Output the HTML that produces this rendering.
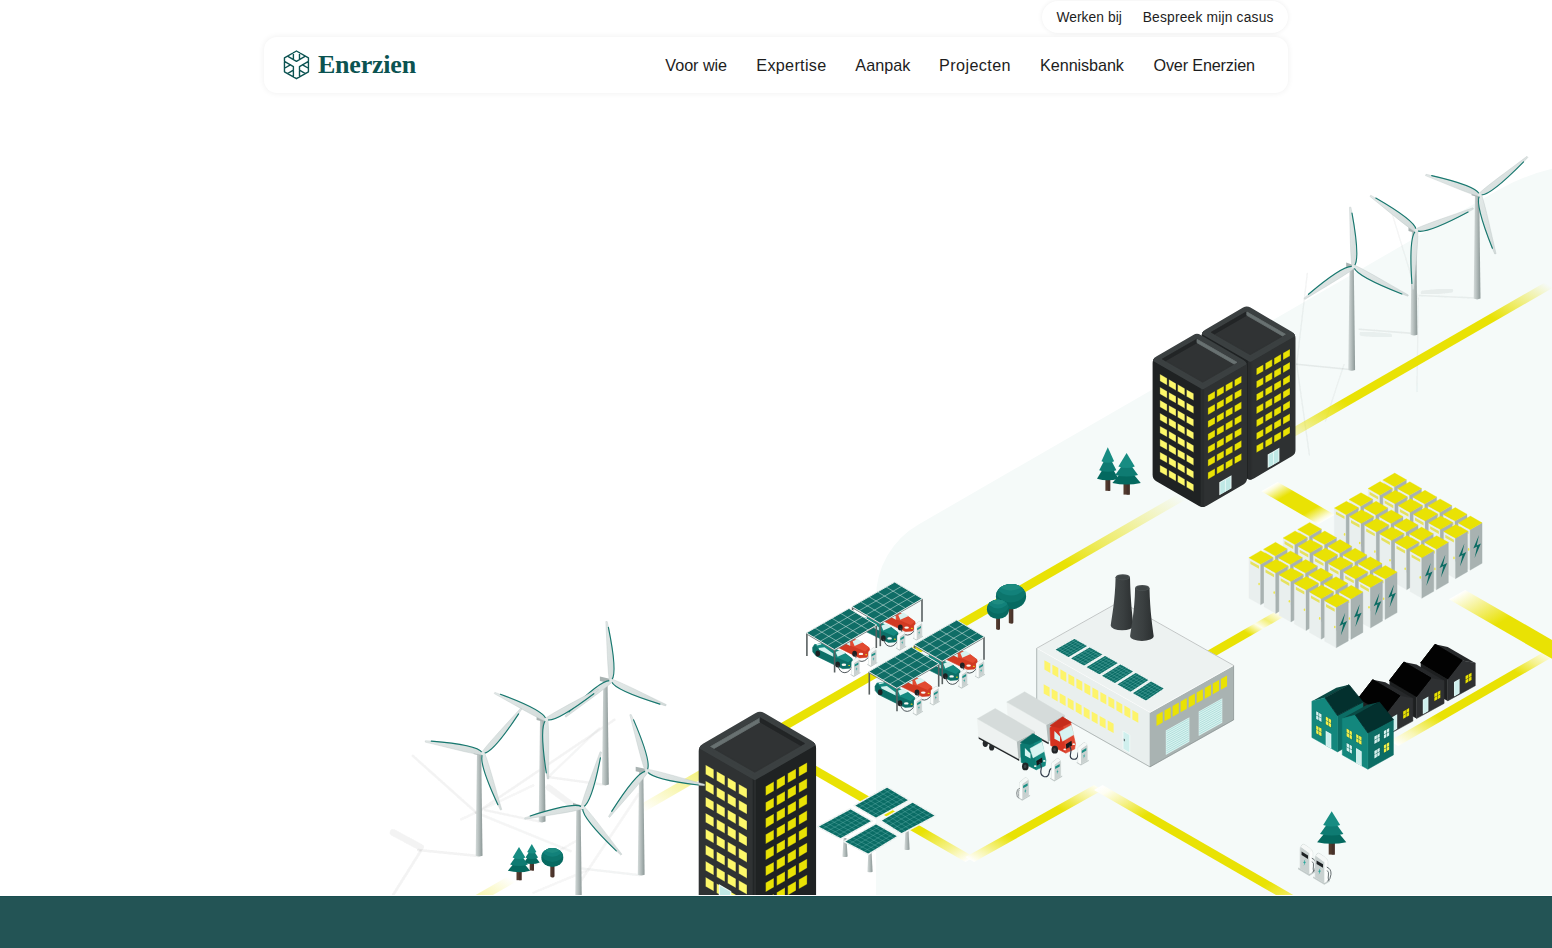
<!DOCTYPE html>
<html lang="nl"><head><meta charset="utf-8"><title>Enerzien</title>
<style>
html,body{margin:0;padding:0;background:#fff;overflow:hidden}
body{width:1552px;height:948px;position:relative;overflow:hidden;font-family:"Liberation Sans",sans-serif;}
#ill{position:absolute;left:0;top:0;width:1552px;height:894.7px;display:block}
#foot{position:absolute;left:0;top:895.6px;width:1552px;height:52.4px;background:#235455;border-top:1px solid #1a4e50;box-sizing:border-box}
#pill{position:absolute;left:1041.5px;top:0.5px;width:246.5px;height:32.5px;border-radius:16.25px;background:#fff;box-shadow:0 0 5px rgba(0,0,0,.07)}
#nav{position:absolute;left:264px;top:37.2px;width:1024px;height:55.6px;border-radius:13px;background:#fff;box-shadow:0 0 6px rgba(0,0,0,.07)}
.nv,.tp{position:absolute;white-space:nowrap;color:#1d1d1d;text-decoration:none}
.nv{top:55px;font-size:16.2px;line-height:20px}
.tp{top:9.1px;font-size:13.8px;line-height:18px}
#brand{text-decoration:none;position:absolute;left:318px;top:48.5px;font-family:"Liberation Serif",serif;font-weight:700;font-size:26px;line-height:32px;color:#0b5351;white-space:nowrap;letter-spacing:-0.22px}
#logo{position:absolute;left:281px;top:48px;width:32px;height:34px}
</style></head><body>
<svg id="ill" viewBox="0 0 1552 894.7">
<defs>
<linearGradient id="g1" gradientUnits="userSpaceOnUse" x1="466" y1="905.6" x2="489" y2="865.7"><stop offset="0.000" stop-color="#e9e204" stop-opacity="0.42"/><stop offset="0.350" stop-color="#e9e204" stop-opacity="0.3"/><stop offset="1.000" stop-color="#e9e204" stop-opacity="0"/></linearGradient>
<linearGradient id="g2" gradientUnits="userSpaceOnUse" x1="640" y1="809.5" x2="910.8" y2="340.2"><stop offset="0.000" stop-color="#e9e204" stop-opacity="0"/><stop offset="0.111" stop-color="#e9e204" stop-opacity="0.5"/><stop offset="0.194" stop-color="#e9e204" stop-opacity="1"/><stop offset="0.786" stop-color="#e9e204" stop-opacity="1"/><stop offset="0.849" stop-color="#e9e204" stop-opacity="0.62"/><stop offset="0.923" stop-color="#e9e204" stop-opacity="0.3"/><stop offset="1.000" stop-color="#e9e204" stop-opacity="0"/></linearGradient>
<linearGradient id="g3" gradientUnits="userSpaceOnUse" x1="1288" y1="435.6" x2="1418.4" y2="209.6"><stop offset="0.000" stop-color="#e9e204" stop-opacity="0.2"/><stop offset="0.115" stop-color="#e9e204" stop-opacity="0.65"/><stop offset="0.222" stop-color="#e9e204" stop-opacity="1"/><stop offset="0.782" stop-color="#e9e204" stop-opacity="1"/><stop offset="0.889" stop-color="#e9e204" stop-opacity="0.5"/><stop offset="1.000" stop-color="#e9e204" stop-opacity="0"/></linearGradient>
<linearGradient id="g4" gradientUnits="userSpaceOnUse" x1="805" y1="764.5" x2="887.3" y2="907.2"><stop offset="0.000" stop-color="#e9e204"/><stop offset="0.710" stop-color="#e9e204"/><stop offset="0.880" stop-color="#f5f28e"/><stop offset="1.000" stop-color="#ffffff"/></linearGradient>
<linearGradient id="g5" gradientUnits="userSpaceOnUse" x1="969.8" y1="859.6" x2="1033.1" y2="749.9"><stop offset="0.000" stop-color="#ffffff"/><stop offset="0.120" stop-color="#f7f5a7"/><stop offset="0.320" stop-color="#e9e204"/><stop offset="0.700" stop-color="#e9e204"/><stop offset="0.880" stop-color="#f6f39b"/><stop offset="1.000" stop-color="#fefef2"/></linearGradient>
<linearGradient id="g6" gradientUnits="userSpaceOnUse" x1="1098.3" y1="787.5" x2="1198.1" y2="960.4"><stop offset="0.000" stop-color="#ffffff"/><stop offset="0.040" stop-color="#fefef2"/><stop offset="0.120" stop-color="#f6f39b"/><stop offset="0.240" stop-color="#e9e204"/><stop offset="0.840" stop-color="#e9e204"/><stop offset="0.930" stop-color="#f0eb4f"/><stop offset="1.000" stop-color="#faf8c0"/></linearGradient>
<linearGradient id="g7" gradientUnits="userSpaceOnUse" x1="1200" y1="660.1" x2="1240.5" y2="590"><stop offset="0.000" stop-color="#e9e204"/><stop offset="0.580" stop-color="#e9e204"/><stop offset="0.728" stop-color="#fdfdeb"/><stop offset="0.840" stop-color="#f3ef75"/><stop offset="1.000" stop-color="#ffffff"/></linearGradient>
<linearGradient id="g8" gradientUnits="userSpaceOnUse" x1="1269.5" y1="486.6" x2="1298" y2="535.9"><stop offset="0.000" stop-color="#ffffff"/><stop offset="0.060" stop-color="#fcfbd9"/><stop offset="0.280" stop-color="#e9e204"/><stop offset="0.720" stop-color="#e9e204"/><stop offset="0.940" stop-color="#fcfbd9"/><stop offset="1.000" stop-color="#ffffff"/></linearGradient>
<linearGradient id="g9" gradientUnits="userSpaceOnUse" x1="1394" y1="743.5" x2="1472.9" y2="606.7"><stop offset="0.000" stop-color="#ffffff"/><stop offset="0.114" stop-color="#f8f6b4"/><stop offset="0.291" stop-color="#e9e204"/><stop offset="0.778" stop-color="#e9e204"/><stop offset="0.886" stop-color="#f5f28e"/><stop offset="1.000" stop-color="#ffffff"/></linearGradient>
<linearGradient id="g10" gradientUnits="userSpaceOnUse" x1="1457" y1="594.6" x2="1509.5" y2="685.5"><stop offset="0.000" stop-color="#ffffff"/><stop offset="0.050" stop-color="#fcfce1"/><stop offset="0.219" stop-color="#f4f082"/><stop offset="0.438" stop-color="#e9e204"/><stop offset="1.000" stop-color="#e9e204"/></linearGradient>
<filter id="blur1" x="-20%" y="-20%" width="140%" height="140%"><feGaussianBlur stdDeviation="0.7"/></filter>
<linearGradient id="bld" x1="0" x2="1" y1="0" y2="1"><stop offset="0" stop-color="#e3e9e8"/><stop offset="1" stop-color="#d3dbda"/></linearGradient>
<linearGradient id="chim" x1="0" x2="1" y1="0" y2="0"><stop offset="0" stop-color="#454b4c"/><stop offset="0.55" stop-color="#3a3f40"/><stop offset="1" stop-color="#2b2f30"/></linearGradient>
<linearGradient id="twr" x1="0" x2="1" y1="0" y2="0"><stop offset="0" stop-color="#d3dad9"/><stop offset="0.45" stop-color="#b5bebd"/><stop offset="1" stop-color="#8b9796"/></linearGradient>
<filter id="blur2" x="-20%" y="-20%" width="140%" height="140%"><feGaussianBlur stdDeviation="1.6"/></filter>
</defs>
<path d="M876,896 L876,598.1 A85,85 0 0 1 918.5,524.5 L1500,189 Q1530,172.7 1560,167 L1560,896 Z" fill="#f5faf9"/>
<g>
<line x1="1296.7" y1="364.2" x2="1352.4" y2="369.7" stroke="#4a5655" stroke-width="1.6" stroke-opacity="0.1" stroke-linecap="round" filter="url(#blur1)"/>
<line x1="1307.3" y1="273.5" x2="1296.7" y2="364.2" stroke="#4a5655" stroke-width="1.3" stroke-opacity="0.07" stroke-linecap="round" filter="url(#blur1)"/>
<line x1="1296.7" y1="364.2" x2="1309.4" y2="454.9" stroke="#4a5655" stroke-width="1.3" stroke-opacity="0.07" stroke-linecap="round" filter="url(#blur1)"/>
<line x1="1325.4" y1="421.1" x2="1344" y2="364.6" stroke="#4a5655" stroke-width="1.3" stroke-opacity="0.06" stroke-linecap="round" filter="url(#blur1)"/>
<line x1="1391.7" y1="212.3" x2="1418.2" y2="298.8" stroke="#4a5655" stroke-width="1.3" stroke-opacity="0.06" stroke-linecap="round" filter="url(#blur1)"/>
<line x1="1418.2" y1="298.8" x2="1417" y2="391.6" stroke="#4a5655" stroke-width="1.3" stroke-opacity="0.06" stroke-linecap="round" filter="url(#blur1)"/>
<line x1="1359.2" y1="329.2" x2="1412.8" y2="333.4" stroke="#4a5655" stroke-width="1.6" stroke-opacity="0.09" stroke-linecap="round" filter="url(#blur1)"/>
<line x1="1362.1" y1="333.4" x2="1389.6" y2="335.9" stroke="#4a5655" stroke-width="5.0" stroke-opacity="0.07" stroke-linecap="round" filter="url(#blur1)"/>
<line x1="1423.3" y1="292.9" x2="1450.7" y2="290.3" stroke="#4a5655" stroke-width="5.0" stroke-opacity="0.08" stroke-linecap="round" filter="url(#blur1)"/>
<line x1="1419.1" y1="295.4" x2="1476.1" y2="297.9" stroke="#4a5655" stroke-width="1.5" stroke-opacity="0.08" stroke-linecap="round" filter="url(#blur1)"/>
<line x1="412.9" y1="755.9" x2="476.4" y2="812.8" stroke="#4a5655" stroke-width="2.52" stroke-opacity="0.0625" stroke-linecap="round" filter="url(#blur1)"/>
<line x1="476.4" y1="812.8" x2="614.4" y2="719.7" stroke="#4a5655" stroke-width="2.52" stroke-opacity="0.0625" stroke-linecap="round" filter="url(#blur1)"/>
<line x1="476.4" y1="812.8" x2="570.6" y2="851.2" stroke="#4a5655" stroke-width="2.52" stroke-opacity="0.056249999999999994" stroke-linecap="round" filter="url(#blur1)"/>
<line x1="461.1" y1="819.4" x2="533.3" y2="785.4" stroke="#4a5655" stroke-width="2.3100000000000005" stroke-opacity="0.05" stroke-linecap="round" filter="url(#blur1)"/>
<line x1="393.1" y1="832.5" x2="420.5" y2="847.2" stroke="#4a5655" stroke-width="6.825" stroke-opacity="0.0625" stroke-linecap="round" filter="url(#blur1)"/>
<line x1="418.3" y1="850.1" x2="478.6" y2="856" stroke="#4a5655" stroke-width="2.52" stroke-opacity="0.075" stroke-linecap="round" filter="url(#blur1)"/>
<line x1="420.5" y1="851.2" x2="393.1" y2="895" stroke="#4a5655" stroke-width="2.7300000000000004" stroke-opacity="0.0625" stroke-linecap="round" filter="url(#blur1)"/>
<line x1="548.7" y1="777.1" x2="603.4" y2="784.6" stroke="#4a5655" stroke-width="2.3100000000000005" stroke-opacity="0.075" stroke-linecap="round" filter="url(#blur1)"/>
<line x1="485.1" y1="810.2" x2="541" y2="821.8" stroke="#4a5655" stroke-width="2.3100000000000005" stroke-opacity="0.0625" stroke-linecap="round" filter="url(#blur1)"/>
<line x1="582.6" y1="868.7" x2="639.6" y2="875.2" stroke="#4a5655" stroke-width="2.3100000000000005" stroke-opacity="0.06875" stroke-linecap="round" filter="url(#blur1)"/>
<line x1="599.1" y1="728.5" x2="548.7" y2="776.7" stroke="#4a5655" stroke-width="2.3100000000000005" stroke-opacity="0.056249999999999994" stroke-linecap="round" filter="url(#blur1)"/>
<line x1="548.7" y1="787.6" x2="573.9" y2="806.2" stroke="#4a5655" stroke-width="6.300000000000001" stroke-opacity="0.0625" stroke-linecap="round" filter="url(#blur1)"/>
<line x1="638.5" y1="794.2" x2="577.2" y2="886.2" stroke="#4a5655" stroke-width="2.52" stroke-opacity="0.056249999999999994" stroke-linecap="round" filter="url(#blur1)"/>
<line x1="520.2" y1="873.1" x2="577.2" y2="840.2" stroke="#4a5655" stroke-width="2.3100000000000005" stroke-opacity="0.05" stroke-linecap="round" filter="url(#blur1)"/>
<line x1="533.3" y1="892.8" x2="585.9" y2="870.9" stroke="#4a5655" stroke-width="2.3100000000000005" stroke-opacity="0.05" stroke-linecap="round" filter="url(#blur1)"/>
</g>
<polygon points="461.7,903.1 470.3,908.1 516.3,881.5 507.7,876.5" fill="url(#g1)"/>
<polygon points="635.7,807 644.3,812 1186.3,499.2 1177.7,494.2" fill="url(#g2)"/>
<polygon points="1283.7,433.1 1292.3,438.1 1553.3,287.5 1544.7,282.5" fill="url(#g3)"/>
<polygon points="800.7,767 809.3,762 974.1,857.1 965.5,862.1" fill="url(#g4)"/>
<polygon points="965.5,857.1 974.1,862.1 1102.6,790 1094,785" fill="url(#g5)"/>
<polygon points="1094,790 1102.6,785 1302.3,900.2 1293.7,905.2" fill="url(#g6)"/>
<polygon points="1195.7,657.6 1204.3,662.6 1285.3,615.8 1276.7,610.8" fill="url(#g7)"/>
<polygon points="1261.3,491.3 1277.7,481.9 1334.7,514.8 1318.3,524.2" fill="url(#g8)"/>
<polygon points="1389.7,741 1398.3,746 1556.3,654.8 1547.7,649.8" fill="url(#g9)"/>
<polygon points="1448.8,599.3 1465.2,589.9 1570.2,650.4 1553.8,659.9" fill="url(#g10)"/>
<path d="M1349.6,265.7 L1353.8,265.7 L1355.1,369.9 Q1351.7,371.5 1348.3,369.9 Z" fill="url(#twr)"/>
<polygon points="1346.2,262.5 1353.1,264.9 1353.1,269.3 1346.2,267.1" fill="#a9b3b2"/>
<path d="M1354.4,265.8 C1358.7,260.5 1356.2,233.7 1350.9,207.2 L1349.5,207.2 C1350.3,231.1 1350.2,252 1351.8,265.9 Z" fill="url(#bld)" stroke="#bcc6c5" stroke-width="0.4"/>
<path d="M1354.4,265.8 C1358.7,260.5 1356.3,236.7 1352,213.1" fill="none" stroke="#17786f" stroke-width="1.15" stroke-linecap="round"/>
<path d="M1352.4,266.5 C1345.7,265.4 1324.1,280.6 1304,298.2 L1304.8,299.4 C1324.8,287 1342.7,276.9 1353.8,268.7 Z" fill="url(#bld)" stroke="#bcc6c5" stroke-width="0.4"/>
<path d="M1352.4,266.5 C1345.7,265.4 1326.6,279 1308.5,294.3" fill="none" stroke="#17786f" stroke-width="1.15" stroke-linecap="round"/>
<path d="M1354,267.8 C1356.5,274.4 1381.4,286.6 1407.8,296.2 L1408.4,295 C1386.9,282.9 1368.4,271.7 1355.3,265.5 Z" fill="url(#bld)" stroke="#bcc6c5" stroke-width="0.4"/>
<path d="M1354,267.8 C1356.5,274.4 1378.8,285 1401.9,294" fill="none" stroke="#17786f" stroke-width="1.15" stroke-linecap="round"/>
<circle cx="1353.6" cy="266.7" r="1.9" fill="#e3e9e8" />
<path d="M1411.9,229.5 L1416.1,229.5 L1417.4,334.8 Q1414,336.4 1410.6,334.8 Z" fill="url(#twr)"/>
<polygon points="1408.5,226.3 1415.7,228.7 1415.7,233.1 1408.5,230.9" fill="#a9b3b2"/>
<path d="M1416,229.3 C1414.9,222.7 1393.7,207.9 1370.7,195.3 L1369.9,196.4 C1387.9,210.7 1403.2,223.9 1414.4,231.4 Z" fill="url(#bld)" stroke="#bcc6c5" stroke-width="0.4"/>
<path d="M1416,229.3 C1414.9,222.7 1395.9,209.7 1375.8,198.1" fill="none" stroke="#17786f" stroke-width="1.15" stroke-linecap="round"/>
<path d="M1417.3,230.9 C1423.8,233.4 1449.2,222.6 1473.5,209.1 L1473,207.8 C1450,216.1 1429.5,222.6 1416.4,228.5 Z" fill="url(#bld)" stroke="#bcc6c5" stroke-width="0.4"/>
<path d="M1417.3,230.9 C1423.8,233.4 1446.3,223.6 1468.1,212" fill="none" stroke="#17786f" stroke-width="1.15" stroke-linecap="round"/>
<path d="M1415.4,231.3 C1410.5,236.1 1410,262.7 1412.4,289.5 L1413.8,289.6 C1415.6,266 1418,245.4 1417.9,231.5 Z" fill="url(#bld)" stroke="#bcc6c5" stroke-width="0.4"/>
<path d="M1415.4,231.3 C1410.5,236.1 1410.3,259.8 1411.9,283.5" fill="none" stroke="#17786f" stroke-width="1.15" stroke-linecap="round"/>
<circle cx="1416.2" cy="230.5" r="1.9" fill="#e3e9e8" />
<path d="M1475,193.9 L1479.2,193.9 L1480.5,298.6 Q1477.1,300.2 1473.7,298.6 Z" fill="url(#twr)"/>
<polygon points="1471.6,190.7 1479.3,193.1 1479.3,197.5 1471.6,195.3" fill="#a9b3b2"/>
<path d="M1479.3,193.8 C1476.3,187.8 1451.6,179.7 1426,174.3 L1425.5,175.6 C1446.9,184.2 1465.4,192.3 1478.4,196.3 Z" fill="url(#bld)" stroke="#bcc6c5" stroke-width="0.4"/>
<path d="M1479.3,193.8 C1476.3,187.8 1454.3,180.8 1431.7,175.6" fill="none" stroke="#17786f" stroke-width="1.15" stroke-linecap="round"/>
<path d="M1481,195 C1487.9,195.3 1508.8,177.5 1527.9,157.4 L1527,156.3 C1507.6,171.1 1490.1,183.4 1479.4,192.9 Z" fill="url(#bld)" stroke="#bcc6c5" stroke-width="0.4"/>
<path d="M1481,195 C1487.9,195.3 1506.4,179.3 1523.6,161.8" fill="none" stroke="#17786f" stroke-width="1.15" stroke-linecap="round"/>
<path d="M1479.3,196 C1476.1,202.2 1484,228.5 1494.7,254 L1496.1,253.7 C1490.4,229.9 1486.2,209 1481.8,195.3 Z" fill="url(#bld)" stroke="#bcc6c5" stroke-width="0.4"/>
<path d="M1479.3,196 C1476.1,202.2 1483.3,225.5 1492.4,248.3" fill="none" stroke="#17786f" stroke-width="1.15" stroke-linecap="round"/>
<circle cx="1479.8" cy="194.9" r="1.9" fill="#e3e9e8" />
<clipPath id="c1"><path d="M1201.5,336.2 Q1201.5,332 1205.2,329.8 L1243.1,307.6 Q1246.8,305.5 1250.5,307.6 L1291.8,331.8 Q1295.5,333.9 1295.5,338.2 L1295.5,450 Q1295.5,454.2 1291.8,456.3 L1253.9,478.4 Q1250.2,480.5 1246.5,478.4 L1205.2,454.4 Q1201.5,452.3 1201.5,448 Z"/></clipPath><g clip-path="url(#c1)">
<polygon points="1202.6,451.7 1250.2,479.2 1250.2,359.7 1202.6,332.2" fill="#1f2223" stroke="#1f2223" stroke-width="4" stroke-linejoin="round"/>
<polygon points="1250.2,479.2 1294.4,453.7 1294.4,334.2 1250.2,359.7" fill="#2e3132" stroke="#2e3132" stroke-width="4" stroke-linejoin="round"/>
<polygon points="1249,482.2 1251.4,482.2 1251.4,359.7 1249,359.7" fill="#292c2d"/>
<polygon points="1202.6,332.2 1250.2,359.7 1294.4,334.2 1246.8,306.7" fill="#3b4041" stroke="#3b4041" stroke-width="4" stroke-linejoin="round"/>
</g>
<polygon points="1211.5,332.2 1246.8,311.8 1285.5,334.2 1250.2,354.5" fill="#303334" stroke="#303334" stroke-width="1.2" stroke-linejoin="round"/>
<polygon points="1211.5,332.2 1246.8,311.8 1246.8,315.3 1214.5,333.9" fill="#222526" stroke="#222526" stroke-width="0.8" stroke-linejoin="round"/>
<polygon points="1246.8,311.8 1285.5,334.2 1282.5,335.9 1246.8,315.3" fill="#687171" stroke="#687171" stroke-width="0.8" stroke-linejoin="round"/>
<polygon points="1256.4,368.4 1263.4,364.4 1263.4,371.3 1256.4,375.3" fill="#e9e204" stroke="#0d1130" stroke-width="0.35" stroke-opacity="0.8"/>
<polygon points="1256.4,381.3 1263.4,377.3 1263.4,384.2 1256.4,388.2" fill="#e9e204" stroke="#0d1130" stroke-width="0.35" stroke-opacity="0.8"/>
<polygon points="1256.4,394.2 1263.4,390.2 1263.4,397.1 1256.4,401.1" fill="#e9e204" stroke="#0d1130" stroke-width="0.35" stroke-opacity="0.8"/>
<polygon points="1256.4,407.1 1263.4,403.1 1263.4,410 1256.4,414" fill="#e9e204" stroke="#0d1130" stroke-width="0.35" stroke-opacity="0.8"/>
<polygon points="1256.4,420 1263.4,416 1263.4,422.9 1256.4,426.9" fill="#e9e204" stroke="#0d1130" stroke-width="0.35" stroke-opacity="0.8"/>
<polygon points="1256.4,432.9 1263.4,428.9 1263.4,435.8 1256.4,439.8" fill="#e9e204" stroke="#0d1130" stroke-width="0.35" stroke-opacity="0.8"/>
<polygon points="1256.4,445.8 1263.4,441.8 1263.4,448.7 1256.4,452.7" fill="#e9e204" stroke="#0d1130" stroke-width="0.35" stroke-opacity="0.8"/>
<polygon points="1265.3,363.3 1272.3,359.2 1272.3,366.1 1265.3,370.2" fill="#e9e204" stroke="#0d1130" stroke-width="0.35" stroke-opacity="0.8"/>
<polygon points="1265.3,376.2 1272.3,372.1 1272.3,379 1265.3,383.1" fill="#e9e204" stroke="#0d1130" stroke-width="0.35" stroke-opacity="0.8"/>
<polygon points="1265.3,389.1 1272.3,385 1272.3,391.9 1265.3,396" fill="#e9e204" stroke="#0d1130" stroke-width="0.35" stroke-opacity="0.8"/>
<polygon points="1265.3,402 1272.3,397.9 1272.3,404.8 1265.3,408.9" fill="#e9e204" stroke="#0d1130" stroke-width="0.35" stroke-opacity="0.8"/>
<polygon points="1265.3,414.9 1272.3,410.8 1272.3,417.7 1265.3,421.8" fill="#e9e204" stroke="#0d1130" stroke-width="0.35" stroke-opacity="0.8"/>
<polygon points="1265.3,427.8 1272.3,423.7 1272.3,430.6 1265.3,434.7" fill="#e9e204" stroke="#0d1130" stroke-width="0.35" stroke-opacity="0.8"/>
<polygon points="1265.3,440.7 1272.3,436.6 1272.3,443.5 1265.3,447.6" fill="#e9e204" stroke="#0d1130" stroke-width="0.35" stroke-opacity="0.8"/>
<polygon points="1274.1,358.2 1281.1,354.1 1281.1,361 1274.1,365.1" fill="#e9e204" stroke="#0d1130" stroke-width="0.35" stroke-opacity="0.8"/>
<polygon points="1274.1,371.1 1281.1,367 1281.1,373.9 1274.1,378" fill="#e9e204" stroke="#0d1130" stroke-width="0.35" stroke-opacity="0.8"/>
<polygon points="1274.1,384 1281.1,379.9 1281.1,386.8 1274.1,390.9" fill="#e9e204" stroke="#0d1130" stroke-width="0.35" stroke-opacity="0.8"/>
<polygon points="1274.1,396.9 1281.1,392.8 1281.1,399.7 1274.1,403.8" fill="#e9e204" stroke="#0d1130" stroke-width="0.35" stroke-opacity="0.8"/>
<polygon points="1274.1,409.8 1281.1,405.7 1281.1,412.6 1274.1,416.7" fill="#e9e204" stroke="#0d1130" stroke-width="0.35" stroke-opacity="0.8"/>
<polygon points="1274.1,422.7 1281.1,418.6 1281.1,425.5 1274.1,429.6" fill="#e9e204" stroke="#0d1130" stroke-width="0.35" stroke-opacity="0.8"/>
<polygon points="1274.1,435.6 1281.1,431.5 1281.1,438.4 1274.1,442.5" fill="#e9e204" stroke="#0d1130" stroke-width="0.35" stroke-opacity="0.8"/>
<polygon points="1283,353.1 1290,349 1290,355.9 1283,360" fill="#e9e204" stroke="#0d1130" stroke-width="0.35" stroke-opacity="0.8"/>
<polygon points="1283,366 1290,361.9 1290,368.8 1283,372.9" fill="#e9e204" stroke="#0d1130" stroke-width="0.35" stroke-opacity="0.8"/>
<polygon points="1283,378.9 1290,374.8 1290,381.7 1283,385.8" fill="#e9e204" stroke="#0d1130" stroke-width="0.35" stroke-opacity="0.8"/>
<polygon points="1283,391.8 1290,387.7 1290,394.6 1283,398.7" fill="#e9e204" stroke="#0d1130" stroke-width="0.35" stroke-opacity="0.8"/>
<polygon points="1283,404.7 1290,400.6 1290,407.5 1283,411.6" fill="#e9e204" stroke="#0d1130" stroke-width="0.35" stroke-opacity="0.8"/>
<polygon points="1283,417.6 1290,413.5 1290,420.4 1283,424.5" fill="#e9e204" stroke="#0d1130" stroke-width="0.35" stroke-opacity="0.8"/>
<polygon points="1283,430.5 1290,426.4 1290,433.3 1283,437.4" fill="#e9e204" stroke="#0d1130" stroke-width="0.35" stroke-opacity="0.8"/>
<polygon points="1267.7,454.5 1279.4,447.7 1279.4,461.2 1267.7,468" fill="#e9f7f5"/>
<polygon points="1268.7,454.9 1278.4,449.3 1278.4,461.6 1268.7,467.2" fill="#bfe8e5"/>
<line x1="1273.5" y1="452.1" x2="1273.5" y2="464.1" stroke="#eefaf8" stroke-width="0.8" />
<clipPath id="c2"><path d="M1152.6,363 Q1152.6,358.8 1156.3,356.6 L1193.3,334.9 Q1197,332.8 1200.7,334.9 L1243.4,359.9 Q1247.1,362.1 1247.1,366.3 L1247.1,478.1 Q1247.1,482.3 1243.4,484.5 L1206.4,506 Q1202.7,508.1 1199,506 L1156.3,481.2 Q1152.6,479.1 1152.6,474.8 Z"/></clipPath><g clip-path="url(#c2)">
<polygon points="1153.7,478.5 1202.7,506.8 1202.7,387.3 1153.7,359" fill="#1f2223" stroke="#1f2223" stroke-width="4" stroke-linejoin="round"/>
<polygon points="1202.7,506.8 1246,481.8 1246,362.3 1202.7,387.3" fill="#2e3132" stroke="#2e3132" stroke-width="4" stroke-linejoin="round"/>
<polygon points="1201.5,509.8 1203.9,509.8 1203.9,387.3 1201.5,387.3" fill="#292c2d"/>
<polygon points="1153.7,359 1202.7,387.3 1246,362.3 1197,334" fill="#3b4041" stroke="#3b4041" stroke-width="4" stroke-linejoin="round"/>
</g>
<polygon points="1162.6,359 1197,339.2 1237.1,362.3 1202.7,382.1" fill="#303334" stroke="#303334" stroke-width="1.2" stroke-linejoin="round"/>
<polygon points="1162.6,359 1197,339.2 1197,342.7 1165.6,360.7" fill="#222526" stroke="#222526" stroke-width="0.8" stroke-linejoin="round"/>
<polygon points="1197,339.2 1237.1,362.3 1234.1,364 1197,342.7" fill="#687171" stroke="#687171" stroke-width="0.8" stroke-linejoin="round"/>
<polygon points="1159.9,374.1 1167.1,378.3 1167.1,385.3 1159.9,381.1" fill="#fdf86a" stroke="#0d1130" stroke-width="0.35" stroke-opacity="0.8"/>
<polygon points="1159.9,387.1 1167.1,391.2 1167.1,398.2 1159.9,394.1" fill="#fdf86a" stroke="#0d1130" stroke-width="0.35" stroke-opacity="0.8"/>
<polygon points="1159.9,400 1167.1,404.2 1167.1,411.2 1159.9,407" fill="#fdf86a" stroke="#0d1130" stroke-width="0.35" stroke-opacity="0.8"/>
<polygon points="1159.9,413 1167.1,417.2 1167.1,424.2 1159.9,420" fill="#fdf86a" stroke="#0d1130" stroke-width="0.35" stroke-opacity="0.8"/>
<polygon points="1159.9,426 1167.1,430.1 1167.1,437.1 1159.9,433" fill="#fdf86a" stroke="#0d1130" stroke-width="0.35" stroke-opacity="0.8"/>
<polygon points="1159.9,439 1167.1,443.1 1167.1,450.1 1159.9,446" fill="#fdf86a" stroke="#0d1130" stroke-width="0.35" stroke-opacity="0.8"/>
<polygon points="1159.9,451.9 1167.1,456.1 1167.1,463.1 1159.9,458.9" fill="#fdf86a" stroke="#0d1130" stroke-width="0.35" stroke-opacity="0.8"/>
<polygon points="1159.9,464.9 1167.1,469 1167.1,476 1159.9,471.9" fill="#fdf86a" stroke="#0d1130" stroke-width="0.35" stroke-opacity="0.8"/>
<polygon points="1168.8,379.2 1176,383.4 1176,390.4 1168.8,386.2" fill="#fdf86a" stroke="#0d1130" stroke-width="0.35" stroke-opacity="0.8"/>
<polygon points="1168.8,392.2 1176,396.3 1176,403.3 1168.8,399.2" fill="#fdf86a" stroke="#0d1130" stroke-width="0.35" stroke-opacity="0.8"/>
<polygon points="1168.8,405.2 1176,409.3 1176,416.3 1168.8,412.2" fill="#fdf86a" stroke="#0d1130" stroke-width="0.35" stroke-opacity="0.8"/>
<polygon points="1168.8,418.1 1176,422.3 1176,429.3 1168.8,425.1" fill="#fdf86a" stroke="#0d1130" stroke-width="0.35" stroke-opacity="0.8"/>
<polygon points="1168.8,431.1 1176,435.2 1176,442.2 1168.8,438.1" fill="#fdf86a" stroke="#0d1130" stroke-width="0.35" stroke-opacity="0.8"/>
<polygon points="1168.8,444.1 1176,448.2 1176,455.2 1168.8,451.1" fill="#fdf86a" stroke="#0d1130" stroke-width="0.35" stroke-opacity="0.8"/>
<polygon points="1168.8,457 1176,461.2 1176,468.2 1168.8,464" fill="#fdf86a" stroke="#0d1130" stroke-width="0.35" stroke-opacity="0.8"/>
<polygon points="1168.8,470 1176,474.2 1176,481.2 1168.8,477" fill="#fdf86a" stroke="#0d1130" stroke-width="0.35" stroke-opacity="0.8"/>
<polygon points="1177.6,384.3 1184.8,388.5 1184.8,395.5 1177.6,391.3" fill="#fdf86a" stroke="#0d1130" stroke-width="0.35" stroke-opacity="0.8"/>
<polygon points="1177.6,397.3 1184.8,401.4 1184.8,408.4 1177.6,404.3" fill="#fdf86a" stroke="#0d1130" stroke-width="0.35" stroke-opacity="0.8"/>
<polygon points="1177.6,410.3 1184.8,414.4 1184.8,421.4 1177.6,417.3" fill="#fdf86a" stroke="#0d1130" stroke-width="0.35" stroke-opacity="0.8"/>
<polygon points="1177.6,423.2 1184.8,427.4 1184.8,434.4 1177.6,430.2" fill="#fdf86a" stroke="#0d1130" stroke-width="0.35" stroke-opacity="0.8"/>
<polygon points="1177.6,436.2 1184.8,440.4 1184.8,447.4 1177.6,443.2" fill="#fdf86a" stroke="#0d1130" stroke-width="0.35" stroke-opacity="0.8"/>
<polygon points="1177.6,449.2 1184.8,453.3 1184.8,460.3 1177.6,456.2" fill="#fdf86a" stroke="#0d1130" stroke-width="0.35" stroke-opacity="0.8"/>
<polygon points="1177.6,462.1 1184.8,466.3 1184.8,473.3 1177.6,469.1" fill="#fdf86a" stroke="#0d1130" stroke-width="0.35" stroke-opacity="0.8"/>
<polygon points="1177.6,475.1 1184.8,479.3 1184.8,486.3 1177.6,482.1" fill="#fdf86a" stroke="#0d1130" stroke-width="0.35" stroke-opacity="0.8"/>
<polygon points="1186.5,389.4 1193.7,393.6 1193.7,400.6 1186.5,396.4" fill="#fdf86a" stroke="#0d1130" stroke-width="0.35" stroke-opacity="0.8"/>
<polygon points="1186.5,402.4 1193.7,406.6 1193.7,413.6 1186.5,409.4" fill="#fdf86a" stroke="#0d1130" stroke-width="0.35" stroke-opacity="0.8"/>
<polygon points="1186.5,415.4 1193.7,419.5 1193.7,426.5 1186.5,422.4" fill="#fdf86a" stroke="#0d1130" stroke-width="0.35" stroke-opacity="0.8"/>
<polygon points="1186.5,428.3 1193.7,432.5 1193.7,439.5 1186.5,435.3" fill="#fdf86a" stroke="#0d1130" stroke-width="0.35" stroke-opacity="0.8"/>
<polygon points="1186.5,441.3 1193.7,445.5 1193.7,452.5 1186.5,448.3" fill="#fdf86a" stroke="#0d1130" stroke-width="0.35" stroke-opacity="0.8"/>
<polygon points="1186.5,454.3 1193.7,458.4 1193.7,465.4 1186.5,461.3" fill="#fdf86a" stroke="#0d1130" stroke-width="0.35" stroke-opacity="0.8"/>
<polygon points="1186.5,467.3 1193.7,471.4 1193.7,478.4 1186.5,474.3" fill="#fdf86a" stroke="#0d1130" stroke-width="0.35" stroke-opacity="0.8"/>
<polygon points="1186.5,480.2 1193.7,484.4 1193.7,491.4 1186.5,487.2" fill="#fdf86a" stroke="#0d1130" stroke-width="0.35" stroke-opacity="0.8"/>
<polygon points="1207.9,395.2 1215,391.1 1215,397.9 1207.9,402" fill="#e9e204" stroke="#0d1130" stroke-width="0.35" stroke-opacity="0.8"/>
<polygon points="1207.9,408.1 1215,404 1215,410.8 1207.9,414.9" fill="#e9e204" stroke="#0d1130" stroke-width="0.35" stroke-opacity="0.8"/>
<polygon points="1207.9,421 1215,416.9 1215,423.7 1207.9,427.8" fill="#e9e204" stroke="#0d1130" stroke-width="0.35" stroke-opacity="0.8"/>
<polygon points="1207.9,433.9 1215,429.8 1215,436.6 1207.9,440.7" fill="#e9e204" stroke="#0d1130" stroke-width="0.35" stroke-opacity="0.8"/>
<polygon points="1207.9,446.8 1215,442.7 1215,449.5 1207.9,453.6" fill="#e9e204" stroke="#0d1130" stroke-width="0.35" stroke-opacity="0.8"/>
<polygon points="1207.9,459.7 1215,455.6 1215,462.4 1207.9,466.5" fill="#e9e204" stroke="#0d1130" stroke-width="0.35" stroke-opacity="0.8"/>
<polygon points="1207.9,472.6 1215,468.5 1215,475.3 1207.9,479.4" fill="#e9e204" stroke="#0d1130" stroke-width="0.35" stroke-opacity="0.8"/>
<polygon points="1216.8,390.1 1223.9,386 1223.9,392.8 1216.8,396.9" fill="#e9e204" stroke="#0d1130" stroke-width="0.35" stroke-opacity="0.8"/>
<polygon points="1216.8,403 1223.9,398.9 1223.9,405.7 1216.8,409.8" fill="#e9e204" stroke="#0d1130" stroke-width="0.35" stroke-opacity="0.8"/>
<polygon points="1216.8,415.9 1223.9,411.8 1223.9,418.6 1216.8,422.7" fill="#e9e204" stroke="#0d1130" stroke-width="0.35" stroke-opacity="0.8"/>
<polygon points="1216.8,428.8 1223.9,424.7 1223.9,431.5 1216.8,435.6" fill="#e9e204" stroke="#0d1130" stroke-width="0.35" stroke-opacity="0.8"/>
<polygon points="1216.8,441.7 1223.9,437.6 1223.9,444.4 1216.8,448.5" fill="#e9e204" stroke="#0d1130" stroke-width="0.35" stroke-opacity="0.8"/>
<polygon points="1216.8,454.6 1223.9,450.5 1223.9,457.3 1216.8,461.4" fill="#e9e204" stroke="#0d1130" stroke-width="0.35" stroke-opacity="0.8"/>
<polygon points="1216.8,467.5 1223.9,463.4 1223.9,470.2 1216.8,474.3" fill="#e9e204" stroke="#0d1130" stroke-width="0.35" stroke-opacity="0.8"/>
<polygon points="1225.6,385 1232.7,380.9 1232.7,387.7 1225.6,391.8" fill="#e9e204" stroke="#0d1130" stroke-width="0.35" stroke-opacity="0.8"/>
<polygon points="1225.6,397.9 1232.7,393.8 1232.7,400.6 1225.6,404.7" fill="#e9e204" stroke="#0d1130" stroke-width="0.35" stroke-opacity="0.8"/>
<polygon points="1225.6,410.8 1232.7,406.7 1232.7,413.5 1225.6,417.6" fill="#e9e204" stroke="#0d1130" stroke-width="0.35" stroke-opacity="0.8"/>
<polygon points="1225.6,423.7 1232.7,419.6 1232.7,426.4 1225.6,430.5" fill="#e9e204" stroke="#0d1130" stroke-width="0.35" stroke-opacity="0.8"/>
<polygon points="1225.6,436.6 1232.7,432.5 1232.7,439.3 1225.6,443.4" fill="#e9e204" stroke="#0d1130" stroke-width="0.35" stroke-opacity="0.8"/>
<polygon points="1225.6,449.5 1232.7,445.4 1232.7,452.2 1225.6,456.3" fill="#e9e204" stroke="#0d1130" stroke-width="0.35" stroke-opacity="0.8"/>
<polygon points="1225.6,462.4 1232.7,458.3 1232.7,465.1 1225.6,469.2" fill="#e9e204" stroke="#0d1130" stroke-width="0.35" stroke-opacity="0.8"/>
<polygon points="1234.5,379.9 1241.6,375.8 1241.6,382.6 1234.5,386.7" fill="#e9e204" stroke="#0d1130" stroke-width="0.35" stroke-opacity="0.8"/>
<polygon points="1234.5,392.8 1241.6,388.7 1241.6,395.5 1234.5,399.6" fill="#e9e204" stroke="#0d1130" stroke-width="0.35" stroke-opacity="0.8"/>
<polygon points="1234.5,405.7 1241.6,401.6 1241.6,408.4 1234.5,412.5" fill="#e9e204" stroke="#0d1130" stroke-width="0.35" stroke-opacity="0.8"/>
<polygon points="1234.5,418.6 1241.6,414.5 1241.6,421.3 1234.5,425.4" fill="#e9e204" stroke="#0d1130" stroke-width="0.35" stroke-opacity="0.8"/>
<polygon points="1234.5,431.5 1241.6,427.4 1241.6,434.2 1234.5,438.3" fill="#e9e204" stroke="#0d1130" stroke-width="0.35" stroke-opacity="0.8"/>
<polygon points="1234.5,444.4 1241.6,440.3 1241.6,447.1 1234.5,451.2" fill="#e9e204" stroke="#0d1130" stroke-width="0.35" stroke-opacity="0.8"/>
<polygon points="1234.5,457.3 1241.6,453.2 1241.6,460 1234.5,464.1" fill="#e9e204" stroke="#0d1130" stroke-width="0.35" stroke-opacity="0.8"/>
<polygon points="1219.3,482.3 1231.5,475.3 1231.5,488.3 1219.3,495.3" fill="#e9f7f5"/>
<polygon points="1220.3,482.7 1230.5,476.8 1230.5,488.6 1220.3,494.5" fill="#bfe8e5"/>
<line x1="1225.4" y1="479.8" x2="1225.4" y2="491.3" stroke="#eefaf8" stroke-width="0.8" />
<polygon points="1105.4,477.5 1110.2,477.5 1110.2,490.8 1105.4,490.8" fill="#523a2e"/>
<polygon points="1107.8,477.5 1110.2,477.5 1110.2,490.8 1107.8,490.8" fill="#46312a"/>
<path d="M1107.8,460.8 L1118.6,478.7 Q1107.8,481.7 1097,478.7 Z" fill="#04695f"/>
<path d="M1107.8,453.7 L1116.4,470.3 Q1107.8,473.3 1099.2,470.3 Z" fill="#0e7b72"/>
<path d="M1107.8,447.3 L1114.1,461.3 Q1107.8,464.3 1101.5,461.3 Z" fill="#178c82"/>
<polygon points="1123.5,481.8 1129.7,481.8 1129.7,494.6 1123.5,494.6" fill="#523a2e"/>
<polygon points="1126.6,481.8 1129.7,481.8 1129.7,494.6 1126.6,494.6" fill="#46312a"/>
<path d="M1126.6,465.9 L1140.8,483 Q1126.6,486 1112.4,483 Z" fill="#04695f"/>
<path d="M1126.6,459.2 L1138,475 Q1126.6,478 1115.2,475 Z" fill="#0e7b72"/>
<path d="M1126.6,453 L1134.8,466.4 Q1126.6,469.4 1118.4,466.4 Z" fill="#178c82"/>
<polygon points="1382.7,480.1 1394.4,486.7 1394.4,527.2 1382.7,520.6" fill="#e9efee" stroke="#e9efee" stroke-width="0.3" stroke-linejoin="round"/>
<polygon points="1394.4,486.7 1406.4,479.8 1406.4,520.3 1394.4,527.2" fill="#a8b2b1" stroke="#a8b2b1" stroke-width="0.3" stroke-linejoin="round"/>
<polygon points="1382.7,480.1 1394.4,486.7 1406.4,479.8 1394.7,473.1" fill="#e9e204" stroke="#e9e204" stroke-width="0.3" stroke-linejoin="round"/>
<polygon points="1384.2,483.3 1392.8,488.2 1392.8,491.1 1384.2,486.2" fill="#e6e25e"/>
<ellipse cx="1392.9" cy="506.4" rx="0.8" ry="1.3" fill="#ece64a" />
<polygon points="1397.8,488.7 1409.5,495.3 1409.5,535.8 1397.8,529.2" fill="#e9efee" stroke="#e9efee" stroke-width="0.3" stroke-linejoin="round"/>
<polygon points="1409.5,495.3 1421.5,488.4 1421.5,528.9 1409.5,535.8" fill="#a8b2b1" stroke="#a8b2b1" stroke-width="0.3" stroke-linejoin="round"/>
<polygon points="1397.8,488.7 1409.5,495.3 1421.5,488.4 1409.8,481.7" fill="#e9e204" stroke="#e9e204" stroke-width="0.3" stroke-linejoin="round"/>
<polygon points="1399.3,491.9 1407.9,496.8 1407.9,499.7 1399.3,494.8" fill="#e6e25e"/>
<ellipse cx="1408" cy="515" rx="0.8" ry="1.3" fill="#ece64a" />
<polygon points="1413,497.3 1424.7,503.9 1424.7,544.4 1413,537.8" fill="#e9efee" stroke="#e9efee" stroke-width="0.3" stroke-linejoin="round"/>
<polygon points="1424.7,503.9 1436.7,497 1436.7,537.5 1424.7,544.4" fill="#a8b2b1" stroke="#a8b2b1" stroke-width="0.3" stroke-linejoin="round"/>
<polygon points="1413,497.3 1424.7,503.9 1436.7,497 1425,490.3" fill="#e9e204" stroke="#e9e204" stroke-width="0.3" stroke-linejoin="round"/>
<polygon points="1414.5,500.5 1423.1,505.4 1423.1,508.3 1414.5,503.4" fill="#e6e25e"/>
<ellipse cx="1423.2" cy="523.6" rx="0.8" ry="1.3" fill="#ece64a" />
<polygon points="1428.1,505.9 1439.8,512.5 1439.8,553 1428.1,546.4" fill="#e9efee" stroke="#e9efee" stroke-width="0.3" stroke-linejoin="round"/>
<polygon points="1439.8,512.5 1451.8,505.6 1451.8,546.1 1439.8,553" fill="#a8b2b1" stroke="#a8b2b1" stroke-width="0.3" stroke-linejoin="round"/>
<polygon points="1428.1,505.9 1439.8,512.5 1451.8,505.6 1440.1,498.9" fill="#e9e204" stroke="#e9e204" stroke-width="0.3" stroke-linejoin="round"/>
<polygon points="1429.6,509.1 1438.2,514 1438.2,516.9 1429.6,512" fill="#e6e25e"/>
<ellipse cx="1438.3" cy="532.2" rx="0.8" ry="1.3" fill="#ece64a" />
<polygon points="1443.3,514.5 1455,521.1 1455,561.6 1443.3,555" fill="#e9efee" stroke="#e9efee" stroke-width="0.3" stroke-linejoin="round"/>
<polygon points="1455,521.1 1467,514.2 1467,554.7 1455,561.6" fill="#a8b2b1" stroke="#a8b2b1" stroke-width="0.3" stroke-linejoin="round"/>
<polygon points="1443.3,514.5 1455,521.1 1467,514.2 1455.3,507.5" fill="#e9e204" stroke="#e9e204" stroke-width="0.3" stroke-linejoin="round"/>
<polygon points="1444.8,517.7 1453.4,522.6 1453.4,525.5 1444.8,520.6" fill="#e6e25e"/>
<ellipse cx="1453.5" cy="540.8" rx="0.8" ry="1.3" fill="#ece64a" />
<polygon points="1458.4,523.1 1470.1,529.7 1470.1,570.2 1458.4,563.6" fill="#e9efee" stroke="#e9efee" stroke-width="0.3" stroke-linejoin="round"/>
<polygon points="1470.1,529.7 1482.1,522.8 1482.1,563.3 1470.1,570.2" fill="#a8b2b1" stroke="#a8b2b1" stroke-width="0.3" stroke-linejoin="round"/>
<polygon points="1458.4,523.1 1470.1,529.7 1482.1,522.8 1470.4,516.1" fill="#e9e204" stroke="#e9e204" stroke-width="0.3" stroke-linejoin="round"/>
<polygon points="1459.9,526.3 1468.5,531.2 1468.5,534.1 1459.9,529.2" fill="#e6e25e"/>
<ellipse cx="1468.6" cy="549.4" rx="0.8" ry="1.3" fill="#ece64a" />
<polygon points="1479,535.1 1473.3,548.4 1477.1,546.5 1474.6,557.9 1480.9,543.5 1476.7,545.4" fill="#0b6b63"/>
<polygon points="1368.1,488.6 1379.8,495.2 1379.8,535.7 1368.1,529.1" fill="#e9efee" stroke="#e9efee" stroke-width="0.3" stroke-linejoin="round"/>
<polygon points="1379.8,495.2 1391.8,488.2 1391.8,528.7 1379.8,535.7" fill="#a8b2b1" stroke="#a8b2b1" stroke-width="0.3" stroke-linejoin="round"/>
<polygon points="1368.1,488.6 1379.8,495.2 1391.8,488.2 1380.1,481.6" fill="#e9e204" stroke="#e9e204" stroke-width="0.3" stroke-linejoin="round"/>
<polygon points="1369.6,491.8 1378.2,496.7 1378.2,499.6 1369.6,494.7" fill="#e6e25e"/>
<ellipse cx="1378.3" cy="514.9" rx="0.8" ry="1.3" fill="#ece64a" />
<polygon points="1383.2,497.2 1394.9,503.8 1394.9,544.3 1383.2,537.7" fill="#e9efee" stroke="#e9efee" stroke-width="0.3" stroke-linejoin="round"/>
<polygon points="1394.9,503.8 1406.9,496.8 1406.9,537.3 1394.9,544.3" fill="#a8b2b1" stroke="#a8b2b1" stroke-width="0.3" stroke-linejoin="round"/>
<polygon points="1383.2,497.2 1394.9,503.8 1406.9,496.8 1395.2,490.2" fill="#e9e204" stroke="#e9e204" stroke-width="0.3" stroke-linejoin="round"/>
<polygon points="1384.7,500.4 1393.3,505.3 1393.3,508.2 1384.7,503.3" fill="#e6e25e"/>
<ellipse cx="1393.4" cy="523.5" rx="0.8" ry="1.3" fill="#ece64a" />
<polygon points="1398.4,505.8 1410.1,512.4 1410.1,552.9 1398.4,546.3" fill="#e9efee" stroke="#e9efee" stroke-width="0.3" stroke-linejoin="round"/>
<polygon points="1410.1,512.4 1422.1,505.4 1422.1,545.9 1410.1,552.9" fill="#a8b2b1" stroke="#a8b2b1" stroke-width="0.3" stroke-linejoin="round"/>
<polygon points="1398.4,505.8 1410.1,512.4 1422.1,505.4 1410.4,498.8" fill="#e9e204" stroke="#e9e204" stroke-width="0.3" stroke-linejoin="round"/>
<polygon points="1399.9,509 1408.5,513.9 1408.5,516.8 1399.9,511.9" fill="#e6e25e"/>
<ellipse cx="1408.6" cy="532.1" rx="0.8" ry="1.3" fill="#ece64a" />
<polygon points="1413.5,514.4 1425.2,521 1425.2,561.5 1413.5,554.9" fill="#e9efee" stroke="#e9efee" stroke-width="0.3" stroke-linejoin="round"/>
<polygon points="1425.2,521 1437.2,514 1437.2,554.5 1425.2,561.5" fill="#a8b2b1" stroke="#a8b2b1" stroke-width="0.3" stroke-linejoin="round"/>
<polygon points="1413.5,514.4 1425.2,521 1437.2,514 1425.5,507.4" fill="#e9e204" stroke="#e9e204" stroke-width="0.3" stroke-linejoin="round"/>
<polygon points="1415,517.6 1423.6,522.5 1423.6,525.4 1415,520.5" fill="#e6e25e"/>
<ellipse cx="1423.7" cy="540.7" rx="0.8" ry="1.3" fill="#ece64a" />
<polygon points="1428.7,523 1440.4,529.6 1440.4,570.1 1428.7,563.5" fill="#e9efee" stroke="#e9efee" stroke-width="0.3" stroke-linejoin="round"/>
<polygon points="1440.4,529.6 1452.4,522.6 1452.4,563.1 1440.4,570.1" fill="#a8b2b1" stroke="#a8b2b1" stroke-width="0.3" stroke-linejoin="round"/>
<polygon points="1428.7,523 1440.4,529.6 1452.4,522.6 1440.7,516" fill="#e9e204" stroke="#e9e204" stroke-width="0.3" stroke-linejoin="round"/>
<polygon points="1430.2,526.2 1438.8,531.1 1438.8,534 1430.2,529.1" fill="#e6e25e"/>
<ellipse cx="1438.9" cy="549.3" rx="0.8" ry="1.3" fill="#ece64a" />
<polygon points="1443.8,531.6 1455.5,538.2 1455.5,578.7 1443.8,572.1" fill="#e9efee" stroke="#e9efee" stroke-width="0.3" stroke-linejoin="round"/>
<polygon points="1455.5,538.2 1467.5,531.2 1467.5,571.7 1455.5,578.7" fill="#a8b2b1" stroke="#a8b2b1" stroke-width="0.3" stroke-linejoin="round"/>
<polygon points="1443.8,531.6 1455.5,538.2 1467.5,531.2 1455.8,524.6" fill="#e9e204" stroke="#e9e204" stroke-width="0.3" stroke-linejoin="round"/>
<polygon points="1445.3,534.8 1453.9,539.7 1453.9,542.6 1445.3,537.7" fill="#e6e25e"/>
<ellipse cx="1454" cy="557.9" rx="0.8" ry="1.3" fill="#ece64a" />
<polygon points="1464.4,543.6 1458.7,556.9 1462.5,555 1460,566.4 1466.3,552 1462.1,553.9" fill="#0b6b63"/>
<polygon points="1349,499.6 1360.7,506.3 1360.7,546.8 1349,540.1" fill="#e9efee" stroke="#e9efee" stroke-width="0.3" stroke-linejoin="round"/>
<polygon points="1360.7,506.3 1372.7,499.3 1372.7,539.8 1360.7,546.8" fill="#a8b2b1" stroke="#a8b2b1" stroke-width="0.3" stroke-linejoin="round"/>
<polygon points="1349,499.6 1360.7,506.3 1372.7,499.3 1361,492.7" fill="#e9e204" stroke="#e9e204" stroke-width="0.3" stroke-linejoin="round"/>
<polygon points="1350.5,502.9 1359.1,507.8 1359.1,510.7 1350.5,505.8" fill="#e6e25e"/>
<ellipse cx="1359.2" cy="525.9" rx="0.8" ry="1.3" fill="#ece64a" />
<polygon points="1364.1,508.2 1375.8,514.9 1375.8,555.4 1364.1,548.7" fill="#e9efee" stroke="#e9efee" stroke-width="0.3" stroke-linejoin="round"/>
<polygon points="1375.8,514.9 1387.8,507.9 1387.8,548.4 1375.8,555.4" fill="#a8b2b1" stroke="#a8b2b1" stroke-width="0.3" stroke-linejoin="round"/>
<polygon points="1364.1,508.2 1375.8,514.9 1387.8,507.9 1376.1,501.3" fill="#e9e204" stroke="#e9e204" stroke-width="0.3" stroke-linejoin="round"/>
<polygon points="1365.6,511.5 1374.2,516.4 1374.2,519.3 1365.6,514.4" fill="#e6e25e"/>
<ellipse cx="1374.3" cy="534.5" rx="0.8" ry="1.3" fill="#ece64a" />
<polygon points="1379.3,516.8 1391,523.5 1391,564 1379.3,557.3" fill="#e9efee" stroke="#e9efee" stroke-width="0.3" stroke-linejoin="round"/>
<polygon points="1391,523.5 1403,516.5 1403,557 1391,564" fill="#a8b2b1" stroke="#a8b2b1" stroke-width="0.3" stroke-linejoin="round"/>
<polygon points="1379.3,516.8 1391,523.5 1403,516.5 1391.3,509.9" fill="#e9e204" stroke="#e9e204" stroke-width="0.3" stroke-linejoin="round"/>
<polygon points="1380.8,520.1 1389.4,525 1389.4,527.9 1380.8,523" fill="#e6e25e"/>
<ellipse cx="1389.5" cy="543.1" rx="0.8" ry="1.3" fill="#ece64a" />
<polygon points="1394.4,525.4 1406.1,532.1 1406.1,572.6 1394.4,565.9" fill="#e9efee" stroke="#e9efee" stroke-width="0.3" stroke-linejoin="round"/>
<polygon points="1406.1,532.1 1418.1,525.1 1418.1,565.6 1406.1,572.6" fill="#a8b2b1" stroke="#a8b2b1" stroke-width="0.3" stroke-linejoin="round"/>
<polygon points="1394.4,525.4 1406.1,532.1 1418.1,525.1 1406.4,518.5" fill="#e9e204" stroke="#e9e204" stroke-width="0.3" stroke-linejoin="round"/>
<polygon points="1395.9,528.7 1404.5,533.6 1404.5,536.5 1395.9,531.6" fill="#e6e25e"/>
<ellipse cx="1404.6" cy="551.7" rx="0.8" ry="1.3" fill="#ece64a" />
<polygon points="1409.6,534 1421.3,540.7 1421.3,581.2 1409.6,574.5" fill="#e9efee" stroke="#e9efee" stroke-width="0.3" stroke-linejoin="round"/>
<polygon points="1421.3,540.7 1433.3,533.7 1433.3,574.2 1421.3,581.2" fill="#a8b2b1" stroke="#a8b2b1" stroke-width="0.3" stroke-linejoin="round"/>
<polygon points="1409.6,534 1421.3,540.7 1433.3,533.7 1421.6,527.1" fill="#e9e204" stroke="#e9e204" stroke-width="0.3" stroke-linejoin="round"/>
<polygon points="1411.1,537.3 1419.7,542.2 1419.7,545.1 1411.1,540.2" fill="#e6e25e"/>
<ellipse cx="1419.8" cy="560.3" rx="0.8" ry="1.3" fill="#ece64a" />
<polygon points="1424.7,542.6 1436.4,549.3 1436.4,589.8 1424.7,583.1" fill="#e9efee" stroke="#e9efee" stroke-width="0.3" stroke-linejoin="round"/>
<polygon points="1436.4,549.3 1448.4,542.3 1448.4,582.8 1436.4,589.8" fill="#a8b2b1" stroke="#a8b2b1" stroke-width="0.3" stroke-linejoin="round"/>
<polygon points="1424.7,542.6 1436.4,549.3 1448.4,542.3 1436.7,535.7" fill="#e9e204" stroke="#e9e204" stroke-width="0.3" stroke-linejoin="round"/>
<polygon points="1426.2,545.9 1434.8,550.8 1434.8,553.7 1426.2,548.8" fill="#e6e25e"/>
<ellipse cx="1434.9" cy="568.9" rx="0.8" ry="1.3" fill="#ece64a" />
<polygon points="1445.3,554.7 1439.6,568 1443.4,566.1 1440.9,577.5 1447.2,563.1 1443,565" fill="#0b6b63"/>
<polygon points="1334.4,508.1 1346.1,514.8 1346.1,555.3 1334.4,548.6" fill="#e9efee" stroke="#e9efee" stroke-width="0.3" stroke-linejoin="round"/>
<polygon points="1346.1,514.8 1358.1,507.8 1358.1,548.3 1346.1,555.3" fill="#a8b2b1" stroke="#a8b2b1" stroke-width="0.3" stroke-linejoin="round"/>
<polygon points="1334.4,508.1 1346.1,514.8 1358.1,507.8 1346.4,501.2" fill="#e9e204" stroke="#e9e204" stroke-width="0.3" stroke-linejoin="round"/>
<polygon points="1335.9,511.4 1344.5,516.2 1344.5,519.1 1335.9,514.3" fill="#e6e25e"/>
<ellipse cx="1344.6" cy="534.4" rx="0.8" ry="1.3" fill="#ece64a" />
<polygon points="1349.5,516.7 1361.2,523.4 1361.2,563.9 1349.5,557.2" fill="#e9efee" stroke="#e9efee" stroke-width="0.3" stroke-linejoin="round"/>
<polygon points="1361.2,523.4 1373.2,516.4 1373.2,556.9 1361.2,563.9" fill="#a8b2b1" stroke="#a8b2b1" stroke-width="0.3" stroke-linejoin="round"/>
<polygon points="1349.5,516.7 1361.2,523.4 1373.2,516.4 1361.5,509.8" fill="#e9e204" stroke="#e9e204" stroke-width="0.3" stroke-linejoin="round"/>
<polygon points="1351,520 1359.6,524.8 1359.6,527.7 1351,522.9" fill="#e6e25e"/>
<ellipse cx="1359.7" cy="543" rx="0.8" ry="1.3" fill="#ece64a" />
<polygon points="1364.7,525.3 1376.4,532 1376.4,572.5 1364.7,565.8" fill="#e9efee" stroke="#e9efee" stroke-width="0.3" stroke-linejoin="round"/>
<polygon points="1376.4,532 1388.4,525 1388.4,565.5 1376.4,572.5" fill="#a8b2b1" stroke="#a8b2b1" stroke-width="0.3" stroke-linejoin="round"/>
<polygon points="1364.7,525.3 1376.4,532 1388.4,525 1376.7,518.4" fill="#e9e204" stroke="#e9e204" stroke-width="0.3" stroke-linejoin="round"/>
<polygon points="1366.2,528.6 1374.8,533.4 1374.8,536.3 1366.2,531.5" fill="#e6e25e"/>
<ellipse cx="1374.9" cy="551.6" rx="0.8" ry="1.3" fill="#ece64a" />
<polygon points="1379.8,533.9 1391.5,540.6 1391.5,581.1 1379.8,574.4" fill="#e9efee" stroke="#e9efee" stroke-width="0.3" stroke-linejoin="round"/>
<polygon points="1391.5,540.6 1403.5,533.6 1403.5,574.1 1391.5,581.1" fill="#a8b2b1" stroke="#a8b2b1" stroke-width="0.3" stroke-linejoin="round"/>
<polygon points="1379.8,533.9 1391.5,540.6 1403.5,533.6 1391.8,526.9" fill="#e9e204" stroke="#e9e204" stroke-width="0.3" stroke-linejoin="round"/>
<polygon points="1381.3,537.2 1389.9,542 1389.9,544.9 1381.3,540.1" fill="#e6e25e"/>
<ellipse cx="1390" cy="560.2" rx="0.8" ry="1.3" fill="#ece64a" />
<polygon points="1395,542.5 1406.7,549.2 1406.7,589.7 1395,583" fill="#e9efee" stroke="#e9efee" stroke-width="0.3" stroke-linejoin="round"/>
<polygon points="1406.7,549.2 1418.7,542.2 1418.7,582.7 1406.7,589.7" fill="#a8b2b1" stroke="#a8b2b1" stroke-width="0.3" stroke-linejoin="round"/>
<polygon points="1395,542.5 1406.7,549.2 1418.7,542.2 1407,535.5" fill="#e9e204" stroke="#e9e204" stroke-width="0.3" stroke-linejoin="round"/>
<polygon points="1396.5,545.8 1405.1,550.6 1405.1,553.5 1396.5,548.7" fill="#e6e25e"/>
<ellipse cx="1405.2" cy="568.8" rx="0.8" ry="1.3" fill="#ece64a" />
<polygon points="1410.1,551.1 1421.8,557.8 1421.8,598.3 1410.1,591.6" fill="#e9efee" stroke="#e9efee" stroke-width="0.3" stroke-linejoin="round"/>
<polygon points="1421.8,557.8 1433.8,550.8 1433.8,591.3 1421.8,598.3" fill="#a8b2b1" stroke="#a8b2b1" stroke-width="0.3" stroke-linejoin="round"/>
<polygon points="1410.1,551.1 1421.8,557.8 1433.8,550.8 1422.1,544.1" fill="#e9e204" stroke="#e9e204" stroke-width="0.3" stroke-linejoin="round"/>
<polygon points="1411.6,554.4 1420.2,559.2 1420.2,562.1 1411.6,557.3" fill="#e6e25e"/>
<ellipse cx="1420.3" cy="577.4" rx="0.8" ry="1.3" fill="#ece64a" />
<polygon points="1430.7,563.1 1425,576.4 1428.8,574.5 1426.3,585.9 1432.6,571.5 1428.4,573.4" fill="#0b6b63"/>
<polygon points="1297.7,529.4 1309.4,536 1309.4,576.5 1297.7,569.9" fill="#e9efee" stroke="#e9efee" stroke-width="0.3" stroke-linejoin="round"/>
<polygon points="1309.4,536 1321.4,529.1 1321.4,569.6 1309.4,576.5" fill="#a8b2b1" stroke="#a8b2b1" stroke-width="0.3" stroke-linejoin="round"/>
<polygon points="1297.7,529.4 1309.4,536 1321.4,529.1 1309.7,522.4" fill="#e9e204" stroke="#e9e204" stroke-width="0.3" stroke-linejoin="round"/>
<polygon points="1299.2,532.6 1307.8,537.5 1307.8,540.4 1299.2,535.5" fill="#e6e25e"/>
<ellipse cx="1307.9" cy="555.7" rx="0.8" ry="1.3" fill="#ece64a" />
<polygon points="1312.8,538 1324.5,544.6 1324.5,585.1 1312.8,578.5" fill="#e9efee" stroke="#e9efee" stroke-width="0.3" stroke-linejoin="round"/>
<polygon points="1324.5,544.6 1336.5,537.7 1336.5,578.2 1324.5,585.1" fill="#a8b2b1" stroke="#a8b2b1" stroke-width="0.3" stroke-linejoin="round"/>
<polygon points="1312.8,538 1324.5,544.6 1336.5,537.7 1324.8,531" fill="#e9e204" stroke="#e9e204" stroke-width="0.3" stroke-linejoin="round"/>
<polygon points="1314.3,541.2 1322.9,546.1 1322.9,549 1314.3,544.1" fill="#e6e25e"/>
<ellipse cx="1323" cy="564.3" rx="0.8" ry="1.3" fill="#ece64a" />
<polygon points="1328,546.6 1339.7,553.2 1339.7,593.7 1328,587.1" fill="#e9efee" stroke="#e9efee" stroke-width="0.3" stroke-linejoin="round"/>
<polygon points="1339.7,553.2 1351.7,546.3 1351.7,586.8 1339.7,593.7" fill="#a8b2b1" stroke="#a8b2b1" stroke-width="0.3" stroke-linejoin="round"/>
<polygon points="1328,546.6 1339.7,553.2 1351.7,546.3 1340,539.6" fill="#e9e204" stroke="#e9e204" stroke-width="0.3" stroke-linejoin="round"/>
<polygon points="1329.5,549.8 1338.1,554.7 1338.1,557.6 1329.5,552.7" fill="#e6e25e"/>
<ellipse cx="1338.2" cy="572.9" rx="0.8" ry="1.3" fill="#ece64a" />
<polygon points="1343.1,555.2 1354.8,561.8 1354.8,602.3 1343.1,595.7" fill="#e9efee" stroke="#e9efee" stroke-width="0.3" stroke-linejoin="round"/>
<polygon points="1354.8,561.8 1366.8,554.9 1366.8,595.4 1354.8,602.3" fill="#a8b2b1" stroke="#a8b2b1" stroke-width="0.3" stroke-linejoin="round"/>
<polygon points="1343.1,555.2 1354.8,561.8 1366.8,554.9 1355.1,548.2" fill="#e9e204" stroke="#e9e204" stroke-width="0.3" stroke-linejoin="round"/>
<polygon points="1344.6,558.4 1353.2,563.3 1353.2,566.2 1344.6,561.3" fill="#e6e25e"/>
<ellipse cx="1353.3" cy="581.5" rx="0.8" ry="1.3" fill="#ece64a" />
<polygon points="1358.3,563.8 1370,570.4 1370,610.9 1358.3,604.3" fill="#e9efee" stroke="#e9efee" stroke-width="0.3" stroke-linejoin="round"/>
<polygon points="1370,570.4 1382,563.5 1382,604 1370,610.9" fill="#a8b2b1" stroke="#a8b2b1" stroke-width="0.3" stroke-linejoin="round"/>
<polygon points="1358.3,563.8 1370,570.4 1382,563.5 1370.3,556.8" fill="#e9e204" stroke="#e9e204" stroke-width="0.3" stroke-linejoin="round"/>
<polygon points="1359.8,567 1368.4,571.9 1368.4,574.8 1359.8,569.9" fill="#e6e25e"/>
<ellipse cx="1368.5" cy="590.1" rx="0.8" ry="1.3" fill="#ece64a" />
<polygon points="1373.4,572.4 1385.1,579 1385.1,619.5 1373.4,612.9" fill="#e9efee" stroke="#e9efee" stroke-width="0.3" stroke-linejoin="round"/>
<polygon points="1385.1,579 1397.1,572.1 1397.1,612.6 1385.1,619.5" fill="#a8b2b1" stroke="#a8b2b1" stroke-width="0.3" stroke-linejoin="round"/>
<polygon points="1373.4,572.4 1385.1,579 1397.1,572.1 1385.4,565.4" fill="#e9e204" stroke="#e9e204" stroke-width="0.3" stroke-linejoin="round"/>
<polygon points="1374.9,575.6 1383.5,580.5 1383.5,583.4 1374.9,578.5" fill="#e6e25e"/>
<ellipse cx="1383.6" cy="598.7" rx="0.8" ry="1.3" fill="#ece64a" />
<polygon points="1394,584.4 1388.3,597.7 1392.1,595.8 1389.6,607.2 1395.9,592.8 1391.7,594.7" fill="#0b6b63"/>
<polygon points="1283.1,537.9 1294.8,544.5 1294.8,585 1283.1,578.4" fill="#e9efee" stroke="#e9efee" stroke-width="0.3" stroke-linejoin="round"/>
<polygon points="1294.8,544.5 1306.8,537.5 1306.8,578 1294.8,585" fill="#a8b2b1" stroke="#a8b2b1" stroke-width="0.3" stroke-linejoin="round"/>
<polygon points="1283.1,537.9 1294.8,544.5 1306.8,537.5 1295.1,530.9" fill="#e9e204" stroke="#e9e204" stroke-width="0.3" stroke-linejoin="round"/>
<polygon points="1284.6,541.1 1293.2,546 1293.2,548.9 1284.6,544" fill="#e6e25e"/>
<ellipse cx="1293.3" cy="564.2" rx="0.8" ry="1.3" fill="#ece64a" />
<polygon points="1298.2,546.5 1309.9,553.1 1309.9,593.6 1298.2,587" fill="#e9efee" stroke="#e9efee" stroke-width="0.3" stroke-linejoin="round"/>
<polygon points="1309.9,553.1 1321.9,546.1 1321.9,586.6 1309.9,593.6" fill="#a8b2b1" stroke="#a8b2b1" stroke-width="0.3" stroke-linejoin="round"/>
<polygon points="1298.2,546.5 1309.9,553.1 1321.9,546.1 1310.2,539.5" fill="#e9e204" stroke="#e9e204" stroke-width="0.3" stroke-linejoin="round"/>
<polygon points="1299.7,549.7 1308.3,554.6 1308.3,557.5 1299.7,552.6" fill="#e6e25e"/>
<ellipse cx="1308.4" cy="572.8" rx="0.8" ry="1.3" fill="#ece64a" />
<polygon points="1313.4,555.1 1325.1,561.7 1325.1,602.2 1313.4,595.6" fill="#e9efee" stroke="#e9efee" stroke-width="0.3" stroke-linejoin="round"/>
<polygon points="1325.1,561.7 1337.1,554.7 1337.1,595.2 1325.1,602.2" fill="#a8b2b1" stroke="#a8b2b1" stroke-width="0.3" stroke-linejoin="round"/>
<polygon points="1313.4,555.1 1325.1,561.7 1337.1,554.7 1325.4,548.1" fill="#e9e204" stroke="#e9e204" stroke-width="0.3" stroke-linejoin="round"/>
<polygon points="1314.9,558.3 1323.5,563.2 1323.5,566.1 1314.9,561.2" fill="#e6e25e"/>
<ellipse cx="1323.6" cy="581.4" rx="0.8" ry="1.3" fill="#ece64a" />
<polygon points="1328.5,563.7 1340.2,570.3 1340.2,610.8 1328.5,604.2" fill="#e9efee" stroke="#e9efee" stroke-width="0.3" stroke-linejoin="round"/>
<polygon points="1340.2,570.3 1352.2,563.3 1352.2,603.8 1340.2,610.8" fill="#a8b2b1" stroke="#a8b2b1" stroke-width="0.3" stroke-linejoin="round"/>
<polygon points="1328.5,563.7 1340.2,570.3 1352.2,563.3 1340.5,556.7" fill="#e9e204" stroke="#e9e204" stroke-width="0.3" stroke-linejoin="round"/>
<polygon points="1330,566.9 1338.6,571.8 1338.6,574.7 1330,569.8" fill="#e6e25e"/>
<ellipse cx="1338.7" cy="590" rx="0.8" ry="1.3" fill="#ece64a" />
<polygon points="1343.7,572.3 1355.4,578.9 1355.4,619.4 1343.7,612.8" fill="#e9efee" stroke="#e9efee" stroke-width="0.3" stroke-linejoin="round"/>
<polygon points="1355.4,578.9 1367.4,571.9 1367.4,612.4 1355.4,619.4" fill="#a8b2b1" stroke="#a8b2b1" stroke-width="0.3" stroke-linejoin="round"/>
<polygon points="1343.7,572.3 1355.4,578.9 1367.4,571.9 1355.7,565.3" fill="#e9e204" stroke="#e9e204" stroke-width="0.3" stroke-linejoin="round"/>
<polygon points="1345.2,575.5 1353.8,580.4 1353.8,583.3 1345.2,578.4" fill="#e6e25e"/>
<ellipse cx="1353.9" cy="598.6" rx="0.8" ry="1.3" fill="#ece64a" />
<polygon points="1358.8,580.9 1370.5,587.5 1370.5,628 1358.8,621.4" fill="#e9efee" stroke="#e9efee" stroke-width="0.3" stroke-linejoin="round"/>
<polygon points="1370.5,587.5 1382.5,580.5 1382.5,621 1370.5,628" fill="#a8b2b1" stroke="#a8b2b1" stroke-width="0.3" stroke-linejoin="round"/>
<polygon points="1358.8,580.9 1370.5,587.5 1382.5,580.5 1370.8,573.9" fill="#e9e204" stroke="#e9e204" stroke-width="0.3" stroke-linejoin="round"/>
<polygon points="1360.3,584.1 1368.9,589 1368.9,591.9 1360.3,587" fill="#e6e25e"/>
<ellipse cx="1369" cy="607.2" rx="0.8" ry="1.3" fill="#ece64a" />
<polygon points="1379.4,592.9 1373.7,606.2 1377.5,604.3 1375,615.7 1381.3,601.3 1377.1,603.2" fill="#0b6b63"/>
<polygon points="1263.5,549.3 1275.2,555.9 1275.2,596.4 1263.5,589.8" fill="#e9efee" stroke="#e9efee" stroke-width="0.3" stroke-linejoin="round"/>
<polygon points="1275.2,555.9 1287.2,548.9 1287.2,589.4 1275.2,596.4" fill="#a8b2b1" stroke="#a8b2b1" stroke-width="0.3" stroke-linejoin="round"/>
<polygon points="1263.5,549.3 1275.2,555.9 1287.2,548.9 1275.5,542.3" fill="#e9e204" stroke="#e9e204" stroke-width="0.3" stroke-linejoin="round"/>
<polygon points="1265,552.5 1273.6,557.4 1273.6,560.3 1265,555.4" fill="#e6e25e"/>
<ellipse cx="1273.7" cy="575.5" rx="0.8" ry="1.3" fill="#ece64a" />
<polygon points="1278.6,557.9 1290.3,564.5 1290.3,605 1278.6,598.4" fill="#e9efee" stroke="#e9efee" stroke-width="0.3" stroke-linejoin="round"/>
<polygon points="1290.3,564.5 1302.3,557.5 1302.3,598 1290.3,605" fill="#a8b2b1" stroke="#a8b2b1" stroke-width="0.3" stroke-linejoin="round"/>
<polygon points="1278.6,557.9 1290.3,564.5 1302.3,557.5 1290.6,550.9" fill="#e9e204" stroke="#e9e204" stroke-width="0.3" stroke-linejoin="round"/>
<polygon points="1280.1,561.1 1288.7,566 1288.7,568.9 1280.1,564" fill="#e6e25e"/>
<ellipse cx="1288.8" cy="584.1" rx="0.8" ry="1.3" fill="#ece64a" />
<polygon points="1293.7,566.5 1305.4,573.1 1305.4,613.6 1293.7,607" fill="#e9efee" stroke="#e9efee" stroke-width="0.3" stroke-linejoin="round"/>
<polygon points="1305.4,573.1 1317.4,566.1 1317.4,606.6 1305.4,613.6" fill="#a8b2b1" stroke="#a8b2b1" stroke-width="0.3" stroke-linejoin="round"/>
<polygon points="1293.7,566.5 1305.4,573.1 1317.4,566.1 1305.7,559.5" fill="#e9e204" stroke="#e9e204" stroke-width="0.3" stroke-linejoin="round"/>
<polygon points="1295.2,569.7 1303.8,574.6 1303.8,577.5 1295.2,572.6" fill="#e6e25e"/>
<ellipse cx="1303.9" cy="592.7" rx="0.8" ry="1.3" fill="#ece64a" />
<polygon points="1308.9,575.1 1320.6,581.7 1320.6,622.2 1308.9,615.6" fill="#e9efee" stroke="#e9efee" stroke-width="0.3" stroke-linejoin="round"/>
<polygon points="1320.6,581.7 1332.6,574.7 1332.6,615.2 1320.6,622.2" fill="#a8b2b1" stroke="#a8b2b1" stroke-width="0.3" stroke-linejoin="round"/>
<polygon points="1308.9,575.1 1320.6,581.7 1332.6,574.7 1320.9,568.1" fill="#e9e204" stroke="#e9e204" stroke-width="0.3" stroke-linejoin="round"/>
<polygon points="1310.4,578.3 1319,583.2 1319,586.1 1310.4,581.2" fill="#e6e25e"/>
<ellipse cx="1319.1" cy="601.3" rx="0.8" ry="1.3" fill="#ece64a" />
<polygon points="1324,583.7 1335.7,590.3 1335.7,630.8 1324,624.2" fill="#e9efee" stroke="#e9efee" stroke-width="0.3" stroke-linejoin="round"/>
<polygon points="1335.7,590.3 1347.7,583.3 1347.7,623.8 1335.7,630.8" fill="#a8b2b1" stroke="#a8b2b1" stroke-width="0.3" stroke-linejoin="round"/>
<polygon points="1324,583.7 1335.7,590.3 1347.7,583.3 1336,576.7" fill="#e9e204" stroke="#e9e204" stroke-width="0.3" stroke-linejoin="round"/>
<polygon points="1325.5,586.9 1334.1,591.8 1334.1,594.7 1325.5,589.8" fill="#e6e25e"/>
<ellipse cx="1334.2" cy="609.9" rx="0.8" ry="1.3" fill="#ece64a" />
<polygon points="1339.2,592.3 1350.9,598.9 1350.9,639.4 1339.2,632.8" fill="#e9efee" stroke="#e9efee" stroke-width="0.3" stroke-linejoin="round"/>
<polygon points="1350.9,598.9 1362.9,591.9 1362.9,632.4 1350.9,639.4" fill="#a8b2b1" stroke="#a8b2b1" stroke-width="0.3" stroke-linejoin="round"/>
<polygon points="1339.2,592.3 1350.9,598.9 1362.9,591.9 1351.2,585.3" fill="#e9e204" stroke="#e9e204" stroke-width="0.3" stroke-linejoin="round"/>
<polygon points="1340.7,595.5 1349.3,600.4 1349.3,603.3 1340.7,598.4" fill="#e6e25e"/>
<ellipse cx="1349.4" cy="618.5" rx="0.8" ry="1.3" fill="#ece64a" />
<polygon points="1359.7,604.3 1354,617.6 1357.8,615.7 1355.3,627.1 1361.6,612.7 1357.4,614.6" fill="#0b6b63"/>
<polygon points="1248.9,557.7 1260.6,564.3 1260.6,604.8 1248.9,598.2" fill="#e9efee" stroke="#e9efee" stroke-width="0.3" stroke-linejoin="round"/>
<polygon points="1260.6,564.3 1272.6,557.4 1272.6,597.9 1260.6,604.8" fill="#a8b2b1" stroke="#a8b2b1" stroke-width="0.3" stroke-linejoin="round"/>
<polygon points="1248.9,557.7 1260.6,564.3 1272.6,557.4 1260.9,550.7" fill="#e9e204" stroke="#e9e204" stroke-width="0.3" stroke-linejoin="round"/>
<polygon points="1250.4,561 1259,565.8 1259,568.7 1250.4,563.9" fill="#e6e25e"/>
<ellipse cx="1259.1" cy="584" rx="0.8" ry="1.3" fill="#ece64a" />
<polygon points="1264,566.3 1275.7,572.9 1275.7,613.4 1264,606.8" fill="#e9efee" stroke="#e9efee" stroke-width="0.3" stroke-linejoin="round"/>
<polygon points="1275.7,572.9 1287.7,566 1287.7,606.5 1275.7,613.4" fill="#a8b2b1" stroke="#a8b2b1" stroke-width="0.3" stroke-linejoin="round"/>
<polygon points="1264,566.3 1275.7,572.9 1287.7,566 1276,559.3" fill="#e9e204" stroke="#e9e204" stroke-width="0.3" stroke-linejoin="round"/>
<polygon points="1265.5,569.6 1274.1,574.4 1274.1,577.3 1265.5,572.5" fill="#e6e25e"/>
<ellipse cx="1274.2" cy="592.6" rx="0.8" ry="1.3" fill="#ece64a" />
<polygon points="1279.2,574.9 1290.9,581.5 1290.9,622 1279.2,615.4" fill="#e9efee" stroke="#e9efee" stroke-width="0.3" stroke-linejoin="round"/>
<polygon points="1290.9,581.5 1302.9,574.6 1302.9,615.1 1290.9,622" fill="#a8b2b1" stroke="#a8b2b1" stroke-width="0.3" stroke-linejoin="round"/>
<polygon points="1279.2,574.9 1290.9,581.5 1302.9,574.6 1291.2,567.9" fill="#e9e204" stroke="#e9e204" stroke-width="0.3" stroke-linejoin="round"/>
<polygon points="1280.7,578.2 1289.3,583 1289.3,585.9 1280.7,581.1" fill="#e6e25e"/>
<ellipse cx="1289.4" cy="601.2" rx="0.8" ry="1.3" fill="#ece64a" />
<polygon points="1294.3,583.5 1306,590.1 1306,630.6 1294.3,624" fill="#e9efee" stroke="#e9efee" stroke-width="0.3" stroke-linejoin="round"/>
<polygon points="1306,590.1 1318,583.2 1318,623.7 1306,630.6" fill="#a8b2b1" stroke="#a8b2b1" stroke-width="0.3" stroke-linejoin="round"/>
<polygon points="1294.3,583.5 1306,590.1 1318,583.2 1306.3,576.5" fill="#e9e204" stroke="#e9e204" stroke-width="0.3" stroke-linejoin="round"/>
<polygon points="1295.8,586.8 1304.4,591.6 1304.4,594.5 1295.8,589.7" fill="#e6e25e"/>
<ellipse cx="1304.5" cy="609.8" rx="0.8" ry="1.3" fill="#ece64a" />
<polygon points="1309.5,592.1 1321.2,598.7 1321.2,639.2 1309.5,632.6" fill="#e9efee" stroke="#e9efee" stroke-width="0.3" stroke-linejoin="round"/>
<polygon points="1321.2,598.7 1333.2,591.8 1333.2,632.3 1321.2,639.2" fill="#a8b2b1" stroke="#a8b2b1" stroke-width="0.3" stroke-linejoin="round"/>
<polygon points="1309.5,592.1 1321.2,598.7 1333.2,591.8 1321.5,585.1" fill="#e9e204" stroke="#e9e204" stroke-width="0.3" stroke-linejoin="round"/>
<polygon points="1311,595.4 1319.6,600.2 1319.6,603.1 1311,598.3" fill="#e6e25e"/>
<ellipse cx="1319.7" cy="618.4" rx="0.8" ry="1.3" fill="#ece64a" />
<polygon points="1324.6,600.7 1336.3,607.3 1336.3,647.8 1324.6,641.2" fill="#e9efee" stroke="#e9efee" stroke-width="0.3" stroke-linejoin="round"/>
<polygon points="1336.3,607.3 1348.3,600.4 1348.3,640.9 1336.3,647.8" fill="#a8b2b1" stroke="#a8b2b1" stroke-width="0.3" stroke-linejoin="round"/>
<polygon points="1324.6,600.7 1336.3,607.3 1348.3,600.4 1336.6,593.7" fill="#e9e204" stroke="#e9e204" stroke-width="0.3" stroke-linejoin="round"/>
<polygon points="1326.1,604 1334.7,608.8 1334.7,611.7 1326.1,606.9" fill="#e6e25e"/>
<ellipse cx="1334.8" cy="627" rx="0.8" ry="1.3" fill="#ece64a" />
<polygon points="1345.2,612.7 1339.5,626 1343.3,624.1 1340.8,635.5 1347.1,621.1 1342.9,623" fill="#0b6b63"/>
<polygon points="1435.1,644.3 1462.1,660.4 1475.3,662.9 1447.7,646.9" fill="#26282a"/>
<polygon points="1447.7,678.9 1462.1,660.4 1475.3,662.9 1475.3,685.7 1447.7,700.9" fill="#2e3032" stroke="#2e3032" stroke-width="0.5" stroke-linejoin="round"/>
<polygon points="1435.1,644.3 1462.1,660.4 1447.7,678.9 1420.7,662.9" fill="#020202" stroke="#020202" stroke-width="0.8" stroke-linejoin="round"/>
<polygon points="1420.7,662.9 1447.7,678.9 1447.7,700.9 1420.7,685.7" fill="#1d1f20"/>
<polygon points="1435.1,644.3 1462.1,660.4 1447.7,678.9 1420.7,662.9" fill="#020202" stroke="#020202" stroke-width="0.8" stroke-linejoin="round"/>
<polygon points="1454,682 1459.6,678.8 1459.6,693.3 1454,696.5" fill="#dff6f4"/>
<polygon points="1454.7,682.4 1458.9,680 1458.9,693.6 1454.7,696" fill="#cfefed"/>
<polygon points="1465.1,675.9 1471.9,672 1471.9,680.2 1465.1,684.1" fill="#3a3a20"/>
<polygon points="1465.6,676.1 1468.3,674.5 1468.3,678 1465.6,679.5" fill="#e9e204"/>
<polygon points="1465.6,680 1468.3,678.4 1468.3,681.8 1465.6,683.4" fill="#e9e204"/>
<polygon points="1468.8,674.3 1471.5,672.7 1471.5,676.1 1468.8,677.7" fill="#e9e204"/>
<polygon points="1468.8,678.1 1471.5,676.6 1471.5,680 1468.8,681.6" fill="#e9e204"/>
<polygon points="1403.9,662 1430.9,678.1 1444.1,680.6 1416.5,664.6" fill="#26282a"/>
<polygon points="1416.5,696.6 1430.9,678.1 1444.1,680.6 1444.1,703.4 1416.5,718.6" fill="#2e3032" stroke="#2e3032" stroke-width="0.5" stroke-linejoin="round"/>
<polygon points="1403.9,662 1430.9,678.1 1416.5,696.6 1389.5,680.6" fill="#020202" stroke="#020202" stroke-width="0.8" stroke-linejoin="round"/>
<polygon points="1389.5,680.6 1416.5,696.6 1416.5,718.6 1389.5,703.4" fill="#1d1f20"/>
<polygon points="1403.9,662 1430.9,678.1 1416.5,696.6 1389.5,680.6" fill="#020202" stroke="#020202" stroke-width="0.8" stroke-linejoin="round"/>
<polygon points="1422.8,699.7 1428.4,696.5 1428.4,711 1422.8,714.2" fill="#dff6f4"/>
<polygon points="1423.5,700.1 1427.7,697.7 1427.7,711.3 1423.5,713.7" fill="#cfefed"/>
<polygon points="1433.9,693.6 1440.7,689.7 1440.7,697.9 1433.9,701.8" fill="#3a3a20"/>
<polygon points="1434.4,693.8 1437.1,692.2 1437.1,695.7 1434.4,697.2" fill="#e9e204"/>
<polygon points="1434.4,697.7 1437.1,696.1 1437.1,699.5 1434.4,701.1" fill="#e9e204"/>
<polygon points="1437.6,692 1440.3,690.4 1440.3,693.8 1437.6,695.4" fill="#e9e204"/>
<polygon points="1437.6,695.8 1440.3,694.3 1440.3,697.7 1437.6,699.3" fill="#e9e204"/>
<polygon points="1372.7,679.7 1399.7,695.8 1412.9,698.3 1385.3,682.3" fill="#26282a"/>
<polygon points="1385.3,714.3 1399.7,695.8 1412.9,698.3 1412.9,721.1 1385.3,736.3" fill="#2e3032" stroke="#2e3032" stroke-width="0.5" stroke-linejoin="round"/>
<polygon points="1372.7,679.7 1399.7,695.8 1385.3,714.3 1358.3,698.3" fill="#020202" stroke="#020202" stroke-width="0.8" stroke-linejoin="round"/>
<polygon points="1358.3,698.3 1385.3,714.3 1385.3,736.3 1358.3,721.1" fill="#1d1f20"/>
<polygon points="1372.7,679.7 1399.7,695.8 1385.3,714.3 1358.3,698.3" fill="#020202" stroke="#020202" stroke-width="0.8" stroke-linejoin="round"/>
<polygon points="1391.6,717.4 1397.2,714.2 1397.2,728.7 1391.6,731.9" fill="#dff6f4"/>
<polygon points="1392.3,717.8 1396.5,715.4 1396.5,729 1392.3,731.4" fill="#cfefed"/>
<polygon points="1402.7,711.3 1409.5,707.4 1409.5,715.6 1402.7,719.5" fill="#3a3a20"/>
<polygon points="1403.2,711.5 1405.9,709.9 1405.9,713.4 1403.2,714.9" fill="#e9e204"/>
<polygon points="1403.2,715.4 1405.9,713.8 1405.9,717.2 1403.2,718.8" fill="#e9e204"/>
<polygon points="1406.4,709.7 1409.1,708.1 1409.1,711.5 1406.4,713.1" fill="#e9e204"/>
<polygon points="1406.4,713.5 1409.1,712 1409.1,715.4 1406.4,717" fill="#e9e204"/>
<polygon points="1311.9,701.2 1325,697.7 1349,684.7 1336.4,687.7" fill="#0a4a45"/>
<polygon points="1337.5,715.6 1363,702.1 1363,737.5 1337.5,751.9" fill="#0c6d65" stroke="#0c6d65" stroke-width="0.5" stroke-linejoin="round"/>
<polygon points="1311.9,701.2 1325,697.7 1337.5,715.6 1337.5,751.9 1311.9,737.5" fill="#13877d" stroke="#13877d" stroke-width="0.5" stroke-linejoin="round"/>
<polygon points="1325,697.7 1349,684.7 1363,702.1 1337.5,715.6" fill="#03302e" stroke="#03302e" stroke-width="0.8" stroke-linejoin="round"/>
<polygon points="1315.8,710.5 1322,714.1 1322,722.7 1315.8,719.1" fill="#0f6f67"/>
<polygon points="1316.2,711.2 1318.6,712.6 1318.6,716.2 1316.2,714.8" fill="#d8f3f0"/>
<polygon points="1316.2,715.3 1318.6,716.7 1318.6,720.3 1316.2,718.9" fill="#d8f3f0"/>
<polygon points="1319.1,712.9 1321.5,714.3 1321.5,717.9 1319.1,716.5" fill="#d8f3f0"/>
<polygon points="1319.1,716.9 1321.5,718.3 1321.5,722 1319.1,720.6" fill="#d8f3f0"/>
<polygon points="1325.4,715.9 1331.6,719.5 1331.6,728.1 1325.4,724.5" fill="#0f6f67"/>
<polygon points="1325.8,716.6 1328.3,718 1328.3,721.6 1325.8,720.2" fill="#f4ef4a"/>
<polygon points="1325.8,720.7 1328.3,722.1 1328.3,725.7 1325.8,724.3" fill="#f4ef4a"/>
<polygon points="1328.7,718.3 1331.1,719.7 1331.1,723.3 1328.7,721.9" fill="#f4ef4a"/>
<polygon points="1328.7,722.4 1331.1,723.7 1331.1,727.4 1328.7,726" fill="#f4ef4a"/>
<polygon points="1315.8,724.9 1322,728.4 1322,737 1315.8,733.5" fill="#0f6f67"/>
<polygon points="1316.2,725.6 1318.6,727 1318.6,730.6 1316.2,729.2" fill="#f4ef4a"/>
<polygon points="1316.2,729.6 1318.6,731 1318.6,734.7 1316.2,733.3" fill="#f4ef4a"/>
<polygon points="1319.1,727.2 1321.5,728.6 1321.5,732.2 1319.1,730.8" fill="#f4ef4a"/>
<polygon points="1319.1,731.3 1321.5,732.7 1321.5,736.3 1319.1,734.9" fill="#f4ef4a"/>
<polygon points="1325.7,730.8 1331.3,734 1331.3,748.8 1325.7,745.6" fill="#e6f8f6"/>
<polygon points="1326.4,731.7 1330.6,734.1 1330.6,747.7 1326.4,745.3" fill="#cdeeed"/>
<polygon points="1342.3,718.6 1355.4,715.1 1379.4,702.1 1366.7,705.1" fill="#0a4a45"/>
<polygon points="1367.9,733 1393.4,719.5 1393.4,754.9 1367.9,769.2" fill="#0c6d65" stroke="#0c6d65" stroke-width="0.5" stroke-linejoin="round"/>
<polygon points="1342.3,718.6 1355.4,715.1 1367.9,733 1367.9,769.2 1342.3,754.9" fill="#13877d" stroke="#13877d" stroke-width="0.5" stroke-linejoin="round"/>
<polygon points="1355.4,715.1 1379.4,702.1 1393.4,719.5 1367.9,733" fill="#03302e" stroke="#03302e" stroke-width="0.8" stroke-linejoin="round"/>
<polygon points="1346.1,727.9 1352.3,731.5 1352.3,740.1 1346.1,736.5" fill="#0f6f67"/>
<polygon points="1346.6,728.6 1349,730 1349,733.6 1346.6,732.2" fill="#f4ef4a"/>
<polygon points="1346.6,732.7 1349,734.1 1349,737.7 1346.6,736.3" fill="#f4ef4a"/>
<polygon points="1349.5,730.3 1351.9,731.7 1351.9,735.3 1349.5,733.9" fill="#f4ef4a"/>
<polygon points="1349.5,734.3 1351.9,735.7 1351.9,739.4 1349.5,738" fill="#f4ef4a"/>
<polygon points="1355.8,733.3 1362,736.9 1362,745.5 1355.8,741.9" fill="#0f6f67"/>
<polygon points="1356.2,734 1358.6,735.4 1358.6,739 1356.2,737.6" fill="#f4ef4a"/>
<polygon points="1356.2,738.1 1358.6,739.5 1358.6,743.1 1356.2,741.7" fill="#f4ef4a"/>
<polygon points="1359.1,735.7 1361.5,737.1 1361.5,740.7 1359.1,739.3" fill="#f4ef4a"/>
<polygon points="1359.1,739.7 1361.5,741.1 1361.5,744.8 1359.1,743.4" fill="#f4ef4a"/>
<polygon points="1346.1,742.2 1352.3,745.8 1352.3,754.4 1346.1,750.8" fill="#0f6f67"/>
<polygon points="1346.6,742.9 1349,744.3 1349,748 1346.6,746.6" fill="#d8f3f0"/>
<polygon points="1346.6,747 1349,748.4 1349,752 1346.6,750.6" fill="#d8f3f0"/>
<polygon points="1349.5,744.6 1351.9,746 1351.9,749.6 1349.5,748.2" fill="#d8f3f0"/>
<polygon points="1349.5,748.7 1351.9,750.1 1351.9,753.7 1349.5,752.3" fill="#d8f3f0"/>
<polygon points="1356.1,748.1 1361.7,751.4 1361.7,766.2 1356.1,762.9" fill="#e6f8f6"/>
<polygon points="1356.8,749 1361,751.5 1361,765.1 1356.8,762.6" fill="#cdeeed"/>
<polygon points="1374,736.3 1380.2,732.8 1380.2,741.2 1374,744.7" fill="#0a5e57"/>
<polygon points="1374.4,736.5 1376.9,735.1 1376.9,738.6 1374.4,740" fill="#d8f3f0"/>
<polygon points="1374.4,740.5 1376.9,739.1 1376.9,742.6 1374.4,744" fill="#d8f3f0"/>
<polygon points="1377.3,734.9 1379.7,733.5 1379.7,737 1377.3,738.4" fill="#d8f3f0"/>
<polygon points="1377.3,738.8 1379.7,737.4 1379.7,741 1377.3,742.4" fill="#d8f3f0"/>
<polygon points="1383.4,730.9 1389.6,727.4 1389.6,735.8 1383.4,739.3" fill="#0a5e57"/>
<polygon points="1383.9,731.1 1386.3,729.7 1386.3,733.2 1383.9,734.6" fill="#d8f3f0"/>
<polygon points="1383.9,735.1 1386.3,733.7 1386.3,737.2 1383.9,738.6" fill="#d8f3f0"/>
<polygon points="1386.8,729.5 1389.2,728.1 1389.2,731.6 1386.8,733" fill="#d8f3f0"/>
<polygon points="1386.8,733.4 1389.2,732 1389.2,735.6 1386.8,737" fill="#d8f3f0"/>
<polygon points="1374,750.7 1380.2,747.1 1380.2,755.5 1374,759.1" fill="#0a5e57"/>
<polygon points="1374.4,750.9 1376.9,749.5 1376.9,753 1374.4,754.4" fill="#d8f3f0"/>
<polygon points="1374.4,754.8 1376.9,753.4 1376.9,757 1374.4,758.4" fill="#d8f3f0"/>
<polygon points="1377.3,749.2 1379.7,747.8 1379.7,751.3 1377.3,752.7" fill="#d8f3f0"/>
<polygon points="1377.3,753.2 1379.7,751.8 1379.7,755.3 1377.3,756.7" fill="#d8f3f0"/>
<polygon points="1383.4,745.1 1389.6,741.5 1389.6,749.9 1383.4,753.5" fill="#0a5e57"/>
<polygon points="1383.9,745.3 1386.3,743.9 1386.3,747.4 1383.9,748.8" fill="#f4ef4a"/>
<polygon points="1383.9,749.3 1386.3,747.9 1386.3,751.4 1383.9,752.8" fill="#f4ef4a"/>
<polygon points="1386.8,743.6 1389.2,742.2 1389.2,745.8 1386.8,747.2" fill="#f4ef4a"/>
<polygon points="1386.8,747.6 1389.2,746.2 1389.2,749.7 1386.8,751.1" fill="#f4ef4a"/>
<line x1="894.7" y1="582.9" x2="894.7" y2="601.1" stroke="#5d6465" stroke-width="1.5" />
<polygon points="875.3,610.4 877.3,607.3 886.4,608.5 897.5,614.8 907.8,616.4 914.9,621.5 915.8,626.7 912.5,631 905.4,631.6 895.9,627.1 878.9,618.8 875.5,614.8" fill="#d23a22" stroke="#d23a22" stroke-width="0.6" stroke-linejoin="round"/>
<polygon points="877.3,607.3 884,605.9 893.5,609.7 907.8,616 914.9,621.5 910.9,625.1 901.4,621.1 895.9,619.5 881.3,611.6" fill="#e24b31"/>
<polygon points="881.3,611 887.2,610.2 896.1,616.5 896.1,619.7 881.8,612.6" fill="#d6f2ef"/>
<polygon points="898.3,615 903.4,612.6 908.6,616 900.3,619.7" fill="#d6f2ef"/>
<polygon points="879,607 883.9,606.1 884,607.4 879.8,608.5" fill="#d6f2ef"/>
<line x1="896.1" y1="616.4" x2="896.1" y2="619.9" stroke="#d23a22" stroke-width="0.5" />
<ellipse cx="880.5" cy="616.4" rx="2.3" ry="2.9" fill="#1d2123" />
<ellipse cx="900.3" cy="627.5" rx="2.4" ry="3" fill="#1d2123" />
<ellipse cx="906.6" cy="627.6" rx="2.3" ry="1.2" fill="#f7f9f3" />
<ellipse cx="911.9" cy="628.4" rx="1" ry="0.6" fill="#e9d21a" />
<path d="M900.7,628.1 q1.5,7 7,7 q5,-0.5 7.5,-6.5" fill="none" stroke="#3d464b" stroke-width="0.9"/>
<polygon points="913,638.5 916.5,640.6 923,636.7 923,635.8 916.5,639.3 913,637.5" fill="#c3cbca"/>
<path d="M914.3,638.2 L916.5,639.5 L921.8,636.4 L921.8,624.5 Q921.8,622.8 920.1,621.6 Q919.3,621.1 918.5,621.9 L914.7,624.9 Q914.3,625 914.3,626.5 Z" fill="#f7faf9" stroke="#b4bebd" stroke-width="0.45"/>
<path d="M916.5,639.5 L921.8,636.4 L921.8,624.8 Q921.8,623.4 921,623.5 L916.5,626.7 Z" fill="#c9d1d0"/>
<path d="M914.3,638.2 L916.5,639.5 L916.5,626.7 L915,624.9 Q914.3,625.1 914.3,626.5 Z" fill="#fbfdfc"/>
<path d="M914.8,625 L916.5,626.7 L921.2,623.5 Q921.6,622.7 920.2,621.9 Q919.5,621.3 918.8,622 Z" fill="#f5f8f7"/>
<polygon points="917.2,628.2 921,626.1 921,628.1 917.2,630.3" fill="#1b8f85"/>
<polygon points="919.5,630.6 918.3,632.9 919,632.9 918.6,634.7 920,632.2 919.2,632.3" fill="#2aa79c"/>
<polygon points="858.3,621.3 860.3,618.1 869.4,619.3 880.5,625.6 890.8,627.2 897.9,632.4 898.8,637.5 895.5,641.9 888.4,642.4 878.9,637.9 861.9,629.6 858.5,625.6" fill="#0b6f67" stroke="#0b6f67" stroke-width="0.6" stroke-linejoin="round"/>
<polygon points="860.3,618.1 867,616.8 876.5,620.5 890.8,626.8 897.9,632.4 893.9,635.9 884.4,632 878.9,630.4 864.3,622.5" fill="#14897f"/>
<polygon points="864.3,621.8 870.2,621 879.1,627.4 879.1,630.5 864.8,623.4" fill="#d6f2ef"/>
<polygon points="881.3,625.8 886.4,623.4 891.6,626.8 883.3,630.5" fill="#d6f2ef"/>
<polygon points="862,617.9 866.9,616.9 867,618.2 862.8,619.3" fill="#d6f2ef"/>
<line x1="879.1" y1="627.2" x2="879.1" y2="630.7" stroke="#0b6f67" stroke-width="0.5" />
<ellipse cx="863.5" cy="627.2" rx="2.3" ry="2.9" fill="#1d2123" />
<ellipse cx="883.3" cy="638.3" rx="2.4" ry="3" fill="#1d2123" />
<ellipse cx="889.6" cy="638.4" rx="2.3" ry="1.2" fill="#f7f9f3" />
<ellipse cx="894.9" cy="639.2" rx="1" ry="0.6" fill="#e9d21a" />
<path d="M883.6,638.9 q1.5,7.5 7,7.5 q5,-0.5 7.5,-7" fill="none" stroke="#3d464b" stroke-width="0.9"/>
<polygon points="896.1,648.5 899.6,650.7 906.2,646.7 906.2,645.8 899.6,649.3 896.1,647.6" fill="#c3cbca"/>
<path d="M897.4,648.3 L899.6,649.5 L904.9,646.5 L904.9,634.6 Q904.9,632.9 903.2,631.7 Q902.4,631.2 901.7,631.9 L897.8,634.9 Q897.4,635.1 897.4,636.5 Z" fill="#f7faf9" stroke="#b4bebd" stroke-width="0.45"/>
<path d="M899.6,649.5 L904.9,646.5 L904.9,634.8 Q904.9,633.5 904.1,633.6 L899.6,636.8 Z" fill="#c9d1d0"/>
<path d="M897.4,648.3 L899.6,649.5 L899.6,636.8 L898.1,635 Q897.4,635.2 897.4,636.5 Z" fill="#fbfdfc"/>
<path d="M897.9,635.1 L899.6,636.8 L904.4,633.6 Q904.7,632.7 903.4,631.9 Q902.7,631.4 901.9,632 Z" fill="#f5f8f7"/>
<polygon points="900.4,638.3 904.1,636.1 904.1,638.2 900.4,640.3" fill="#1b8f85"/>
<polygon points="902.7,640.6 901.4,643 902.2,642.9 901.8,644.8 903.1,642.2 902.3,642.3" fill="#2aa79c"/>
<line x1="852.6" y1="607" x2="852.6" y2="629.6" stroke="#596061" stroke-width="1.6" />
<line x1="880.3" y1="623.4" x2="880.3" y2="646.2" stroke="#596061" stroke-width="1.6" />
<line x1="922" y1="599.1" x2="922" y2="621.7" stroke="#596061" stroke-width="1.6" />
<polygon points="852,606.6 880.1,623.3 922.4,598.7 922.4,600 880.1,624.6 852,607.9" fill="#6f7877"/>
<polygon points="852,606.6 894.7,582.1 922.4,598.7 880.1,623.3" fill="#0f6d66" stroke="#e3e9e8" stroke-width="1.0" stroke-linejoin="round"/>
<line x1="860.5" y1="601.7" x2="888.6" y2="618.4" stroke="#cfe3e0" stroke-width="0.55" />
<line x1="869.1" y1="596.8" x2="897" y2="613.4" stroke="#cfe3e0" stroke-width="0.55" />
<line x1="877.6" y1="591.9" x2="905.5" y2="608.5" stroke="#cfe3e0" stroke-width="0.55" />
<line x1="886.2" y1="587" x2="913.9" y2="603.6" stroke="#cfe3e0" stroke-width="0.55" />
<line x1="859" y1="610.8" x2="901.6" y2="586.3" stroke="#cfe3e0" stroke-width="0.55" />
<line x1="866" y1="615" x2="908.6" y2="590.4" stroke="#cfe3e0" stroke-width="0.55" />
<line x1="873.1" y1="619.1" x2="915.5" y2="594.6" stroke="#cfe3e0" stroke-width="0.55" />
<line x1="849" y1="609.2" x2="849" y2="627.4" stroke="#5d6465" stroke-width="1.5" />
<polygon points="829.6,636.7 831.6,633.6 840.7,634.8 851.8,641.1 862.1,642.7 869.2,647.8 870.1,653 866.8,657.3 859.7,657.9 850.2,653.4 833.2,645 829.8,641.1" fill="#d23a22" stroke="#d23a22" stroke-width="0.6" stroke-linejoin="round"/>
<polygon points="831.6,633.6 838.3,632.2 847.8,636 862.1,642.3 869.2,647.8 865.2,651.4 855.7,647.4 850.2,645.8 835.6,637.9" fill="#e24b31"/>
<polygon points="835.6,637.3 841.5,636.5 850.4,642.8 850.4,646 836.1,638.9" fill="#d6f2ef"/>
<polygon points="852.6,641.3 857.7,638.9 862.9,642.3 854.6,646" fill="#d6f2ef"/>
<polygon points="833.3,633.3 838.2,632.4 838.3,633.7 834.1,634.8" fill="#d6f2ef"/>
<line x1="850.4" y1="642.7" x2="850.4" y2="646.2" stroke="#d23a22" stroke-width="0.5" />
<ellipse cx="834.8" cy="642.7" rx="2.3" ry="2.9" fill="#1d2123" />
<ellipse cx="854.6" cy="653.8" rx="2.4" ry="3" fill="#1d2123" />
<ellipse cx="860.9" cy="653.9" rx="2.3" ry="1.2" fill="#f7f9f3" />
<ellipse cx="866.2" cy="654.7" rx="1" ry="0.6" fill="#e9d21a" />
<path d="M855,654.4 q1.5,7 7,7 q5,-0.5 7.5,-6.5" fill="none" stroke="#3d464b" stroke-width="0.9"/>
<polygon points="867.3,664.8 870.8,666.9 877.3,663 877.3,662.1 870.8,665.6 867.3,663.8" fill="#c3cbca"/>
<path d="M868.6,664.5 L870.8,665.8 L876.1,662.7 L876.1,650.8 Q876.1,649.1 874.4,647.9 Q873.6,647.4 872.8,648.2 L869,651.2 Q868.6,651.3 868.6,652.8 Z" fill="#f7faf9" stroke="#b4bebd" stroke-width="0.45"/>
<path d="M870.8,665.8 L876.1,662.7 L876.1,651.1 Q876.1,649.7 875.3,649.8 L870.8,653 Z" fill="#c9d1d0"/>
<path d="M868.6,664.5 L870.8,665.8 L870.8,653 L869.3,651.2 Q868.6,651.4 868.6,652.8 Z" fill="#fbfdfc"/>
<path d="M869.1,651.3 L870.8,653 L875.5,649.8 Q875.9,649 874.5,648.2 Q873.8,647.6 873.1,648.3 Z" fill="#f5f8f7"/>
<polygon points="871.5,654.5 875.3,652.4 875.3,654.4 871.5,656.6" fill="#1b8f85"/>
<polygon points="873.8,656.9 872.6,659.2 873.3,659.2 872.9,661 874.3,658.5 873.5,658.6" fill="#2aa79c"/>
<polygon points="812.6,647.6 814.6,644.4 823.7,645.6 834.8,651.9 845.1,653.5 852.2,658.7 853.1,663.8 849.8,668.2 842.7,668.7 833.2,664.2 816.2,655.9 812.8,651.9" fill="#0b6f67" stroke="#0b6f67" stroke-width="0.6" stroke-linejoin="round"/>
<polygon points="814.6,644.4 821.3,643.1 830.8,646.8 845.1,653.1 852.2,658.7 848.2,662.2 838.7,658.3 833.2,656.7 818.6,648.8" fill="#14897f"/>
<polygon points="818.6,648.1 824.5,647.3 833.4,653.7 833.4,656.8 819.1,649.7" fill="#d6f2ef"/>
<polygon points="835.6,652.1 840.7,649.7 845.9,653.1 837.6,656.8" fill="#d6f2ef"/>
<polygon points="816.3,644.2 821.2,643.2 821.3,644.5 817.1,645.6" fill="#d6f2ef"/>
<line x1="833.4" y1="653.5" x2="833.4" y2="657" stroke="#0b6f67" stroke-width="0.5" />
<ellipse cx="817.8" cy="653.5" rx="2.3" ry="2.9" fill="#1d2123" />
<ellipse cx="837.6" cy="664.6" rx="2.4" ry="3" fill="#1d2123" />
<ellipse cx="843.9" cy="664.7" rx="2.3" ry="1.2" fill="#f7f9f3" />
<ellipse cx="849.2" cy="665.5" rx="1" ry="0.6" fill="#e9d21a" />
<path d="M837.9,665.2 q1.5,7.5 7,7.5 q5,-0.5 7.5,-7" fill="none" stroke="#3d464b" stroke-width="0.9"/>
<polygon points="850.4,674.8 853.9,677 860.5,673 860.5,672.1 853.9,675.6 850.4,673.9" fill="#c3cbca"/>
<path d="M851.7,674.6 L853.9,675.8 L859.2,672.8 L859.2,660.9 Q859.2,659.2 857.5,658 Q856.7,657.5 856,658.2 L852.1,661.2 Q851.7,661.4 851.7,662.8 Z" fill="#f7faf9" stroke="#b4bebd" stroke-width="0.45"/>
<path d="M853.9,675.8 L859.2,672.8 L859.2,661.1 Q859.2,659.8 858.4,659.9 L853.9,663.1 Z" fill="#c9d1d0"/>
<path d="M851.7,674.6 L853.9,675.8 L853.9,663.1 L852.4,661.3 Q851.7,661.5 851.7,662.8 Z" fill="#fbfdfc"/>
<path d="M852.2,661.4 L853.9,663.1 L858.7,659.9 Q859,659 857.7,658.2 Q857,657.7 856.2,658.3 Z" fill="#f5f8f7"/>
<polygon points="854.7,664.6 858.4,662.4 858.4,664.5 854.7,666.6" fill="#1b8f85"/>
<polygon points="857,666.9 855.7,669.3 856.5,669.2 856.1,671.1 857.4,668.5 856.6,668.6" fill="#2aa79c"/>
<line x1="806.9" y1="633.3" x2="806.9" y2="655.9" stroke="#596061" stroke-width="1.6" />
<line x1="834.6" y1="649.7" x2="834.6" y2="672.5" stroke="#596061" stroke-width="1.6" />
<line x1="876.3" y1="625.4" x2="876.3" y2="648" stroke="#596061" stroke-width="1.6" />
<polygon points="806.3,632.9 834.4,649.6 876.7,625 876.7,626.3 834.4,650.9 806.3,634.2" fill="#6f7877"/>
<polygon points="806.3,632.9 849,608.4 876.7,625 834.4,649.6" fill="#0f6d66" stroke="#e3e9e8" stroke-width="1.0" stroke-linejoin="round"/>
<line x1="814.8" y1="628" x2="842.9" y2="644.7" stroke="#cfe3e0" stroke-width="0.55" />
<line x1="823.4" y1="623.1" x2="851.3" y2="639.7" stroke="#cfe3e0" stroke-width="0.55" />
<line x1="831.9" y1="618.2" x2="859.8" y2="634.8" stroke="#cfe3e0" stroke-width="0.55" />
<line x1="840.5" y1="613.3" x2="868.2" y2="629.9" stroke="#cfe3e0" stroke-width="0.55" />
<line x1="813.3" y1="637.1" x2="855.9" y2="612.6" stroke="#cfe3e0" stroke-width="0.55" />
<line x1="820.3" y1="641.3" x2="862.9" y2="616.7" stroke="#cfe3e0" stroke-width="0.55" />
<line x1="827.4" y1="645.4" x2="869.8" y2="620.9" stroke="#cfe3e0" stroke-width="0.55" />
<line x1="956.7" y1="620.9" x2="956.7" y2="639.1" stroke="#5d6465" stroke-width="1.5" />
<polygon points="937.3,648.4 939.3,645.3 948.4,646.5 959.5,652.8 969.8,654.4 976.9,659.5 977.8,664.7 974.5,669 967.4,669.6 957.9,665.1 940.9,656.8 937.5,652.8" fill="#d23a22" stroke="#d23a22" stroke-width="0.6" stroke-linejoin="round"/>
<polygon points="939.3,645.3 946,643.9 955.5,647.7 969.8,654 976.9,659.5 972.9,663.1 963.4,659.1 957.9,657.5 943.3,649.6" fill="#e24b31"/>
<polygon points="943.3,649 949.2,648.2 958.1,654.5 958.1,657.7 943.8,650.6" fill="#d6f2ef"/>
<polygon points="960.3,653 965.4,650.6 970.6,654 962.3,657.7" fill="#d6f2ef"/>
<polygon points="941,645 945.9,644.1 946,645.4 941.8,646.5" fill="#d6f2ef"/>
<line x1="958.1" y1="654.4" x2="958.1" y2="657.9" stroke="#d23a22" stroke-width="0.5" />
<ellipse cx="942.5" cy="654.4" rx="2.3" ry="2.9" fill="#1d2123" />
<ellipse cx="962.3" cy="665.5" rx="2.4" ry="3" fill="#1d2123" />
<ellipse cx="968.6" cy="665.6" rx="2.3" ry="1.2" fill="#f7f9f3" />
<ellipse cx="973.9" cy="666.4" rx="1" ry="0.6" fill="#e9d21a" />
<path d="M962.7,666.1 q1.5,7 7,7 q5,-0.5 7.5,-6.5" fill="none" stroke="#3d464b" stroke-width="0.9"/>
<polygon points="975,676.5 978.5,678.6 985,674.7 985,673.8 978.5,677.3 975,675.5" fill="#c3cbca"/>
<path d="M976.3,676.2 L978.5,677.5 L983.8,674.4 L983.8,662.5 Q983.8,660.8 982.1,659.6 Q981.3,659.1 980.5,659.9 L976.7,662.9 Q976.3,663 976.3,664.5 Z" fill="#f7faf9" stroke="#b4bebd" stroke-width="0.45"/>
<path d="M978.5,677.5 L983.8,674.4 L983.8,662.8 Q983.8,661.4 983,661.5 L978.5,664.7 Z" fill="#c9d1d0"/>
<path d="M976.3,676.2 L978.5,677.5 L978.5,664.7 L977,662.9 Q976.3,663.1 976.3,664.5 Z" fill="#fbfdfc"/>
<path d="M976.8,663 L978.5,664.7 L983.2,661.5 Q983.6,660.7 982.2,659.9 Q981.5,659.3 980.8,660 Z" fill="#f5f8f7"/>
<polygon points="979.2,666.2 983,664.1 983,666.1 979.2,668.3" fill="#1b8f85"/>
<polygon points="981.5,668.6 980.3,670.9 981,670.9 980.6,672.7 982,670.2 981.2,670.3" fill="#2aa79c"/>
<polygon points="920.3,659.3 922.3,656.1 931.4,657.3 942.5,663.6 952.8,665.2 959.9,670.4 960.8,675.5 957.5,679.9 950.4,680.4 940.9,675.9 923.9,667.6 920.5,663.6" fill="#0b6f67" stroke="#0b6f67" stroke-width="0.6" stroke-linejoin="round"/>
<polygon points="922.3,656.1 929,654.8 938.5,658.5 952.8,664.8 959.9,670.4 955.9,673.9 946.4,670 940.9,668.4 926.3,660.5" fill="#14897f"/>
<polygon points="926.3,659.8 932.2,659 941.1,665.4 941.1,668.5 926.8,661.4" fill="#d6f2ef"/>
<polygon points="943.3,663.8 948.4,661.4 953.6,664.8 945.3,668.5" fill="#d6f2ef"/>
<polygon points="924,655.9 928.9,654.9 929,656.2 924.8,657.3" fill="#d6f2ef"/>
<line x1="941.1" y1="665.2" x2="941.1" y2="668.7" stroke="#0b6f67" stroke-width="0.5" />
<ellipse cx="925.5" cy="665.2" rx="2.3" ry="2.9" fill="#1d2123" />
<ellipse cx="945.3" cy="676.3" rx="2.4" ry="3" fill="#1d2123" />
<ellipse cx="951.6" cy="676.4" rx="2.3" ry="1.2" fill="#f7f9f3" />
<ellipse cx="956.9" cy="677.2" rx="1" ry="0.6" fill="#e9d21a" />
<path d="M945.6,676.9 q1.5,7.5 7,7.5 q5,-0.5 7.5,-7" fill="none" stroke="#3d464b" stroke-width="0.9"/>
<polygon points="958.1,686.5 961.6,688.7 968.2,684.7 968.2,683.8 961.6,687.3 958.1,685.6" fill="#c3cbca"/>
<path d="M959.4,686.3 L961.6,687.5 L966.9,684.5 L966.9,672.6 Q966.9,670.9 965.2,669.7 Q964.4,669.2 963.7,669.9 L959.8,672.9 Q959.4,673.1 959.4,674.5 Z" fill="#f7faf9" stroke="#b4bebd" stroke-width="0.45"/>
<path d="M961.6,687.5 L966.9,684.5 L966.9,672.8 Q966.9,671.5 966.1,671.6 L961.6,674.8 Z" fill="#c9d1d0"/>
<path d="M959.4,686.3 L961.6,687.5 L961.6,674.8 L960.1,673 Q959.4,673.2 959.4,674.5 Z" fill="#fbfdfc"/>
<path d="M959.9,673.1 L961.6,674.8 L966.4,671.6 Q966.7,670.7 965.4,669.9 Q964.7,669.4 963.9,670 Z" fill="#f5f8f7"/>
<polygon points="962.4,676.3 966.1,674.1 966.1,676.2 962.4,678.3" fill="#1b8f85"/>
<polygon points="964.7,678.6 963.4,681 964.2,680.9 963.8,682.8 965.1,680.2 964.3,680.3" fill="#2aa79c"/>
<line x1="914.6" y1="645" x2="914.6" y2="667.6" stroke="#596061" stroke-width="1.6" />
<line x1="942.3" y1="661.4" x2="942.3" y2="684.2" stroke="#596061" stroke-width="1.6" />
<line x1="984" y1="637.1" x2="984" y2="659.7" stroke="#596061" stroke-width="1.6" />
<polygon points="914,644.6 942.1,661.3 984.4,636.7 984.4,638 942.1,662.6 914,645.9" fill="#6f7877"/>
<polygon points="914,644.6 956.7,620.1 984.4,636.7 942.1,661.3" fill="#0f6d66" stroke="#e3e9e8" stroke-width="1.0" stroke-linejoin="round"/>
<line x1="922.5" y1="639.7" x2="950.6" y2="656.4" stroke="#cfe3e0" stroke-width="0.55" />
<line x1="931.1" y1="634.8" x2="959" y2="651.4" stroke="#cfe3e0" stroke-width="0.55" />
<line x1="939.6" y1="629.9" x2="967.5" y2="646.5" stroke="#cfe3e0" stroke-width="0.55" />
<line x1="948.2" y1="625" x2="975.9" y2="641.6" stroke="#cfe3e0" stroke-width="0.55" />
<line x1="921" y1="648.8" x2="963.6" y2="624.3" stroke="#cfe3e0" stroke-width="0.55" />
<line x1="928" y1="653" x2="970.6" y2="628.4" stroke="#cfe3e0" stroke-width="0.55" />
<line x1="935.1" y1="657.1" x2="977.5" y2="632.6" stroke="#cfe3e0" stroke-width="0.55" />
<line x1="911.4" y1="647.9" x2="911.4" y2="666.1" stroke="#5d6465" stroke-width="1.5" />
<polygon points="892,675.4 894,672.3 903.1,673.5 914.2,679.8 924.5,681.4 931.6,686.5 932.5,691.7 929.2,696 922.1,696.6 912.6,692.1 895.6,683.8 892.2,679.8" fill="#d23a22" stroke="#d23a22" stroke-width="0.6" stroke-linejoin="round"/>
<polygon points="894,672.3 900.7,670.9 910.2,674.7 924.5,681 931.6,686.5 927.6,690.1 918.1,686.1 912.6,684.5 898,676.6" fill="#e24b31"/>
<polygon points="898,676 903.9,675.2 912.8,681.5 912.8,684.7 898.5,677.6" fill="#d6f2ef"/>
<polygon points="915,680 920.1,677.6 925.3,681 917,684.7" fill="#d6f2ef"/>
<polygon points="895.7,672 900.6,671.1 900.7,672.4 896.5,673.5" fill="#d6f2ef"/>
<line x1="912.8" y1="681.4" x2="912.8" y2="684.9" stroke="#d23a22" stroke-width="0.5" />
<ellipse cx="897.2" cy="681.4" rx="2.3" ry="2.9" fill="#1d2123" />
<ellipse cx="917" cy="692.5" rx="2.4" ry="3" fill="#1d2123" />
<ellipse cx="923.3" cy="692.6" rx="2.3" ry="1.2" fill="#f7f9f3" />
<ellipse cx="928.6" cy="693.4" rx="1" ry="0.6" fill="#e9d21a" />
<path d="M917.4,693.1 q1.5,7 7,7 q5,-0.5 7.5,-6.5" fill="none" stroke="#3d464b" stroke-width="0.9"/>
<polygon points="929.7,703.5 933.2,705.6 939.7,701.7 939.7,700.8 933.2,704.3 929.7,702.5" fill="#c3cbca"/>
<path d="M931,703.2 L933.2,704.5 L938.5,701.4 L938.5,689.5 Q938.5,687.8 936.8,686.6 Q936,686.1 935.2,686.9 L931.4,689.9 Q931,690 931,691.5 Z" fill="#f7faf9" stroke="#b4bebd" stroke-width="0.45"/>
<path d="M933.2,704.5 L938.5,701.4 L938.5,689.8 Q938.5,688.4 937.7,688.5 L933.2,691.7 Z" fill="#c9d1d0"/>
<path d="M931,703.2 L933.2,704.5 L933.2,691.7 L931.7,689.9 Q931,690.1 931,691.5 Z" fill="#fbfdfc"/>
<path d="M931.5,690 L933.2,691.7 L937.9,688.5 Q938.3,687.7 936.9,686.9 Q936.2,686.3 935.5,687 Z" fill="#f5f8f7"/>
<polygon points="933.9,693.2 937.7,691.1 937.7,693.1 933.9,695.3" fill="#1b8f85"/>
<polygon points="936.2,695.6 935,697.9 935.7,697.9 935.3,699.7 936.7,697.2 935.9,697.3" fill="#2aa79c"/>
<polygon points="875,686.3 877,683.1 886.1,684.3 897.2,690.6 907.5,692.2 914.6,697.4 915.5,702.5 912.2,706.9 905.1,707.4 895.6,702.9 878.6,694.6 875.2,690.6" fill="#0b6f67" stroke="#0b6f67" stroke-width="0.6" stroke-linejoin="round"/>
<polygon points="877,683.1 883.7,681.8 893.2,685.5 907.5,691.8 914.6,697.4 910.6,700.9 901.1,697 895.6,695.4 881,687.5" fill="#14897f"/>
<polygon points="881,686.8 886.9,686 895.8,692.4 895.8,695.5 881.5,688.4" fill="#d6f2ef"/>
<polygon points="898,690.8 903.1,688.4 908.3,691.8 900,695.5" fill="#d6f2ef"/>
<polygon points="878.7,682.9 883.6,681.9 883.7,683.2 879.5,684.3" fill="#d6f2ef"/>
<line x1="895.8" y1="692.2" x2="895.8" y2="695.7" stroke="#0b6f67" stroke-width="0.5" />
<ellipse cx="880.2" cy="692.2" rx="2.3" ry="2.9" fill="#1d2123" />
<ellipse cx="900" cy="703.3" rx="2.4" ry="3" fill="#1d2123" />
<ellipse cx="906.3" cy="703.4" rx="2.3" ry="1.2" fill="#f7f9f3" />
<ellipse cx="911.6" cy="704.2" rx="1" ry="0.6" fill="#e9d21a" />
<path d="M900.3,703.9 q1.5,7.5 7,7.5 q5,-0.5 7.5,-7" fill="none" stroke="#3d464b" stroke-width="0.9"/>
<polygon points="912.8,713.5 916.3,715.7 922.9,711.7 922.9,710.8 916.3,714.3 912.8,712.6" fill="#c3cbca"/>
<path d="M914.1,713.3 L916.3,714.5 L921.6,711.5 L921.6,699.6 Q921.6,697.9 919.9,696.7 Q919.1,696.2 918.4,696.9 L914.5,699.9 Q914.1,700.1 914.1,701.5 Z" fill="#f7faf9" stroke="#b4bebd" stroke-width="0.45"/>
<path d="M916.3,714.5 L921.6,711.5 L921.6,699.8 Q921.6,698.5 920.8,698.6 L916.3,701.8 Z" fill="#c9d1d0"/>
<path d="M914.1,713.3 L916.3,714.5 L916.3,701.8 L914.8,700 Q914.1,700.2 914.1,701.5 Z" fill="#fbfdfc"/>
<path d="M914.6,700.1 L916.3,701.8 L921.1,698.6 Q921.4,697.7 920.1,696.9 Q919.4,696.4 918.6,697 Z" fill="#f5f8f7"/>
<polygon points="917.1,703.3 920.8,701.1 920.8,703.2 917.1,705.3" fill="#1b8f85"/>
<polygon points="919.4,705.6 918.1,708 918.9,707.9 918.5,709.8 919.8,707.2 919,707.3" fill="#2aa79c"/>
<line x1="869.3" y1="672" x2="869.3" y2="694.6" stroke="#596061" stroke-width="1.6" />
<line x1="897" y1="688.4" x2="897" y2="711.2" stroke="#596061" stroke-width="1.6" />
<line x1="938.7" y1="664.1" x2="938.7" y2="686.7" stroke="#596061" stroke-width="1.6" />
<polygon points="868.7,671.6 896.8,688.3 939.1,663.7 939.1,665 896.8,689.6 868.7,672.9" fill="#6f7877"/>
<polygon points="868.7,671.6 911.4,647.1 939.1,663.7 896.8,688.3" fill="#0f6d66" stroke="#e3e9e8" stroke-width="1.0" stroke-linejoin="round"/>
<line x1="877.2" y1="666.7" x2="905.3" y2="683.4" stroke="#cfe3e0" stroke-width="0.55" />
<line x1="885.8" y1="661.8" x2="913.7" y2="678.4" stroke="#cfe3e0" stroke-width="0.55" />
<line x1="894.3" y1="656.9" x2="922.2" y2="673.5" stroke="#cfe3e0" stroke-width="0.55" />
<line x1="902.9" y1="652" x2="930.6" y2="668.6" stroke="#cfe3e0" stroke-width="0.55" />
<line x1="875.7" y1="675.8" x2="918.3" y2="651.3" stroke="#cfe3e0" stroke-width="0.55" />
<line x1="882.7" y1="680" x2="925.3" y2="655.4" stroke="#cfe3e0" stroke-width="0.55" />
<line x1="889.8" y1="684.1" x2="932.2" y2="659.6" stroke="#cfe3e0" stroke-width="0.55" />
<path d="M1008.8,596.6 L1013.2,596.6 L1013.2,622.7 Q1011,624.5 1008.8,622.7 Z" fill="#523a2e"/>
<path d="M1011.5,596.6 L1013.2,596.6 L1013.2,622.7 Q1012.1,624.1 1011.5,623.7 Z" fill="#46312a"/>
<clipPath id="rt1"><ellipse cx="1011" cy="596.6" rx="15.1" ry="12.7"/></clipPath>
<ellipse cx="1011" cy="596.6" rx="15.1" ry="12.7" fill="#076a61" />
<g clip-path="url(#rt1)">
<ellipse cx="1011" cy="589.7" rx="15.4" ry="12.7" fill="#0c756c" />
<ellipse cx="1011" cy="582.9" rx="15.4" ry="12.7" fill="#12817a" />
<ellipse cx="1011" cy="577.7" rx="15.4" ry="12.7" fill="#1d8b80" />
</g>
<path d="M996.1,609.3 L999.9,609.3 L999.9,628.9 Q998,630.7 996.1,628.9 Z" fill="#523a2e"/>
<path d="M998.4,609.3 L999.9,609.3 L999.9,628.9 Q998.9,630.3 998.4,629.9 Z" fill="#46312a"/>
<clipPath id="rt2"><ellipse cx="998" cy="609.3" rx="11.1" ry="9.8"/></clipPath>
<ellipse cx="998" cy="609.3" rx="11.1" ry="9.8" fill="#076a61" />
<g clip-path="url(#rt2)">
<ellipse cx="998" cy="604" rx="11.3" ry="9.8" fill="#0c756c" />
<ellipse cx="998" cy="598.7" rx="11.3" ry="9.8" fill="#12817a" />
<ellipse cx="998" cy="594.7" rx="11.3" ry="9.8" fill="#1d8b80" />
</g>
<polygon points="1036.7,702.8 1150,766.9 1150,712.4 1036.7,648.3" fill="#e9efee" stroke="#cfd6d5" stroke-width="0.5" stroke-linejoin="round"/>
<polygon points="1150,766.9 1233.6,719.9 1233.6,665.4 1150,712.4" fill="#a9b3b2" stroke="#a9b3b2" stroke-width="0.5" stroke-linejoin="round"/>
<polygon points="1036.7,648.3 1150,712.4 1233.6,665.4 1120.3,601.3" fill="#edf2f1" stroke="#fafcfc" stroke-width="0.9" stroke-linejoin="round"/>
<path d="M1036.7,648.3 L1120.3,601.3 L1233.6,665.4 L1233.6,719.9 L1150,766.9 L1036.7,702.8 Z" fill="none" stroke="#5e6867" stroke-width="0.45" stroke-linejoin="round" stroke-opacity="0.8"/>
<polygon points="1044.4,660.3 1050.3,663.6 1050.3,672.9 1044.4,669.6" fill="#fdf46a"/>
<polygon points="1052.4,664.8 1058.3,668.1 1058.3,677.4 1052.4,674.1" fill="#fdf46a"/>
<polygon points="1060.4,669.3 1066.3,672.7 1066.3,682 1060.4,678.6" fill="#fdf46a"/>
<polygon points="1068.4,673.9 1074.3,677.2 1074.3,686.5 1068.4,683.2" fill="#fdf46a"/>
<polygon points="1076.4,678.4 1082.3,681.7 1082.3,691 1076.4,687.7" fill="#fdf46a"/>
<polygon points="1084.4,682.9 1090.3,686.3 1090.3,695.6 1084.4,692.2" fill="#fdf46a"/>
<polygon points="1092.4,687.4 1098.3,690.8 1098.3,700.1 1092.4,696.7" fill="#fdf46a"/>
<polygon points="1100.4,692 1106.3,695.3 1106.3,704.6 1100.4,701.3" fill="#fdf46a"/>
<polygon points="1108.4,696.5 1114.3,699.8 1114.3,709.1 1108.4,705.8" fill="#fdf46a"/>
<polygon points="1116.4,701 1122.3,704.4 1122.3,713.7 1116.4,710.3" fill="#fdf46a"/>
<polygon points="1124.4,705.6 1130.3,708.9 1130.3,718.2 1124.4,714.9" fill="#fdf46a"/>
<polygon points="1132.4,710.1 1138.3,713.4 1138.3,722.7 1132.4,719.4" fill="#fdf46a"/>
<polygon points="1043.7,684.2 1049.6,687.5 1049.6,696.8 1043.7,693.5" fill="#fdf46a"/>
<polygon points="1051.7,688.7 1057.6,692.1 1057.6,701.4 1051.7,698" fill="#fdf46a"/>
<polygon points="1059.7,693.2 1065.6,696.6 1065.6,705.9 1059.7,702.5" fill="#fdf46a"/>
<polygon points="1067.7,697.8 1073.6,701.1 1073.6,710.4 1067.7,707.1" fill="#fdf46a"/>
<polygon points="1075.7,702.3 1081.6,705.6 1081.6,714.9 1075.7,711.6" fill="#fdf46a"/>
<polygon points="1083.7,706.8 1089.6,710.2 1089.6,719.5 1083.7,716.1" fill="#fdf46a"/>
<polygon points="1091.7,711.4 1097.6,714.7 1097.6,724 1091.7,720.7" fill="#fdf46a"/>
<polygon points="1099.7,715.9 1105.6,719.2 1105.6,728.5 1099.7,725.2" fill="#fdf46a"/>
<polygon points="1107.7,720.4 1113.6,723.8 1113.6,733.1 1107.7,729.7" fill="#fdf46a"/>
<polygon points="1122.6,730.6 1130.2,734.9 1130.2,753.4 1122.6,749.1" fill="#f4fbfa"/>
<polygon points="1123.4,731.6 1129.4,735 1129.4,752.2 1123.4,748.8" fill="#cfefed"/>
<polygon points="1123.8,738.6 1124.8,739.2 1124.8,741.4 1123.8,740.8" fill="#4a5558"/>
<polygon points="1156.5,715.1 1162.7,711.6 1162.7,722.4 1156.5,725.9" fill="#e9e204"/>
<polygon points="1164.5,710.5 1170.7,707.1 1170.7,717.9 1164.5,721.3" fill="#e9e204"/>
<polygon points="1172.6,706 1178.8,702.5 1178.8,713.3 1172.6,716.8" fill="#e9e204"/>
<polygon points="1180.6,701.5 1186.8,698 1186.8,708.8 1180.6,712.3" fill="#e9e204"/>
<polygon points="1188.7,697 1194.9,693.5 1194.9,704.3 1188.7,707.8" fill="#e9e204"/>
<polygon points="1196.7,692.4 1202.9,689 1202.9,699.8 1196.7,703.2" fill="#e9e204"/>
<polygon points="1204.8,687.9 1211,684.4 1211,695.2 1204.8,698.7" fill="#e9e204"/>
<polygon points="1212.8,683.4 1219,679.9 1219,690.7 1212.8,694.2" fill="#e9e204"/>
<polygon points="1220.9,678.9 1227.1,675.4 1227.1,686.2 1220.9,689.7" fill="#e9e204"/>
<polygon points="1165.8,730.6 1189.4,717.3 1189.4,741.8 1165.8,755.1" fill="#d9f3f1"/>
<line x1="1166.4" y1="731.6" x2="1188.8" y2="719" stroke="#9fd5d1" stroke-width="0.7" />
<line x1="1166.4" y1="733.7" x2="1188.8" y2="721.2" stroke="#9fd5d1" stroke-width="0.7" />
<line x1="1166.4" y1="735.9" x2="1188.8" y2="723.3" stroke="#9fd5d1" stroke-width="0.7" />
<line x1="1166.4" y1="738" x2="1188.8" y2="725.4" stroke="#9fd5d1" stroke-width="0.7" />
<line x1="1166.4" y1="740.2" x2="1188.8" y2="727.6" stroke="#9fd5d1" stroke-width="0.7" />
<line x1="1166.4" y1="742.3" x2="1188.8" y2="729.7" stroke="#9fd5d1" stroke-width="0.7" />
<line x1="1166.4" y1="744.4" x2="1188.8" y2="731.8" stroke="#9fd5d1" stroke-width="0.7" />
<line x1="1166.4" y1="746.6" x2="1188.8" y2="734" stroke="#9fd5d1" stroke-width="0.7" />
<line x1="1166.4" y1="748.7" x2="1188.8" y2="736.1" stroke="#9fd5d1" stroke-width="0.7" />
<line x1="1166.4" y1="750.8" x2="1188.8" y2="738.3" stroke="#9fd5d1" stroke-width="0.7" />
<line x1="1166.4" y1="753" x2="1188.8" y2="740.4" stroke="#9fd5d1" stroke-width="0.7" />
<polygon points="1198.7,711.6 1222.3,698.3 1222.3,722.8 1198.7,736.1" fill="#d9f3f1"/>
<line x1="1199.3" y1="712.6" x2="1221.7" y2="700" stroke="#9fd5d1" stroke-width="0.7" />
<line x1="1199.3" y1="714.7" x2="1221.7" y2="702.1" stroke="#9fd5d1" stroke-width="0.7" />
<line x1="1199.3" y1="716.9" x2="1221.7" y2="704.3" stroke="#9fd5d1" stroke-width="0.7" />
<line x1="1199.3" y1="719" x2="1221.7" y2="706.4" stroke="#9fd5d1" stroke-width="0.7" />
<line x1="1199.3" y1="721.1" x2="1221.7" y2="708.5" stroke="#9fd5d1" stroke-width="0.7" />
<line x1="1199.3" y1="723.3" x2="1221.7" y2="710.7" stroke="#9fd5d1" stroke-width="0.7" />
<line x1="1199.3" y1="725.4" x2="1221.7" y2="712.8" stroke="#9fd5d1" stroke-width="0.7" />
<line x1="1199.3" y1="727.5" x2="1221.7" y2="714.9" stroke="#9fd5d1" stroke-width="0.7" />
<line x1="1199.3" y1="729.7" x2="1221.7" y2="717.1" stroke="#9fd5d1" stroke-width="0.7" />
<line x1="1199.3" y1="731.8" x2="1221.7" y2="719.2" stroke="#9fd5d1" stroke-width="0.7" />
<line x1="1199.3" y1="733.9" x2="1221.7" y2="721.4" stroke="#9fd5d1" stroke-width="0.7" />
<polygon points="1054.2,649.7 1074.4,638.1 1088.6,646 1068.6,657.8" fill="#0a6c65" stroke="#f0f4f3" stroke-width="1.5" stroke-linejoin="round"/>
<line x1="1057.6" y1="647.7" x2="1071.9" y2="655.8" stroke="#6dbab2" stroke-width="0.45" stroke-opacity="0.8"/>
<line x1="1060.9" y1="645.8" x2="1075.3" y2="653.8" stroke="#6dbab2" stroke-width="0.45" stroke-opacity="0.8"/>
<line x1="1064.3" y1="643.9" x2="1078.6" y2="651.9" stroke="#6dbab2" stroke-width="0.45" stroke-opacity="0.8"/>
<line x1="1067.7" y1="641.9" x2="1081.9" y2="649.9" stroke="#6dbab2" stroke-width="0.45" stroke-opacity="0.8"/>
<line x1="1071" y1="640" x2="1085.3" y2="647.9" stroke="#6dbab2" stroke-width="0.45" stroke-opacity="0.8"/>
<line x1="1056.6" y1="651" x2="1076.8" y2="639.4" stroke="#6dbab2" stroke-width="0.45" stroke-opacity="0.8"/>
<line x1="1059" y1="652.4" x2="1079.1" y2="640.7" stroke="#6dbab2" stroke-width="0.45" stroke-opacity="0.8"/>
<line x1="1061.4" y1="653.7" x2="1081.5" y2="642" stroke="#6dbab2" stroke-width="0.45" stroke-opacity="0.8"/>
<line x1="1063.8" y1="655.1" x2="1083.9" y2="643.3" stroke="#6dbab2" stroke-width="0.45" stroke-opacity="0.8"/>
<line x1="1066.2" y1="656.4" x2="1086.3" y2="644.7" stroke="#6dbab2" stroke-width="0.45" stroke-opacity="0.8"/>
<polygon points="1069.7,658.4 1089.7,646.6 1103.9,654.5 1084.1,666.5" fill="#0a6c65" stroke="#f0f4f3" stroke-width="1.5" stroke-linejoin="round"/>
<line x1="1073" y1="656.4" x2="1087.4" y2="664.5" stroke="#6dbab2" stroke-width="0.45" stroke-opacity="0.8"/>
<line x1="1076.4" y1="654.5" x2="1090.7" y2="662.5" stroke="#6dbab2" stroke-width="0.45" stroke-opacity="0.8"/>
<line x1="1079.7" y1="652.5" x2="1094" y2="660.5" stroke="#6dbab2" stroke-width="0.45" stroke-opacity="0.8"/>
<line x1="1083" y1="650.5" x2="1097.3" y2="658.5" stroke="#6dbab2" stroke-width="0.45" stroke-opacity="0.8"/>
<line x1="1086.4" y1="648.5" x2="1100.6" y2="656.5" stroke="#6dbab2" stroke-width="0.45" stroke-opacity="0.8"/>
<line x1="1072.1" y1="659.7" x2="1092.1" y2="647.9" stroke="#6dbab2" stroke-width="0.45" stroke-opacity="0.8"/>
<line x1="1074.5" y1="661.1" x2="1094.5" y2="649.2" stroke="#6dbab2" stroke-width="0.45" stroke-opacity="0.8"/>
<line x1="1076.9" y1="662.4" x2="1096.8" y2="650.5" stroke="#6dbab2" stroke-width="0.45" stroke-opacity="0.8"/>
<line x1="1079.3" y1="663.8" x2="1099.2" y2="651.8" stroke="#6dbab2" stroke-width="0.45" stroke-opacity="0.8"/>
<line x1="1081.7" y1="665.1" x2="1101.6" y2="653.2" stroke="#6dbab2" stroke-width="0.45" stroke-opacity="0.8"/>
<polygon points="1085.2,667.1 1105,655.1 1119.3,663 1099.5,675.2" fill="#0a6c65" stroke="#f0f4f3" stroke-width="1.5" stroke-linejoin="round"/>
<line x1="1088.5" y1="665.1" x2="1102.8" y2="673.1" stroke="#6dbab2" stroke-width="0.45" stroke-opacity="0.8"/>
<line x1="1091.8" y1="663.1" x2="1106.1" y2="671.1" stroke="#6dbab2" stroke-width="0.45" stroke-opacity="0.8"/>
<line x1="1095.1" y1="661.1" x2="1109.4" y2="669.1" stroke="#6dbab2" stroke-width="0.45" stroke-opacity="0.8"/>
<line x1="1098.4" y1="659.1" x2="1112.7" y2="667" stroke="#6dbab2" stroke-width="0.45" stroke-opacity="0.8"/>
<line x1="1101.7" y1="657.1" x2="1116" y2="665" stroke="#6dbab2" stroke-width="0.45" stroke-opacity="0.8"/>
<line x1="1087.6" y1="668.4" x2="1107.4" y2="656.4" stroke="#6dbab2" stroke-width="0.45" stroke-opacity="0.8"/>
<line x1="1090" y1="669.8" x2="1109.8" y2="657.7" stroke="#6dbab2" stroke-width="0.45" stroke-opacity="0.8"/>
<line x1="1092.3" y1="671.1" x2="1112.2" y2="659" stroke="#6dbab2" stroke-width="0.45" stroke-opacity="0.8"/>
<line x1="1094.7" y1="672.5" x2="1114.5" y2="660.4" stroke="#6dbab2" stroke-width="0.45" stroke-opacity="0.8"/>
<line x1="1097.1" y1="673.8" x2="1116.9" y2="661.7" stroke="#6dbab2" stroke-width="0.45" stroke-opacity="0.8"/>
<polygon points="1100.6,675.8 1120.4,663.6 1134.6,671.5 1115,683.9" fill="#0a6c65" stroke="#f0f4f3" stroke-width="1.5" stroke-linejoin="round"/>
<line x1="1103.9" y1="673.8" x2="1118.3" y2="681.8" stroke="#6dbab2" stroke-width="0.45" stroke-opacity="0.8"/>
<line x1="1107.2" y1="671.7" x2="1121.5" y2="679.7" stroke="#6dbab2" stroke-width="0.45" stroke-opacity="0.8"/>
<line x1="1110.5" y1="669.7" x2="1124.8" y2="677.7" stroke="#6dbab2" stroke-width="0.45" stroke-opacity="0.8"/>
<line x1="1113.8" y1="667.7" x2="1128.1" y2="675.6" stroke="#6dbab2" stroke-width="0.45" stroke-opacity="0.8"/>
<line x1="1117.1" y1="665.6" x2="1131.3" y2="673.6" stroke="#6dbab2" stroke-width="0.45" stroke-opacity="0.8"/>
<line x1="1103" y1="677.1" x2="1122.7" y2="664.9" stroke="#6dbab2" stroke-width="0.45" stroke-opacity="0.8"/>
<line x1="1105.4" y1="678.5" x2="1125.1" y2="666.2" stroke="#6dbab2" stroke-width="0.45" stroke-opacity="0.8"/>
<line x1="1107.8" y1="679.8" x2="1127.5" y2="667.6" stroke="#6dbab2" stroke-width="0.45" stroke-opacity="0.8"/>
<line x1="1110.2" y1="681.2" x2="1129.8" y2="668.9" stroke="#6dbab2" stroke-width="0.45" stroke-opacity="0.8"/>
<line x1="1112.6" y1="682.5" x2="1132.2" y2="670.2" stroke="#6dbab2" stroke-width="0.45" stroke-opacity="0.8"/>
<polygon points="1116.1,684.5 1135.7,672.1 1149.9,680 1130.5,692.6" fill="#0a6c65" stroke="#f0f4f3" stroke-width="1.5" stroke-linejoin="round"/>
<line x1="1119.4" y1="682.4" x2="1133.7" y2="690.5" stroke="#6dbab2" stroke-width="0.45" stroke-opacity="0.8"/>
<line x1="1122.6" y1="680.4" x2="1137" y2="688.4" stroke="#6dbab2" stroke-width="0.45" stroke-opacity="0.8"/>
<line x1="1125.9" y1="678.3" x2="1140.2" y2="686.3" stroke="#6dbab2" stroke-width="0.45" stroke-opacity="0.8"/>
<line x1="1129.2" y1="676.2" x2="1143.4" y2="684.2" stroke="#6dbab2" stroke-width="0.45" stroke-opacity="0.8"/>
<line x1="1132.4" y1="674.2" x2="1146.7" y2="682.1" stroke="#6dbab2" stroke-width="0.45" stroke-opacity="0.8"/>
<line x1="1118.5" y1="685.8" x2="1138.1" y2="673.4" stroke="#6dbab2" stroke-width="0.45" stroke-opacity="0.8"/>
<line x1="1120.9" y1="687.2" x2="1140.4" y2="674.7" stroke="#6dbab2" stroke-width="0.45" stroke-opacity="0.8"/>
<line x1="1123.3" y1="688.5" x2="1142.8" y2="676.1" stroke="#6dbab2" stroke-width="0.45" stroke-opacity="0.8"/>
<line x1="1125.7" y1="689.9" x2="1145.2" y2="677.4" stroke="#6dbab2" stroke-width="0.45" stroke-opacity="0.8"/>
<line x1="1128.1" y1="691.2" x2="1147.5" y2="678.7" stroke="#6dbab2" stroke-width="0.45" stroke-opacity="0.8"/>
<polygon points="1131.6,693.2 1151,680.6 1165.2,688.5 1146,701.3" fill="#0a6c65" stroke="#f0f4f3" stroke-width="1.5" stroke-linejoin="round"/>
<line x1="1134.8" y1="691.1" x2="1149.2" y2="699.2" stroke="#6dbab2" stroke-width="0.45" stroke-opacity="0.8"/>
<line x1="1138.1" y1="689" x2="1152.4" y2="697" stroke="#6dbab2" stroke-width="0.45" stroke-opacity="0.8"/>
<line x1="1141.3" y1="686.9" x2="1155.6" y2="694.9" stroke="#6dbab2" stroke-width="0.45" stroke-opacity="0.8"/>
<line x1="1144.5" y1="684.8" x2="1158.8" y2="692.8" stroke="#6dbab2" stroke-width="0.45" stroke-opacity="0.8"/>
<line x1="1147.8" y1="682.7" x2="1162" y2="690.7" stroke="#6dbab2" stroke-width="0.45" stroke-opacity="0.8"/>
<line x1="1134" y1="694.6" x2="1153.4" y2="681.9" stroke="#6dbab2" stroke-width="0.45" stroke-opacity="0.8"/>
<line x1="1136.4" y1="695.9" x2="1155.7" y2="683.3" stroke="#6dbab2" stroke-width="0.45" stroke-opacity="0.8"/>
<line x1="1138.8" y1="697.2" x2="1158.1" y2="684.6" stroke="#6dbab2" stroke-width="0.45" stroke-opacity="0.8"/>
<line x1="1141.2" y1="698.6" x2="1160.5" y2="685.9" stroke="#6dbab2" stroke-width="0.45" stroke-opacity="0.8"/>
<line x1="1143.6" y1="699.9" x2="1162.9" y2="687.2" stroke="#6dbab2" stroke-width="0.45" stroke-opacity="0.8"/>
<path d="M1115.6,577.2 C1115.1,601.3 1111.7,617.5 1110.7,625.5 A11.4,4.8 0 0 0 1133.5,625.5 C1132.5,617.5 1130.5,601.3 1130,577.2 Z" fill="url(#chim)"/>
<ellipse cx="1122.8" cy="577.2" rx="7.2" ry="3" fill="#4b5152" />
<ellipse cx="1122.8" cy="577.4" rx="5.6" ry="2.2" fill="#3f4546" />
<path d="M1135.1,587.9 C1134.6,611.9 1131.1,627.9 1130.1,635.9 A11.8,5 0 0 0 1153.7,635.9 C1152.7,627.9 1150,611.9 1149.5,587.9 Z" fill="url(#chim)"/>
<ellipse cx="1142.3" cy="587.9" rx="7.2" ry="3" fill="#4b5152" />
<ellipse cx="1142.3" cy="588.1" rx="5.6" ry="2.2" fill="#3f4546" />
<polygon points="1008.2,719.5 1048.6,741.7 1048.6,744.2 1008.2,722" fill="#1e2224"/>
<ellipse cx="1014.8" cy="726.8" rx="2.6" ry="3.4" fill="#25292b" />
<ellipse cx="1021.2" cy="730.5" rx="2.6" ry="3.4" fill="#25292b" />
<polygon points="1006.8,702.1 1046.3,724.7 1048,742.1 1008.2,720.2" fill="#eef2f1" stroke="#eef2f1" stroke-width="0.4" stroke-linejoin="round"/>
<polygon points="1046.3,724.7 1064.4,715.1 1064.7,731.8 1048,742.1" fill="#b3bcbb"/>
<polygon points="1006.8,702.1 1024.6,691.8 1064.4,715.1 1046.3,724.7" fill="#d5dbda" stroke="#d5dbda" stroke-width="0.4" stroke-linejoin="round"/>
<polygon points="1050,727.7 1058.9,720.2 1063,717.4 1065.1,725.7 1065.8,753.1 1050.7,745.5" fill="#d5321f" stroke="#d5321f" stroke-width="0.6" stroke-linejoin="round"/>
<polygon points="1063,717.4 1070.6,722.2 1075.4,743.5 1074.7,749 1065.8,753.1 1063.7,727.7" fill="#e04a33" stroke="#e04a33" stroke-width="0.6" stroke-linejoin="round"/>
<polygon points="1050,725.7 1062.4,717 1071.3,722.5 1059.6,727.7" fill="#c52d1b" stroke="#c52d1b" stroke-width="0.6" stroke-linejoin="round"/>
<polygon points="1054.4,731.1 1060,736.6 1060,741.7 1054.4,738.7" fill="#d8f4f1"/>
<polygon points="1059.5,731.8 1071.3,725.2 1074,734.6 1062.6,741.2" fill="#d8f4f1" stroke="#d8f4f1" stroke-width="0.5" stroke-linejoin="round"/>
<polygon points="1065.8,744.2 1071.5,740.7 1072,745.5 1066.3,749" fill="#15181a"/>
<ellipse cx="1064.7" cy="749.4" rx="1.3" ry="0.9" fill="#f5f7f0" />
<ellipse cx="1073.7" cy="744.2" rx="1.3" ry="0.9" fill="#f5f7f0" />
<ellipse cx="1054.8" cy="749.7" rx="3.3" ry="3.9" fill="#202426" />
<ellipse cx="1054.5" cy="749.7" rx="1.4" ry="1.8" fill="#3c4245" />
<path d="M1069.6,746.2 q2.2,3.2 1.0,7.4 q-1.2,4.6 2.4,5.6 q4.6,0.8 4.8,-4.4 q0.2,-3.4 2.6,-3.8" fill="none" stroke="#2f3a48" stroke-width="1.15" stroke-linecap="round"/>
<polygon points="1076.7,763 1080.9,765.6 1088.8,760.9 1088.8,759.7 1080.9,764 1076.7,761.9" fill="#c3cbca"/>
<path d="M1078.2,762.7 L1080.9,764.2 L1087.2,760.6 L1087.2,746.3 Q1087.2,744.2 1085.2,742.8 Q1084.3,742.2 1083.3,743.1 L1078.8,746.7 Q1078.2,746.9 1078.2,748.6 Z" fill="#f7faf9" stroke="#b4bebd" stroke-width="0.45"/>
<path d="M1080.9,764.2 L1087.2,760.6 L1087.2,746.6 Q1087.2,744.9 1086.3,745 L1080.9,748.9 Z" fill="#c9d1d0"/>
<path d="M1078.2,762.7 L1080.9,764.2 L1080.9,748.9 L1079.1,746.8 Q1078.2,747 1078.2,748.6 Z" fill="#fbfdfc"/>
<path d="M1078.9,746.9 L1080.9,748.9 L1086.6,745 Q1087,744 1085.4,743.1 Q1084.6,742.4 1083.7,743.2 Z" fill="#f5f8f7"/>
<polygon points="1081.8,750.7 1086.3,748.1 1086.3,750.6 1081.8,753.2" fill="#1b8f85"/>
<polygon points="1084.6,753.5 1083,756.4 1084,756.3 1083.5,758.5 1085.1,755.4 1084.2,755.5" fill="#2aa79c"/>
<polygon points="978.7,736.2 1019.2,758.4 1019.2,760.9 978.7,738.7" fill="#1e2224"/>
<ellipse cx="985.3" cy="743.5" rx="2.6" ry="3.4" fill="#25292b" />
<ellipse cx="991.7" cy="747.2" rx="2.6" ry="3.4" fill="#25292b" />
<polygon points="977.3,718.8 1016.8,741.4 1018.5,758.8 978.7,736.9" fill="#eef2f1" stroke="#eef2f1" stroke-width="0.4" stroke-linejoin="round"/>
<polygon points="1016.8,741.4 1034.9,731.8 1035.2,748.6 1018.5,758.8" fill="#b3bcbb"/>
<polygon points="977.3,718.8 995.2,708.5 1034.9,731.8 1016.8,741.4" fill="#d5dbda" stroke="#d5dbda" stroke-width="0.4" stroke-linejoin="round"/>
<polygon points="1020.5,744.4 1029.4,736.9 1033.6,734.2 1035.6,742.4 1036.3,769.8 1021.2,762.3" fill="#0c7a71" stroke="#0c7a71" stroke-width="0.6" stroke-linejoin="round"/>
<polygon points="1033.6,734.2 1041.1,739 1045.9,760.2 1045.2,765.7 1036.3,769.8 1034.2,744.4" fill="#13897f" stroke="#13897f" stroke-width="0.6" stroke-linejoin="round"/>
<polygon points="1020.5,742.4 1032.9,733.8 1041.8,739.2 1030.1,744.4" fill="#066a62" stroke="#066a62" stroke-width="0.6" stroke-linejoin="round"/>
<polygon points="1024.9,747.9 1030.5,753.4 1030.5,758.4 1024.9,755.4" fill="#d8f4f1"/>
<polygon points="1030,748.6 1041.8,742 1044.5,751.3 1033.1,757.9" fill="#d8f4f1" stroke="#d8f4f1" stroke-width="0.5" stroke-linejoin="round"/>
<polygon points="1036.3,760.9 1042.1,757.5 1042.5,762.3 1036.8,765.7" fill="#15181a"/>
<ellipse cx="1035.2" cy="766.1" rx="1.3" ry="0.9" fill="#f5f7f0" />
<ellipse cx="1044.3" cy="760.9" rx="1.3" ry="0.9" fill="#f5f7f0" />
<ellipse cx="1025.3" cy="766.4" rx="3.3" ry="3.9" fill="#202426" />
<ellipse cx="1025.1" cy="766.4" rx="1.4" ry="1.8" fill="#3c4245" />
<path d="M1039.8,762.4 q2.2,3.2 1.2,7.6 q-1.0,5.0 3.0,6.6 q4.6,1.0 5.2,-4.2 q0.2,-3.6 2.8,-4.2" fill="none" stroke="#2f3a48" stroke-width="1.15" stroke-linecap="round"/>
<polygon points="1050.1,778.8 1054.3,781.4 1062.2,776.7 1062.2,775.5 1054.3,779.8 1050.1,777.7" fill="#c3cbca"/>
<path d="M1051.6,778.5 L1054.3,780 L1060.6,776.4 L1060.6,762.1 Q1060.6,760 1058.6,758.6 Q1057.7,758 1056.7,758.9 L1052.2,762.5 Q1051.6,762.7 1051.6,764.4 Z" fill="#f7faf9" stroke="#b4bebd" stroke-width="0.45"/>
<path d="M1054.3,780 L1060.6,776.4 L1060.6,762.4 Q1060.6,760.7 1059.7,760.8 L1054.3,764.7 Z" fill="#c9d1d0"/>
<path d="M1051.6,778.5 L1054.3,780 L1054.3,764.7 L1052.5,762.6 Q1051.6,762.8 1051.6,764.4 Z" fill="#fbfdfc"/>
<path d="M1052.3,762.7 L1054.3,764.7 L1060,760.8 Q1060.4,759.8 1058.8,758.9 Q1058,758.2 1057.1,759 Z" fill="#f5f8f7"/>
<polygon points="1055.2,766.5 1059.7,763.9 1059.7,766.4 1055.2,769" fill="#1b8f85"/>
<polygon points="1058,769.3 1056.4,772.2 1057.4,772.1 1056.8,774.3 1058.5,771.2 1057.6,771.3" fill="#2aa79c"/>
<polygon points="1018,798.1 1022.2,800.7 1030.1,796 1030.1,794.8 1022.2,799.1 1018,797" fill="#c3cbca"/>
<path d="M1019.5,797.8 L1022.2,799.3 L1028.5,795.7 L1028.5,781.4 Q1028.5,779.3 1026.5,777.9 Q1025.6,777.3 1024.6,778.2 L1020.1,781.8 Q1019.5,782 1019.5,783.7 Z" fill="#f7faf9" stroke="#b4bebd" stroke-width="0.45"/>
<path d="M1022.2,799.3 L1028.5,795.7 L1028.5,781.7 Q1028.5,780 1027.6,780.1 L1022.2,784 Z" fill="#c9d1d0"/>
<path d="M1019.5,797.8 L1022.2,799.3 L1022.2,784 L1020.4,781.9 Q1019.5,782.1 1019.5,783.7 Z" fill="#fbfdfc"/>
<path d="M1020.2,782 L1022.2,784 L1027.9,780.1 Q1028.3,779.1 1026.7,778.2 Q1025.9,777.5 1025,778.3 Z" fill="#f5f8f7"/>
<polygon points="1023.1,785.8 1027.6,783.2 1027.6,785.7 1023.1,788.3" fill="#1b8f85"/>
<polygon points="1025.9,788.6 1024.3,791.5 1025.3,791.4 1024.8,793.6 1026.4,790.5 1025.5,790.6" fill="#2aa79c"/>
<path d="M1019.9,788.3 q-3.1,0.4 -3.3,4.7 q0.1,4.1 2.2,5.3" fill="none" stroke="#3a4246" stroke-width="0.561"/>
<path d="M1019.4,789.9 q-1.6,1 -1.2,3.5 q0.5,2.2 -0.2,3.5" fill="none" stroke="#3a4246" stroke-width="0.51"/>
<path d="M603.3,679.7 L607.5,679.7 L608.8,784.6 Q605.4,786.2 602,784.6 Z" fill="url(#twr)"/>
<polygon points="599.9,676.5 610.6,678.9 610.6,683.3 599.9,681.1" fill="#a9b3b2"/>
<path d="M611.8,679.8 C616,674.4 613.1,647.8 607.2,621.5 L605.8,621.6 C607.1,645.3 607.4,666.1 609.2,679.9 Z" fill="url(#bld)" stroke="#bcc6c5" stroke-width="0.4"/>
<path d="M611.8,679.8 C616,674.4 613.2,650.8 608.4,627.3" fill="none" stroke="#17786f" stroke-width="1.15" stroke-linecap="round"/>
<path d="M611.6,681.8 C614.4,688.1 639.4,698.3 665.7,705.9 L666.3,704.6 C644.6,694.2 625.9,684.5 612.7,679.4 Z" fill="url(#bld)" stroke="#bcc6c5" stroke-width="0.4"/>
<path d="M611.6,681.8 C614.4,688.1 636.7,697 659.9,704.1" fill="none" stroke="#17786f" stroke-width="1.15" stroke-linecap="round"/>
<path d="M609.9,680.6 C603.2,680 583.1,696.9 564.9,716.1 L565.8,717.2 C584.4,703.3 601.2,691.7 611.5,682.7 Z" fill="url(#bld)" stroke="#bcc6c5" stroke-width="0.4"/>
<path d="M609.9,680.6 C603.2,680 585.5,695.2 569,711.9" fill="none" stroke="#17786f" stroke-width="1.15" stroke-linecap="round"/>
<circle cx="611.1" cy="680.7" r="1.9" fill="#e3e9e8" />
<path d="M540,718.7 L544.2,718.7 L545.5,821.6 Q542.1,823.2 538.7,821.6 Z" fill="url(#twr)"/>
<polygon points="536.6,715.5 545.7,717.9 545.7,722.3 536.6,720.1" fill="#a9b3b2"/>
<path d="M545.8,718.6 C543.5,712.2 519.9,701 494.8,692.4 L494.2,693.6 C514.6,704.8 532.1,715.3 544.6,720.9 Z" fill="url(#bld)" stroke="#bcc6c5" stroke-width="0.4"/>
<path d="M545.8,718.6 C543.5,712.2 522.4,702.4 500.4,694.3" fill="none" stroke="#17786f" stroke-width="1.15" stroke-linecap="round"/>
<path d="M547.4,719.9 C554.1,721.4 577.1,707 598.6,690 L598,688.8 C576.8,700.4 558,709.9 546.1,717.7 Z" fill="url(#bld)" stroke="#bcc6c5" stroke-width="0.4"/>
<path d="M547.4,719.9 C554.1,721.4 574.4,708.4 593.8,693.7" fill="none" stroke="#17786f" stroke-width="1.15" stroke-linecap="round"/>
<path d="M545.4,720.6 C541,725.8 542.7,752.4 547.3,778.9 L548.7,778.9 C548.6,755.2 549.2,734.4 548,720.5 Z" fill="url(#bld)" stroke="#bcc6c5" stroke-width="0.4"/>
<path d="M545.4,720.6 C541,725.8 542.7,749.4 546.3,773" fill="none" stroke="#17786f" stroke-width="1.15" stroke-linecap="round"/>
<circle cx="546.2" cy="719.7" r="1.9" fill="#e3e9e8" />
<path d="M477,752.5 L481.2,752.5 L482.5,855.8 Q479.1,857.4 475.7,855.8 Z" fill="url(#twr)"/>
<polygon points="473.6,749.3 482.4,751.7 482.4,756.1 473.6,753.9" fill="#a9b3b2"/>
<path d="M482.2,752.5 C478.3,747 452.1,742.4 425.4,740.7 L425.1,742.1 C448,747.5 468,753 481.7,755.1 Z" fill="url(#bld)" stroke="#bcc6c5" stroke-width="0.4"/>
<path d="M482.2,752.5 C478.3,747 455,743.1 431.3,741.2" fill="none" stroke="#17786f" stroke-width="1.15" stroke-linecap="round"/>
<path d="M484.1,753.3 C490.9,752.5 507.5,731.7 521.9,708.9 L520.8,708 C505,725.6 490.6,740.6 482.1,751.7 Z" fill="url(#bld)" stroke="#bcc6c5" stroke-width="0.4"/>
<path d="M484.1,753.3 C490.9,752.5 505.5,733.9 518.6,713.9" fill="none" stroke="#17786f" stroke-width="1.15" stroke-linecap="round"/>
<path d="M482.4,754.6 C479.6,760.8 488.6,785.9 500.4,810.1 L501.8,809.6 C495,786.9 489.9,766.8 484.9,753.8 Z" fill="url(#bld)" stroke="#bcc6c5" stroke-width="0.4"/>
<path d="M482.4,754.6 C479.6,760.8 487.8,783 497.9,804.7" fill="none" stroke="#17786f" stroke-width="1.15" stroke-linecap="round"/>
<circle cx="482.9" cy="753.5" r="1.9" fill="#e3e9e8" />
<clipPath id="c3"><path d="M698.7,751.2 Q698.7,746.2 703,743.7 L755.7,713 Q760,710.5 764.3,713 L811.8,740.7 Q816.1,743.2 816.1,748.2 L816.1,939.1 Q816.1,944.1 811.8,946.7 L759.1,977.2 Q754.8,979.7 750.5,977.2 L703,949.7 Q698.7,947.1 698.7,942.1 Z"/></clipPath><g clip-path="url(#c3)">
<polygon points="700,946.5 754.8,978.1 754.8,778.1 700,746.5" fill="#2f3233" stroke="#2f3233" stroke-width="4" stroke-linejoin="round"/>
<polygon points="754.8,978.1 814.8,943.5 814.8,743.5 754.8,778.1" fill="#1f2223" stroke="#1f2223" stroke-width="4" stroke-linejoin="round"/>
<polygon points="753.6,981.1 756,981.1 756,778.1 753.6,778.1" fill="#292c2d"/>
<polygon points="700,746.5 754.8,778.1 814.8,743.5 760,711.9" fill="#3b4041" stroke="#3b4041" stroke-width="4" stroke-linejoin="round"/>
</g>
<polygon points="710.5,746.5 760,717.9 804.3,743.5 754.8,772.1" fill="#303334" stroke="#303334" stroke-width="1.2" stroke-linejoin="round"/>
<polygon points="710.5,746.5 760,717.9 760,722 714.1,748.5" fill="#687171" stroke="#687171" stroke-width="0.8" stroke-linejoin="round"/>
<polygon points="760,717.9 804.3,743.5 800.7,745.5 760,722" fill="#222526" stroke="#222526" stroke-width="0.8" stroke-linejoin="round"/>
<polygon points="705.5,764.8 713.8,769.6 713.8,779 705.5,774.2" fill="#fdf86a" stroke="#0d1130" stroke-width="0.35" stroke-opacity="0.8"/>
<polygon points="705.5,780.8 713.8,785.6 713.8,795 705.5,790.2" fill="#fdf86a" stroke="#0d1130" stroke-width="0.35" stroke-opacity="0.8"/>
<polygon points="705.5,796.9 713.8,801.7 713.8,811.1 705.5,806.3" fill="#fdf86a" stroke="#0d1130" stroke-width="0.35" stroke-opacity="0.8"/>
<polygon points="705.5,812.9 713.8,817.7 713.8,827.1 705.5,822.3" fill="#fdf86a" stroke="#0d1130" stroke-width="0.35" stroke-opacity="0.8"/>
<polygon points="705.5,829 713.8,833.8 713.8,843.2 705.5,838.4" fill="#fdf86a" stroke="#0d1130" stroke-width="0.35" stroke-opacity="0.8"/>
<polygon points="705.5,845 713.8,849.8 713.8,859.2 705.5,854.4" fill="#fdf86a" stroke="#0d1130" stroke-width="0.35" stroke-opacity="0.8"/>
<polygon points="705.5,861.1 713.8,865.9 713.8,875.3 705.5,870.5" fill="#fdf86a" stroke="#0d1130" stroke-width="0.35" stroke-opacity="0.8"/>
<polygon points="705.5,877.1 713.8,881.9 713.8,891.3 705.5,886.5" fill="#fdf86a" stroke="#0d1130" stroke-width="0.35" stroke-opacity="0.8"/>
<polygon points="716.6,771.2 724.9,776 724.9,785.4 716.6,780.6" fill="#fdf86a" stroke="#0d1130" stroke-width="0.35" stroke-opacity="0.8"/>
<polygon points="716.6,787.2 724.9,792 724.9,801.4 716.6,796.6" fill="#fdf86a" stroke="#0d1130" stroke-width="0.35" stroke-opacity="0.8"/>
<polygon points="716.6,803.3 724.9,808.1 724.9,817.5 716.6,812.7" fill="#fdf86a" stroke="#0d1130" stroke-width="0.35" stroke-opacity="0.8"/>
<polygon points="716.6,819.3 724.9,824.1 724.9,833.5 716.6,828.7" fill="#fdf86a" stroke="#0d1130" stroke-width="0.35" stroke-opacity="0.8"/>
<polygon points="716.6,835.4 724.9,840.2 724.9,849.6 716.6,844.8" fill="#fdf86a" stroke="#0d1130" stroke-width="0.35" stroke-opacity="0.8"/>
<polygon points="716.6,851.4 724.9,856.2 724.9,865.6 716.6,860.8" fill="#fdf86a" stroke="#0d1130" stroke-width="0.35" stroke-opacity="0.8"/>
<polygon points="716.6,867.5 724.9,872.3 724.9,881.7 716.6,876.9" fill="#fdf86a" stroke="#0d1130" stroke-width="0.35" stroke-opacity="0.8"/>
<polygon points="716.6,883.5 724.9,888.3 724.9,897.7 716.6,892.9" fill="#fdf86a" stroke="#0d1130" stroke-width="0.35" stroke-opacity="0.8"/>
<polygon points="727.6,777.6 735.9,782.4 735.9,791.8 727.6,787" fill="#fdf86a" stroke="#0d1130" stroke-width="0.35" stroke-opacity="0.8"/>
<polygon points="727.6,793.6 735.9,798.4 735.9,807.8 727.6,803" fill="#fdf86a" stroke="#0d1130" stroke-width="0.35" stroke-opacity="0.8"/>
<polygon points="727.6,809.7 735.9,814.5 735.9,823.9 727.6,819.1" fill="#fdf86a" stroke="#0d1130" stroke-width="0.35" stroke-opacity="0.8"/>
<polygon points="727.6,825.7 735.9,830.5 735.9,839.9 727.6,835.1" fill="#fdf86a" stroke="#0d1130" stroke-width="0.35" stroke-opacity="0.8"/>
<polygon points="727.6,841.8 735.9,846.6 735.9,856 727.6,851.2" fill="#fdf86a" stroke="#0d1130" stroke-width="0.35" stroke-opacity="0.8"/>
<polygon points="727.6,857.8 735.9,862.6 735.9,872 727.6,867.2" fill="#fdf86a" stroke="#0d1130" stroke-width="0.35" stroke-opacity="0.8"/>
<polygon points="727.6,873.9 735.9,878.7 735.9,888.1 727.6,883.3" fill="#fdf86a" stroke="#0d1130" stroke-width="0.35" stroke-opacity="0.8"/>
<polygon points="727.6,889.9 735.9,894.7 735.9,904.1 727.6,899.3" fill="#fdf86a" stroke="#0d1130" stroke-width="0.35" stroke-opacity="0.8"/>
<polygon points="738.7,784 747,788.8 747,798.2 738.7,793.4" fill="#fdf86a" stroke="#0d1130" stroke-width="0.35" stroke-opacity="0.8"/>
<polygon points="738.7,800 747,804.8 747,814.2 738.7,809.4" fill="#fdf86a" stroke="#0d1130" stroke-width="0.35" stroke-opacity="0.8"/>
<polygon points="738.7,816.1 747,820.9 747,830.3 738.7,825.5" fill="#fdf86a" stroke="#0d1130" stroke-width="0.35" stroke-opacity="0.8"/>
<polygon points="738.7,832.1 747,836.9 747,846.3 738.7,841.5" fill="#fdf86a" stroke="#0d1130" stroke-width="0.35" stroke-opacity="0.8"/>
<polygon points="738.7,848.2 747,853 747,862.4 738.7,857.6" fill="#fdf86a" stroke="#0d1130" stroke-width="0.35" stroke-opacity="0.8"/>
<polygon points="738.7,864.2 747,869 747,878.4 738.7,873.6" fill="#fdf86a" stroke="#0d1130" stroke-width="0.35" stroke-opacity="0.8"/>
<polygon points="738.7,880.3 747,885.1 747,894.5 738.7,889.7" fill="#fdf86a" stroke="#0d1130" stroke-width="0.35" stroke-opacity="0.8"/>
<polygon points="738.7,896.3 747,901.1 747,910.5 738.7,905.7" fill="#fdf86a" stroke="#0d1130" stroke-width="0.35" stroke-opacity="0.8"/>
<polygon points="765.6,786.4 773.9,781.6 773.9,791 765.6,795.8" fill="#e9e204" stroke="#0d1130" stroke-width="0.35" stroke-opacity="0.8"/>
<polygon points="765.6,802.4 773.9,797.7 773.9,807.1 765.6,811.8" fill="#e9e204" stroke="#0d1130" stroke-width="0.35" stroke-opacity="0.8"/>
<polygon points="765.6,818.5 773.9,813.7 773.9,823.1 765.6,827.9" fill="#e9e204" stroke="#0d1130" stroke-width="0.35" stroke-opacity="0.8"/>
<polygon points="765.6,834.5 773.9,829.8 773.9,839.2 765.6,843.9" fill="#e9e204" stroke="#0d1130" stroke-width="0.35" stroke-opacity="0.8"/>
<polygon points="765.6,850.6 773.9,845.8 773.9,855.2 765.6,860" fill="#e9e204" stroke="#0d1130" stroke-width="0.35" stroke-opacity="0.8"/>
<polygon points="765.6,866.6 773.9,861.9 773.9,871.3 765.6,876" fill="#e9e204" stroke="#0d1130" stroke-width="0.35" stroke-opacity="0.8"/>
<polygon points="765.6,882.7 773.9,877.9 773.9,887.3 765.6,892.1" fill="#e9e204" stroke="#0d1130" stroke-width="0.35" stroke-opacity="0.8"/>
<polygon points="765.6,898.8 773.9,894 773.9,903.4 765.6,908.1" fill="#e9e204" stroke="#0d1130" stroke-width="0.35" stroke-opacity="0.8"/>
<polygon points="776.7,780 785,775.2 785,784.6 776.7,789.4" fill="#e9e204" stroke="#0d1130" stroke-width="0.35" stroke-opacity="0.8"/>
<polygon points="776.7,796.1 785,791.3 785,800.7 776.7,805.5" fill="#e9e204" stroke="#0d1130" stroke-width="0.35" stroke-opacity="0.8"/>
<polygon points="776.7,812.1 785,807.3 785,816.7 776.7,821.5" fill="#e9e204" stroke="#0d1130" stroke-width="0.35" stroke-opacity="0.8"/>
<polygon points="776.7,828.2 785,823.4 785,832.8 776.7,837.6" fill="#e9e204" stroke="#0d1130" stroke-width="0.35" stroke-opacity="0.8"/>
<polygon points="776.7,844.2 785,839.4 785,848.8 776.7,853.6" fill="#e9e204" stroke="#0d1130" stroke-width="0.35" stroke-opacity="0.8"/>
<polygon points="776.7,860.3 785,855.5 785,864.9 776.7,869.7" fill="#e9e204" stroke="#0d1130" stroke-width="0.35" stroke-opacity="0.8"/>
<polygon points="776.7,876.3 785,871.5 785,880.9 776.7,885.7" fill="#e9e204" stroke="#0d1130" stroke-width="0.35" stroke-opacity="0.8"/>
<polygon points="776.7,892.4 785,887.6 785,897 776.7,901.8" fill="#e9e204" stroke="#0d1130" stroke-width="0.35" stroke-opacity="0.8"/>
<polygon points="787.7,773.6 796,768.8 796,778.2 787.7,783" fill="#e9e204" stroke="#0d1130" stroke-width="0.35" stroke-opacity="0.8"/>
<polygon points="787.7,789.7 796,784.9 796,794.3 787.7,799.1" fill="#e9e204" stroke="#0d1130" stroke-width="0.35" stroke-opacity="0.8"/>
<polygon points="787.7,805.7 796,800.9 796,810.3 787.7,815.1" fill="#e9e204" stroke="#0d1130" stroke-width="0.35" stroke-opacity="0.8"/>
<polygon points="787.7,821.8 796,817 796,826.4 787.7,831.2" fill="#e9e204" stroke="#0d1130" stroke-width="0.35" stroke-opacity="0.8"/>
<polygon points="787.7,837.8 796,833 796,842.4 787.7,847.2" fill="#e9e204" stroke="#0d1130" stroke-width="0.35" stroke-opacity="0.8"/>
<polygon points="787.7,853.9 796,849.1 796,858.5 787.7,863.3" fill="#e9e204" stroke="#0d1130" stroke-width="0.35" stroke-opacity="0.8"/>
<polygon points="787.7,869.9 796,865.1 796,874.5 787.7,879.3" fill="#e9e204" stroke="#0d1130" stroke-width="0.35" stroke-opacity="0.8"/>
<polygon points="787.7,886 796,881.2 796,890.6 787.7,895.4" fill="#e9e204" stroke="#0d1130" stroke-width="0.35" stroke-opacity="0.8"/>
<polygon points="798.8,767.2 807.1,762.4 807.1,771.8 798.8,776.6" fill="#e9e204" stroke="#0d1130" stroke-width="0.35" stroke-opacity="0.8"/>
<polygon points="798.8,783.3 807.1,778.5 807.1,787.9 798.8,792.7" fill="#e9e204" stroke="#0d1130" stroke-width="0.35" stroke-opacity="0.8"/>
<polygon points="798.8,799.3 807.1,794.5 807.1,803.9 798.8,808.7" fill="#e9e204" stroke="#0d1130" stroke-width="0.35" stroke-opacity="0.8"/>
<polygon points="798.8,815.4 807.1,810.6 807.1,820 798.8,824.8" fill="#e9e204" stroke="#0d1130" stroke-width="0.35" stroke-opacity="0.8"/>
<polygon points="798.8,831.4 807.1,826.6 807.1,836 798.8,840.8" fill="#e9e204" stroke="#0d1130" stroke-width="0.35" stroke-opacity="0.8"/>
<polygon points="798.8,847.5 807.1,842.7 807.1,852.1 798.8,856.9" fill="#e9e204" stroke="#0d1130" stroke-width="0.35" stroke-opacity="0.8"/>
<polygon points="798.8,863.5 807.1,858.7 807.1,868.1 798.8,872.9" fill="#e9e204" stroke="#0d1130" stroke-width="0.35" stroke-opacity="0.8"/>
<polygon points="798.8,879.6 807.1,874.8 807.1,884.2 798.8,889" fill="#e9e204" stroke="#0d1130" stroke-width="0.35" stroke-opacity="0.8"/>
<polygon points="718.8,884 731.3,891.2 731.3,911.2 718.8,904" fill="#e9f7f5"/>
<polygon points="720,886 730.1,891.8 730.1,909.8 720,904" fill="#bfe8e5"/>
<path d="M905.6,828 L908.4,828 L909.6,849.5 Q907,850.7 904.4,849.5 Z" fill="url(#twr)"/>
<path d="M843.6,838 L846.4,838 L847.6,856.5 Q845,857.7 842.4,856.5 Z" fill="url(#twr)"/>
<path d="M868.6,848 L871.4,848 L872.6,871.7 Q870,872.9 867.4,871.7 Z" fill="url(#twr)"/>
<polygon points="853.9,805.6 887.1,786.8 909.3,800.1 876,818.5" fill="#0a6c65" stroke="#f0f4f3" stroke-width="1.5" stroke-linejoin="round"/>
<line x1="858" y1="803.2" x2="880.2" y2="816.2" stroke="#6dbab2" stroke-width="0.45" stroke-opacity="0.8"/>
<line x1="862.2" y1="800.9" x2="884.3" y2="813.9" stroke="#6dbab2" stroke-width="0.45" stroke-opacity="0.8"/>
<line x1="866.4" y1="798.5" x2="888.5" y2="811.6" stroke="#6dbab2" stroke-width="0.45" stroke-opacity="0.8"/>
<line x1="870.5" y1="796.2" x2="892.6" y2="809.3" stroke="#6dbab2" stroke-width="0.45" stroke-opacity="0.8"/>
<line x1="874.6" y1="793.9" x2="896.8" y2="807" stroke="#6dbab2" stroke-width="0.45" stroke-opacity="0.8"/>
<line x1="878.8" y1="791.5" x2="901" y2="804.7" stroke="#6dbab2" stroke-width="0.45" stroke-opacity="0.8"/>
<line x1="883" y1="789.1" x2="905.1" y2="802.4" stroke="#6dbab2" stroke-width="0.45" stroke-opacity="0.8"/>
<line x1="858.3" y1="808.2" x2="891.5" y2="789.5" stroke="#6dbab2" stroke-width="0.45" stroke-opacity="0.8"/>
<line x1="862.7" y1="810.8" x2="896" y2="792.1" stroke="#6dbab2" stroke-width="0.45" stroke-opacity="0.8"/>
<line x1="867.2" y1="813.3" x2="900.4" y2="794.8" stroke="#6dbab2" stroke-width="0.45" stroke-opacity="0.8"/>
<line x1="871.6" y1="815.9" x2="904.9" y2="797.4" stroke="#6dbab2" stroke-width="0.45" stroke-opacity="0.8"/>
<polygon points="880.5,820.7 912.6,801.9 935.9,815.6 901.5,834" fill="#0a6c65" stroke="#f0f4f3" stroke-width="1.5" stroke-linejoin="round"/>
<line x1="884.5" y1="818.4" x2="905.8" y2="831.7" stroke="#6dbab2" stroke-width="0.45" stroke-opacity="0.8"/>
<line x1="888.5" y1="816" x2="910.1" y2="829.4" stroke="#6dbab2" stroke-width="0.45" stroke-opacity="0.8"/>
<line x1="892.5" y1="813.6" x2="914.4" y2="827.1" stroke="#6dbab2" stroke-width="0.45" stroke-opacity="0.8"/>
<line x1="896.5" y1="811.3" x2="918.7" y2="824.8" stroke="#6dbab2" stroke-width="0.45" stroke-opacity="0.8"/>
<line x1="900.6" y1="809" x2="923" y2="822.5" stroke="#6dbab2" stroke-width="0.45" stroke-opacity="0.8"/>
<line x1="904.6" y1="806.6" x2="927.3" y2="820.2" stroke="#6dbab2" stroke-width="0.45" stroke-opacity="0.8"/>
<line x1="908.6" y1="804.2" x2="931.6" y2="817.9" stroke="#6dbab2" stroke-width="0.45" stroke-opacity="0.8"/>
<line x1="884.7" y1="823.4" x2="917.3" y2="804.6" stroke="#6dbab2" stroke-width="0.45" stroke-opacity="0.8"/>
<line x1="888.9" y1="826" x2="921.9" y2="807.4" stroke="#6dbab2" stroke-width="0.45" stroke-opacity="0.8"/>
<line x1="893.1" y1="828.7" x2="926.6" y2="810.1" stroke="#6dbab2" stroke-width="0.45" stroke-opacity="0.8"/>
<line x1="897.3" y1="831.3" x2="931.2" y2="812.9" stroke="#6dbab2" stroke-width="0.45" stroke-opacity="0.8"/>
<polygon points="817.4,826.7 850.6,808.5 872.3,821.1 840.6,838.9" fill="#0a6c65" stroke="#f0f4f3" stroke-width="1.5" stroke-linejoin="round"/>
<line x1="821.5" y1="824.4" x2="844.6" y2="836.7" stroke="#6dbab2" stroke-width="0.45" stroke-opacity="0.8"/>
<line x1="825.7" y1="822.2" x2="848.5" y2="834.5" stroke="#6dbab2" stroke-width="0.45" stroke-opacity="0.8"/>
<line x1="829.9" y1="819.9" x2="852.5" y2="832.2" stroke="#6dbab2" stroke-width="0.45" stroke-opacity="0.8"/>
<line x1="834" y1="817.6" x2="856.5" y2="830" stroke="#6dbab2" stroke-width="0.45" stroke-opacity="0.8"/>
<line x1="838.1" y1="815.3" x2="860.4" y2="827.8" stroke="#6dbab2" stroke-width="0.45" stroke-opacity="0.8"/>
<line x1="842.3" y1="813" x2="864.4" y2="825.5" stroke="#6dbab2" stroke-width="0.45" stroke-opacity="0.8"/>
<line x1="846.5" y1="810.8" x2="868.3" y2="823.3" stroke="#6dbab2" stroke-width="0.45" stroke-opacity="0.8"/>
<line x1="822" y1="829.1" x2="854.9" y2="811" stroke="#6dbab2" stroke-width="0.45" stroke-opacity="0.8"/>
<line x1="826.7" y1="831.6" x2="859.3" y2="813.5" stroke="#6dbab2" stroke-width="0.45" stroke-opacity="0.8"/>
<line x1="831.3" y1="834" x2="863.6" y2="816.1" stroke="#6dbab2" stroke-width="0.45" stroke-opacity="0.8"/>
<line x1="836" y1="836.5" x2="868" y2="818.6" stroke="#6dbab2" stroke-width="0.45" stroke-opacity="0.8"/>
<polygon points="843.9,841.7 876,823.6 898.2,836.2 868.3,854.4" fill="#0a6c65" stroke="#f0f4f3" stroke-width="1.5" stroke-linejoin="round"/>
<line x1="847.9" y1="839.4" x2="872" y2="852.1" stroke="#6dbab2" stroke-width="0.45" stroke-opacity="0.8"/>
<line x1="851.9" y1="837.2" x2="875.8" y2="849.9" stroke="#6dbab2" stroke-width="0.45" stroke-opacity="0.8"/>
<line x1="855.9" y1="834.9" x2="879.5" y2="847.6" stroke="#6dbab2" stroke-width="0.45" stroke-opacity="0.8"/>
<line x1="860" y1="832.7" x2="883.2" y2="845.3" stroke="#6dbab2" stroke-width="0.45" stroke-opacity="0.8"/>
<line x1="864" y1="830.4" x2="887" y2="843" stroke="#6dbab2" stroke-width="0.45" stroke-opacity="0.8"/>
<line x1="868" y1="828.1" x2="890.7" y2="840.8" stroke="#6dbab2" stroke-width="0.45" stroke-opacity="0.8"/>
<line x1="872" y1="825.9" x2="894.5" y2="838.5" stroke="#6dbab2" stroke-width="0.45" stroke-opacity="0.8"/>
<line x1="848.8" y1="844.2" x2="880.4" y2="826.1" stroke="#6dbab2" stroke-width="0.45" stroke-opacity="0.8"/>
<line x1="853.7" y1="846.8" x2="884.9" y2="828.6" stroke="#6dbab2" stroke-width="0.45" stroke-opacity="0.8"/>
<line x1="858.5" y1="849.3" x2="889.3" y2="831.2" stroke="#6dbab2" stroke-width="0.45" stroke-opacity="0.8"/>
<line x1="863.4" y1="851.9" x2="893.8" y2="833.7" stroke="#6dbab2" stroke-width="0.45" stroke-opacity="0.8"/>
<polygon points="529.7,861.3 533.9,861.3 533.9,870.5 529.7,870.5" fill="#523a2e"/>
<polygon points="531.8,861.3 533.9,861.3 533.9,870.5 531.8,870.5" fill="#46312a"/>
<path d="M531.8,852 L539.7,862.5 Q531.8,865.5 523.9,862.5 Z" fill="#04695f"/>
<path d="M531.8,847.8 L538.1,857.5 Q531.8,860.5 525.5,857.5 Z" fill="#0e7b72"/>
<path d="M531.8,843.9 L536.4,852 Q531.8,855 527.2,852 Z" fill="#178c82"/>
<polygon points="516.5,869.5 521.5,869.5 521.5,880.2 516.5,880.2" fill="#523a2e"/>
<polygon points="519,869.5 521.5,869.5 521.5,880.2 519,880.2" fill="#46312a"/>
<path d="M519,857.3 L530.1,870.7 Q519,873.7 507.9,870.7 Z" fill="#04695f"/>
<path d="M519,852 L527.9,864.4 Q519,867.4 510.1,864.4 Z" fill="#0e7b72"/>
<path d="M519,847.1 L525.4,857.5 Q519,860.5 512.6,857.5 Z" fill="#178c82"/>
<path d="M550.3,857.6 L554.3,857.6 L554.3,876.5 Q552.3,878.3 550.3,876.5 Z" fill="#523a2e"/>
<path d="M552.7,857.6 L554.3,857.6 L554.3,876.5 Q553.3,877.9 552.7,877.5 Z" fill="#46312a"/>
<clipPath id="rt3"><ellipse cx="552.3" cy="857.6" rx="11" ry="9.5"/></clipPath>
<ellipse cx="552.3" cy="857.6" rx="11" ry="9.5" fill="#076a61" />
<g clip-path="url(#rt3)">
<ellipse cx="552.3" cy="852.5" rx="11.2" ry="9.5" fill="#0c756c" />
<ellipse cx="552.3" cy="847.3" rx="11.2" ry="9.5" fill="#12817a" />
<ellipse cx="552.3" cy="843.4" rx="11.2" ry="9.5" fill="#1d8b80" />
</g>
<path d="M639.1,769.9 L643.3,769.9 L644.6,874.8 Q641.2,876.4 637.8,874.8 Z" fill="url(#twr)"/>
<polygon points="635.7,766.7 646.4,769.1 646.4,773.5 635.7,771.3" fill="#a9b3b2"/>
<path d="M647.4,769.8 C650.5,763.8 642.2,738.7 631.2,714.5 L629.8,714.8 C635.8,737.5 640.4,757.5 644.9,770.6 Z" fill="url(#bld)" stroke="#bcc6c5" stroke-width="0.4"/>
<path d="M647.4,769.8 C650.5,763.8 642.9,741.6 633.6,719.9" fill="none" stroke="#17786f" stroke-width="1.15" stroke-linecap="round"/>
<path d="M647.6,771.9 C651.4,777.6 677.5,783 704.4,785.7 L704.7,784.3 C681.8,778.1 661.9,772 648.2,769.4 Z" fill="url(#bld)" stroke="#bcc6c5" stroke-width="0.4"/>
<path d="M647.6,771.9 C651.4,777.6 674.7,782.2 698.4,785" fill="none" stroke="#17786f" stroke-width="1.15" stroke-linecap="round"/>
<path d="M645.7,771.1 C638.9,772 622.6,793.3 608.5,816.5 L609.6,817.4 C625.2,799.3 639.4,784 647.7,772.7 Z" fill="url(#bld)" stroke="#bcc6c5" stroke-width="0.4"/>
<path d="M645.7,771.1 C638.9,772 624.6,791.1 611.7,811.4" fill="none" stroke="#17786f" stroke-width="1.15" stroke-linecap="round"/>
<circle cx="646.9" cy="770.9" r="1.9" fill="#e3e9e8" />
<path d="M576.4,806.3 L580.6,806.3 L581.9,911 Q578.5,912.6 575.1,911 Z" fill="url(#twr)"/>
<polygon points="573,803.1 582.1,805.5 582.1,809.9 573,807.7" fill="#a9b3b2"/>
<path d="M583.6,806.7 C589.6,803.5 596.9,778.3 601.5,752.2 L600.1,751.7 C592.3,773.7 584.7,792.7 581.2,805.9 Z" fill="url(#bld)" stroke="#bcc6c5" stroke-width="0.4"/>
<path d="M583.6,806.7 C589.6,803.5 595.9,781 600.4,757.9" fill="none" stroke="#17786f" stroke-width="1.15" stroke-linecap="round"/>
<path d="M581.6,806.7 C575.8,803.1 549.9,809.1 524.6,817.9 L524.9,819.3 C548.1,815.3 568.6,812.6 582.1,809.2 Z" fill="url(#bld)" stroke="#bcc6c5" stroke-width="0.4"/>
<path d="M581.6,806.7 C575.8,803.1 552.8,808.6 530.2,816" fill="none" stroke="#17786f" stroke-width="1.15" stroke-linecap="round"/>
<path d="M582.6,808.5 C582.3,815.5 600.4,836.2 620.8,855.1 L621.9,854.2 C606.8,834.9 594.3,817.5 584.6,806.9 Z" fill="url(#bld)" stroke="#bcc6c5" stroke-width="0.4"/>
<path d="M582.6,808.5 C582.3,815.5 598.6,833.8 616.3,850.9" fill="none" stroke="#17786f" stroke-width="1.15" stroke-linecap="round"/>
<circle cx="582.6" cy="807.3" r="1.9" fill="#e3e9e8" />
<polygon points="1328.7,841 1334.7,841 1334.7,854.6 1328.7,854.6" fill="#523a2e"/>
<polygon points="1331.7,841 1334.7,841 1334.7,854.6 1331.7,854.6" fill="#46312a"/>
<path d="M1331.7,824.6 L1346.3,842.2 Q1331.7,845.2 1317.1,842.2 Z" fill="#04695f"/>
<path d="M1331.7,817.6 L1343.4,833.9 Q1331.7,836.9 1320,833.9 Z" fill="#0e7b72"/>
<path d="M1331.7,811.2 L1340.2,825 Q1331.7,828 1323.2,825 Z" fill="#178c82"/>
<polygon points="1298.1,869.2 1309.3,875.9 1314.8,872.5 1314.8,870.9 1309.3,873.8 1298.1,867.6" fill="#c3cbca"/>
<path d="M1300.2,868.7 L1309.3,874 L1312.7,872.1 L1312.7,852.5 Q1312.7,849.7 1304.4,844.6 Q1303.1,843.7 1301.9,845 L1300.9,846.8 Q1300.2,847 1300.2,849.4 Z" fill="#f7faf9" stroke="#b4bebd" stroke-width="0.45"/>
<path d="M1309.3,874 L1312.7,872.1 L1312.7,852.9 Q1312.7,850.6 1311.4,850.8 L1309.3,853 Z" fill="#fbfdfc"/>
<path d="M1300.2,868.7 L1309.3,874 L1309.3,853 L1301.3,846.9 Q1300.2,847.2 1300.2,849.4 Z" fill="#c9d1d0"/>
<path d="M1301,847 L1309.3,853 L1311.8,850.8 Q1312.4,849.4 1304.7,845 Q1303.6,844 1302.3,845.1 Z" fill="#f5f8f7"/>
<polygon points="1301.6,851.6 1308,855.4 1308,858.9 1301.6,855.1" fill="#1d2123"/>
<polygon points="1305.3,859.1 1303.2,863 1304.4,862.9 1303.7,865.9 1306,861.7 1304.7,861.9" fill="#2aa79c"/>
<path d="M1311.8,858.2 q4.6,1.7 4.2,7.3 q-0.4,5 -3.6,7" fill="none" stroke="#3a4246" stroke-width="0.77"/>
<path d="M1312.1,861.6 q2.1,1.4 1.4,4.5 q-0.8,3.4 0.4,5.3" fill="none" stroke="#3a4246" stroke-width="0.7"/>
<polygon points="1313.1,878.1 1324.3,884.8 1329.8,881.4 1329.8,879.8 1324.3,882.7 1313.1,876.5" fill="#c3cbca"/>
<path d="M1315.2,877.6 L1324.3,882.9 L1327.7,881 L1327.7,861.4 Q1327.7,858.6 1319.4,853.5 Q1318.1,852.6 1316.9,853.9 L1315.9,855.7 Q1315.2,855.9 1315.2,858.3 Z" fill="#f7faf9" stroke="#b4bebd" stroke-width="0.45"/>
<path d="M1324.3,882.9 L1327.7,881 L1327.7,861.8 Q1327.7,859.5 1326.4,859.7 L1324.3,861.9 Z" fill="#fbfdfc"/>
<path d="M1315.2,877.6 L1324.3,882.9 L1324.3,861.9 L1316.3,855.8 Q1315.2,856.1 1315.2,858.3 Z" fill="#c9d1d0"/>
<path d="M1316,855.9 L1324.3,861.9 L1326.8,859.7 Q1327.4,858.3 1319.7,853.9 Q1318.6,852.9 1317.3,854 Z" fill="#f5f8f7"/>
<polygon points="1316.6,860.5 1323,864.3 1323,867.8 1316.6,864" fill="#1d2123"/>
<polygon points="1320.3,868 1318.2,871.9 1319.4,871.8 1318.7,874.8 1321,870.6 1319.7,870.8" fill="#2aa79c"/>
<path d="M1326.8,867.1 q4.6,1.7 4.2,7.3 q-0.4,5 -3.6,7" fill="none" stroke="#3a4246" stroke-width="0.77"/>
<path d="M1327.1,870.5 q2.1,1.4 1.4,4.5 q-0.8,3.4 0.4,5.3" fill="none" stroke="#3a4246" stroke-width="0.7"/>
</svg>
<footer id="foot"></footer>
<header>
<div id="pill"></div>
<div id="nav"></div>
<nav><a href="#" class="tp" style="left:1056.4px;letter-spacing:0.056px">Werken bij</a><a href="#" class="tp" style="left:1142.7px;letter-spacing:0.19px">Bespreek mijn casus</a></nav>
<nav><a href="#" class="nv" style="left:665.3px;letter-spacing:-0.037px">Voor wie</a><a href="#" class="nv" style="left:756.3px;letter-spacing:0.302px">Expertise</a><a href="#" class="nv" style="left:855.3px;letter-spacing:0.049px">Aanpak</a><a href="#" class="nv" style="left:939.0px;letter-spacing:0.401px">Projecten</a><a href="#" class="nv" style="left:1040.1px;letter-spacing:-0.081px">Kennisbank</a><a href="#" class="nv" style="left:1153.5px;letter-spacing:-0.159px">Over Enerzien</a></nav>
<svg id="logo" viewBox="281 48 32 34"><path d="M296.45,51.00 L308.44,57.92 L308.44,71.77 L296.45,78.70 L284.46,71.77 L284.46,57.92 Z M287.50,56.16 L296.45,61.33 L305.40,56.16 M293.40,52.76 L293.40,59.57 M299.50,52.76 L299.50,59.57 M284.46,61.45 L293.40,66.61 L293.40,76.94 M308.44,61.45 L299.50,66.61 L299.50,76.94 M284.46,68.25 L290.35,64.85 M287.50,73.54 L293.40,70.13 M308.44,68.25 L302.55,64.85 M305.40,73.54 L299.50,70.13" fill="none" stroke="#0c5352" stroke-width="1.4" stroke-linejoin="round" stroke-linecap="round"/></svg>
<a href="#" id="brand">Enerzien</a>
</header>
</body></html>
